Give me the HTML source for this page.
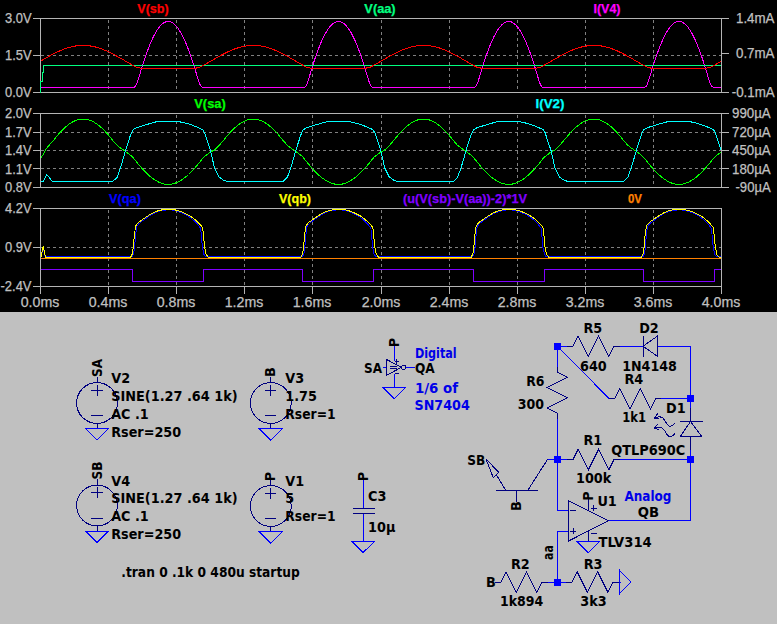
<!DOCTYPE html>
<html><head><meta charset="utf-8"><title>LTspice</title>
<style>html,body{margin:0;padding:0;background:#c0c0c0;overflow:hidden}svg{display:block}</style></head>
<body>
<svg width="777" height="624" viewBox="0 0 777 624">
<rect x="0" y="0" width="777" height="624" fill="#c0c0c0"/>
<rect x="0" y="0" width="777" height="312" fill="#000"/>
<g shape-rendering="crispEdges">
<line x1="108.5" y1="19.5" x2="108.5" y2="92.5" stroke="#808080" stroke-width="1" stroke-dasharray="3 3"/>
<line x1="176.5" y1="19.5" x2="176.5" y2="92.5" stroke="#808080" stroke-width="1" stroke-dasharray="3 3"/>
<line x1="244.5" y1="19.5" x2="244.5" y2="92.5" stroke="#808080" stroke-width="1" stroke-dasharray="3 3"/>
<line x1="312.5" y1="19.5" x2="312.5" y2="92.5" stroke="#808080" stroke-width="1" stroke-dasharray="3 3"/>
<line x1="381.5" y1="19.5" x2="381.5" y2="92.5" stroke="#808080" stroke-width="1" stroke-dasharray="3 3"/>
<line x1="449.5" y1="19.5" x2="449.5" y2="92.5" stroke="#808080" stroke-width="1" stroke-dasharray="3 3"/>
<line x1="517.5" y1="19.5" x2="517.5" y2="92.5" stroke="#808080" stroke-width="1" stroke-dasharray="3 3"/>
<line x1="585.5" y1="19.5" x2="585.5" y2="92.5" stroke="#808080" stroke-width="1" stroke-dasharray="3 3"/>
<line x1="653.5" y1="19.5" x2="653.5" y2="92.5" stroke="#808080" stroke-width="1" stroke-dasharray="3 3"/>
<line x1="41" y1="55.5" x2="721" y2="55.5" stroke="#808080" stroke-width="1" stroke-dasharray="3 3"/>
<line x1="33" y1="18.5" x2="729" y2="18.5" stroke="#b4b4b4" stroke-width="1" />
<line x1="33" y1="92.5" x2="729" y2="92.5" stroke="#b4b4b4" stroke-width="1" />
<line x1="40.5" y1="18.5" x2="40.5" y2="92.5" stroke="#b4b4b4" stroke-width="1" />
<line x1="721.5" y1="18.5" x2="721.5" y2="92.5" stroke="#b4b4b4" stroke-width="1" />
<line x1="33" y1="55.5" x2="41" y2="55.5" stroke="#b4b4b4" stroke-width="1" />
<line x1="108.5" y1="114.5" x2="108.5" y2="187.5" stroke="#808080" stroke-width="1" stroke-dasharray="3 3"/>
<line x1="176.5" y1="114.5" x2="176.5" y2="187.5" stroke="#808080" stroke-width="1" stroke-dasharray="3 3"/>
<line x1="244.5" y1="114.5" x2="244.5" y2="187.5" stroke="#808080" stroke-width="1" stroke-dasharray="3 3"/>
<line x1="312.5" y1="114.5" x2="312.5" y2="187.5" stroke="#808080" stroke-width="1" stroke-dasharray="3 3"/>
<line x1="381.5" y1="114.5" x2="381.5" y2="187.5" stroke="#808080" stroke-width="1" stroke-dasharray="3 3"/>
<line x1="449.5" y1="114.5" x2="449.5" y2="187.5" stroke="#808080" stroke-width="1" stroke-dasharray="3 3"/>
<line x1="517.5" y1="114.5" x2="517.5" y2="187.5" stroke="#808080" stroke-width="1" stroke-dasharray="3 3"/>
<line x1="585.5" y1="114.5" x2="585.5" y2="187.5" stroke="#808080" stroke-width="1" stroke-dasharray="3 3"/>
<line x1="653.5" y1="114.5" x2="653.5" y2="187.5" stroke="#808080" stroke-width="1" stroke-dasharray="3 3"/>
<line x1="41" y1="132.5" x2="721" y2="132.5" stroke="#808080" stroke-width="1" stroke-dasharray="3 3"/>
<line x1="41" y1="150.5" x2="721" y2="150.5" stroke="#808080" stroke-width="1" stroke-dasharray="3 3"/>
<line x1="41" y1="168.5" x2="721" y2="168.5" stroke="#808080" stroke-width="1" stroke-dasharray="3 3"/>
<line x1="33" y1="113.5" x2="729" y2="113.5" stroke="#b4b4b4" stroke-width="1" />
<line x1="33" y1="187.5" x2="729" y2="187.5" stroke="#b4b4b4" stroke-width="1" />
<line x1="40.5" y1="113.5" x2="40.5" y2="187.5" stroke="#b4b4b4" stroke-width="1" />
<line x1="721.5" y1="113.5" x2="721.5" y2="187.5" stroke="#b4b4b4" stroke-width="1" />
<line x1="33" y1="132.5" x2="41" y2="132.5" stroke="#b4b4b4" stroke-width="1" />
<line x1="33" y1="150.5" x2="41" y2="150.5" stroke="#b4b4b4" stroke-width="1" />
<line x1="33" y1="168.5" x2="41" y2="168.5" stroke="#b4b4b4" stroke-width="1" />
<line x1="108.5" y1="209.5" x2="108.5" y2="286.5" stroke="#808080" stroke-width="1" stroke-dasharray="3 3"/>
<line x1="176.5" y1="209.5" x2="176.5" y2="286.5" stroke="#808080" stroke-width="1" stroke-dasharray="3 3"/>
<line x1="244.5" y1="209.5" x2="244.5" y2="286.5" stroke="#808080" stroke-width="1" stroke-dasharray="3 3"/>
<line x1="312.5" y1="209.5" x2="312.5" y2="286.5" stroke="#808080" stroke-width="1" stroke-dasharray="3 3"/>
<line x1="381.5" y1="209.5" x2="381.5" y2="286.5" stroke="#808080" stroke-width="1" stroke-dasharray="3 3"/>
<line x1="449.5" y1="209.5" x2="449.5" y2="286.5" stroke="#808080" stroke-width="1" stroke-dasharray="3 3"/>
<line x1="517.5" y1="209.5" x2="517.5" y2="286.5" stroke="#808080" stroke-width="1" stroke-dasharray="3 3"/>
<line x1="585.5" y1="209.5" x2="585.5" y2="286.5" stroke="#808080" stroke-width="1" stroke-dasharray="3 3"/>
<line x1="653.5" y1="209.5" x2="653.5" y2="286.5" stroke="#808080" stroke-width="1" stroke-dasharray="3 3"/>
<line x1="41" y1="247.5" x2="721" y2="247.5" stroke="#808080" stroke-width="1" stroke-dasharray="3 3"/>
<line x1="33" y1="208.5" x2="722" y2="208.5" stroke="#b4b4b4" stroke-width="1" />
<line x1="33" y1="286.5" x2="722" y2="286.5" stroke="#b4b4b4" stroke-width="1" />
<line x1="40.5" y1="208.5" x2="40.5" y2="286.5" stroke="#b4b4b4" stroke-width="1" />
<line x1="721.5" y1="208.5" x2="721.5" y2="286.5" stroke="#b4b4b4" stroke-width="1" />
<line x1="33" y1="247.5" x2="41" y2="247.5" stroke="#b4b4b4" stroke-width="1" />
<line x1="40.5" y1="286.5" x2="40.5" y2="294" stroke="#b4b4b4" stroke-width="1" />
<line x1="108.5" y1="286.5" x2="108.5" y2="294" stroke="#b4b4b4" stroke-width="1" />
<line x1="176.5" y1="286.5" x2="176.5" y2="294" stroke="#b4b4b4" stroke-width="1" />
<line x1="244.5" y1="286.5" x2="244.5" y2="294" stroke="#b4b4b4" stroke-width="1" />
<line x1="312.5" y1="286.5" x2="312.5" y2="294" stroke="#b4b4b4" stroke-width="1" />
<line x1="381.5" y1="286.5" x2="381.5" y2="294" stroke="#b4b4b4" stroke-width="1" />
<line x1="449.5" y1="286.5" x2="449.5" y2="294" stroke="#b4b4b4" stroke-width="1" />
<line x1="517.5" y1="286.5" x2="517.5" y2="294" stroke="#b4b4b4" stroke-width="1" />
<line x1="585.5" y1="286.5" x2="585.5" y2="294" stroke="#b4b4b4" stroke-width="1" />
<line x1="653.5" y1="286.5" x2="653.5" y2="294" stroke="#b4b4b4" stroke-width="1" />
<line x1="721.5" y1="286.5" x2="721.5" y2="294" stroke="#b4b4b4" stroke-width="1" />
<line x1="721" y1="53.5" x2="729" y2="53.5" stroke="#b4b4b4" stroke-width="1" />
<line x1="721" y1="132.5" x2="729" y2="132.5" stroke="#b4b4b4" stroke-width="1" />
<line x1="721" y1="150.5" x2="729" y2="150.5" stroke="#b4b4b4" stroke-width="1" />
<line x1="721" y1="168.5" x2="729" y2="168.5" stroke="#b4b4b4" stroke-width="1" />
<polyline points="40.5,87.6 41.0,87.6 41.5,87.6 42.0,87.6 42.5,87.6 43.0,87.6 43.5,87.6 44.0,87.6 44.5,87.6 45.0,87.6 45.5,87.6 46.0,87.6 46.5,87.6 47.0,87.6 47.5,87.6 48.0,87.6 48.5,87.6 49.0,87.6 49.5,87.6 50.0,87.6 50.5,87.6 51.0,87.6 51.5,87.6 52.0,87.6 52.5,87.6 53.0,87.6 53.5,87.6 54.0,87.6 54.5,87.6 55.0,87.6 55.5,87.6 56.0,87.6 56.5,87.6 57.0,87.6 57.5,87.6 58.0,87.6 58.5,87.6 59.0,87.6 59.5,87.6 60.0,87.6 60.5,87.6 61.0,87.6 61.5,87.6 62.0,87.6 62.5,87.6 63.0,87.6 63.5,87.6 64.0,87.6 64.5,87.6 65.0,87.6 65.5,87.6 66.0,87.6 66.5,87.6 67.0,87.6 67.5,87.6 68.0,87.6 68.5,87.6 69.0,87.6 69.5,87.6 70.0,87.6 70.5,87.6 71.0,87.6 71.5,87.6 72.0,87.6 72.5,87.6 73.0,87.6 73.5,87.6 74.0,87.6 74.5,87.6 75.0,87.6 75.5,87.6 76.0,87.6 76.5,87.6 77.0,87.6 77.5,87.6 78.0,87.6 78.5,87.6 79.0,87.6 79.5,87.6 80.0,87.6 80.5,87.6 81.0,87.6 81.5,87.6 82.0,87.6 82.5,87.6 83.0,87.6 83.5,87.6 84.0,87.6 84.5,87.6 85.0,87.6 85.5,87.6 86.0,87.6 86.5,87.6 87.0,87.6 87.5,87.6 88.0,87.6 88.5,87.6 89.0,87.6 89.5,87.6 90.0,87.6 90.5,87.6 91.0,87.6 91.5,87.6 92.0,87.6 92.5,87.6 93.0,87.6 93.5,87.6 94.0,87.6 94.5,87.6 95.0,87.6 95.5,87.6 96.0,87.6 96.5,87.6 97.0,87.6 97.5,87.6 98.0,87.6 98.5,87.6 99.0,87.6 99.5,87.6 100.0,87.6 100.5,87.6 101.0,87.6 101.5,87.6 102.0,87.6 102.5,87.6 103.0,87.6 103.5,87.6 104.0,87.6 104.5,87.6 105.0,87.6 105.5,87.6 106.0,87.6 106.5,87.6 107.0,87.6 107.5,87.6 108.0,87.6 108.5,87.6 109.0,87.6 109.5,87.6 110.0,87.6 110.5,87.6 111.0,87.6 111.5,87.6 112.0,87.6 112.5,87.6 113.0,87.6 113.5,87.6 114.0,87.6 114.5,87.6 115.0,87.6 115.5,87.6 116.0,87.6 116.5,87.6 117.0,87.6 117.5,87.6 118.0,87.6 118.5,87.6 119.0,87.6 119.5,87.6 120.0,87.6 120.5,87.6 121.0,87.6 121.5,87.6 122.0,87.6 122.5,87.6 123.0,87.6 123.5,87.6 124.0,87.6 124.5,87.6 125.0,87.6 125.5,87.6 126.0,87.6 126.5,87.6 127.0,87.6 127.5,87.6 128.0,87.6 128.5,87.6 129.0,87.6 129.5,87.6 130.0,87.6 130.5,87.6 131.0,87.6 131.5,87.5 132.0,87.5 132.5,87.5 133.0,87.5 133.5,87.4 134.0,87.2 134.5,87.0 135.0,86.7 135.5,86.1 136.0,85.3 136.5,84.3 137.0,83.1 137.5,81.7 138.0,80.2 138.5,78.6 139.0,77.0 139.5,75.3 140.0,73.7 140.5,72.0 141.0,70.4 141.5,68.7 142.0,67.1 142.5,65.5 143.0,64.0 143.5,62.4 144.0,60.9 144.5,59.4 145.0,57.9 145.5,56.4 146.0,55.0 146.5,53.6 147.0,52.2 147.5,50.8 148.0,49.5 148.5,48.2 149.0,46.9 149.5,45.6 150.0,44.4 150.5,43.2 151.0,42.0 151.5,40.9 152.0,39.8 152.5,38.7 153.0,37.6 153.5,36.6 154.0,35.6 154.5,34.7 155.0,33.7 155.5,32.8 156.0,32.0 156.5,31.1 157.0,30.3 157.5,29.6 158.0,28.8 158.5,28.1 159.0,27.5 159.5,26.8 160.0,26.3 160.5,25.7 161.0,25.2 161.5,24.7 162.0,24.2 162.5,23.8 163.0,23.4 163.5,23.0 164.0,22.7 164.5,22.4 165.0,22.2 165.5,22.0 166.0,21.8 166.5,21.7 167.0,21.6 167.5,21.5 168.0,21.5 168.5,21.5 169.0,21.5 169.5,21.6 170.0,21.7 170.5,21.8 171.0,22.0 171.5,22.2 172.0,22.5 172.5,22.8 173.0,23.1 173.5,23.5 174.0,23.9 174.5,24.3 175.0,24.8 175.5,25.3 176.0,25.8 176.5,26.4 177.0,27.0 177.5,27.6 178.0,28.3 178.5,29.0 179.0,29.8 179.5,30.5 180.0,31.4 180.5,32.2 181.0,33.1 181.5,34.0 182.0,34.9 182.5,35.9 183.0,36.9 183.5,37.9 184.0,39.0 184.5,40.1 185.0,41.2 185.5,42.3 186.0,43.5 186.5,44.7 187.0,45.9 187.5,47.2 188.0,48.5 188.5,49.8 189.0,51.2 189.5,52.5 190.0,53.9 190.5,55.3 191.0,56.8 191.5,58.2 192.0,59.7 192.5,61.3 193.0,62.8 193.5,64.3 194.0,65.9 194.5,67.5 195.0,69.1 195.5,70.8 196.0,72.4 196.5,74.1 197.0,75.7 197.5,77.4 198.0,79.0 198.5,80.6 199.0,82.1 199.5,83.4 200.0,84.6 200.5,85.6 201.0,86.3 201.5,86.8 202.0,87.1 202.5,87.3 203.0,87.4 203.5,87.5 204.0,87.5 204.5,87.5 205.0,87.5 205.5,87.6 206.0,87.6 206.5,87.6 207.0,87.6 207.5,87.6 208.0,87.6 208.5,87.6 209.0,87.6 209.5,87.6 210.0,87.6 210.5,87.6 211.0,87.6 211.5,87.6 212.0,87.6 212.5,87.6 213.0,87.6 213.5,87.6 214.0,87.6 214.5,87.6 215.0,87.6 215.5,87.6 216.0,87.6 216.5,87.6 217.0,87.6 217.5,87.6 218.0,87.6 218.5,87.6 219.0,87.6 219.5,87.6 220.0,87.6 220.5,87.6 221.0,87.6 221.5,87.6 222.0,87.6 222.5,87.6 223.0,87.6 223.5,87.6 224.0,87.6 224.5,87.6 225.0,87.6 225.5,87.6 226.0,87.6 226.5,87.6 227.0,87.6 227.5,87.6 228.0,87.6 228.5,87.6 229.0,87.6 229.5,87.6 230.0,87.6 230.5,87.6 231.0,87.6 231.5,87.6 232.0,87.6 232.5,87.6 233.0,87.6 233.5,87.6 234.0,87.6 234.5,87.6 235.0,87.6 235.5,87.6 236.0,87.6 236.5,87.6 237.0,87.6 237.5,87.6 238.0,87.6 238.5,87.6 239.0,87.6 239.5,87.6 240.0,87.6 240.5,87.6 241.0,87.6 241.5,87.6 242.0,87.6 242.5,87.6 243.0,87.6 243.5,87.6 244.0,87.6 244.5,87.6 245.0,87.6 245.5,87.6 246.0,87.6 246.5,87.6 247.0,87.6 247.5,87.6 248.0,87.6 248.5,87.6 249.0,87.6 249.5,87.6 250.0,87.6 250.5,87.6 251.0,87.6 251.5,87.6 252.0,87.6 252.5,87.6 253.0,87.6 253.5,87.6 254.0,87.6 254.5,87.6 255.0,87.6 255.5,87.6 256.0,87.6 256.5,87.6 257.0,87.6 257.5,87.6 258.0,87.6 258.5,87.6 259.0,87.6 259.5,87.6 260.0,87.6 260.5,87.6 261.0,87.6 261.5,87.6 262.0,87.6 262.5,87.6 263.0,87.6 263.5,87.6 264.0,87.6 264.5,87.6 265.0,87.6 265.5,87.6 266.0,87.6 266.5,87.6 267.0,87.6 267.5,87.6 268.0,87.6 268.5,87.6 269.0,87.6 269.5,87.6 270.0,87.6 270.5,87.6 271.0,87.6 271.5,87.6 272.0,87.6 272.5,87.6 273.0,87.6 273.5,87.6 274.0,87.6 274.5,87.6 275.0,87.6 275.5,87.6 276.0,87.6 276.5,87.6 277.0,87.6 277.5,87.6 278.0,87.6 278.5,87.6 279.0,87.6 279.5,87.6 280.0,87.6 280.5,87.6 281.0,87.6 281.5,87.6 282.0,87.6 282.5,87.6 283.0,87.6 283.5,87.6 284.0,87.6 284.5,87.6 285.0,87.6 285.5,87.6 286.0,87.6 286.5,87.6 287.0,87.6 287.5,87.6 288.0,87.6 288.5,87.6 289.0,87.6 289.5,87.6 290.0,87.6 290.5,87.6 291.0,87.6 291.5,87.6 292.0,87.6 292.5,87.6 293.0,87.6 293.5,87.6 294.0,87.6 294.5,87.6 295.0,87.6 295.5,87.6 296.0,87.6 296.5,87.6 297.0,87.6 297.5,87.6 298.0,87.6 298.5,87.6 299.0,87.6 299.5,87.6 300.0,87.6 300.5,87.6 301.0,87.6 301.5,87.6 302.0,87.5 302.5,87.5 303.0,87.5 303.5,87.4 304.0,87.3 304.5,87.1 305.0,86.9 305.5,86.4 306.0,85.8 306.5,84.9 307.0,83.8 307.5,82.4 308.0,81.0 308.5,79.4 309.0,77.8 309.5,76.2 310.0,74.5 310.5,72.8 311.0,71.2 311.5,69.5 312.0,67.9 312.5,66.3 313.0,64.7 313.5,63.2 314.0,61.6 314.5,60.1 315.0,58.6 315.5,57.1 316.0,55.7 316.5,54.3 317.0,52.9 317.5,51.5 318.0,50.1 318.5,48.8 319.0,47.5 319.5,46.3 320.0,45.0 320.5,43.8 321.0,42.6 321.5,41.5 322.0,40.3 322.5,39.2 323.0,38.2 323.5,37.1 324.0,36.1 324.5,35.1 325.0,34.2 325.5,33.3 326.0,32.4 326.5,31.6 327.0,30.7 327.5,30.0 328.0,29.2 328.5,28.5 329.0,27.8 329.5,27.2 330.0,26.5 330.5,26.0 331.0,25.4 331.5,24.9 332.0,24.4 332.5,24.0 333.0,23.6 333.5,23.2 334.0,22.9 334.5,22.6 335.0,22.3 335.5,22.1 336.0,21.9 336.5,21.7 337.0,21.6 337.5,21.5 338.0,21.5 338.5,21.5 339.0,21.5 339.5,21.5 340.0,21.6 340.5,21.8 341.0,21.9 341.5,22.1 342.0,22.4 342.5,22.6 343.0,23.0 343.5,23.3 344.0,23.7 344.5,24.1 345.0,24.5 345.5,25.0 346.0,25.6 346.5,26.1 347.0,26.7 347.5,27.3 348.0,28.0 348.5,28.7 349.0,29.4 349.5,30.2 350.0,30.9 350.5,31.8 351.0,32.6 351.5,33.5 352.0,34.4 352.5,35.4 353.0,36.4 353.5,37.4 354.0,38.4 354.5,39.5 355.0,40.6 355.5,41.7 356.0,42.9 356.5,44.1 357.0,45.3 357.5,46.6 358.0,47.8 358.5,49.2 359.0,50.5 359.5,51.8 360.0,53.2 360.5,54.6 361.0,56.1 361.5,57.5 362.0,59.0 362.5,60.5 363.0,62.0 363.5,63.6 364.0,65.1 364.5,66.7 365.0,68.3 365.5,70.0 366.0,71.6 366.5,73.2 367.0,74.9 367.5,76.6 368.0,78.2 368.5,79.8 369.0,81.4 369.5,82.8 370.0,84.1 370.5,85.1 371.0,85.9 371.5,86.5 372.0,86.9 372.5,87.2 373.0,87.3 373.5,87.4 374.0,87.5 374.5,87.5 375.0,87.5 375.5,87.6 376.0,87.6 376.5,87.6 377.0,87.6 377.5,87.6 378.0,87.6 378.5,87.6 379.0,87.6 379.5,87.6 380.0,87.6 380.5,87.6 381.0,87.6 381.5,87.6 382.0,87.6 382.5,87.6 383.0,87.6 383.5,87.6 384.0,87.6 384.5,87.6 385.0,87.6 385.5,87.6 386.0,87.6 386.5,87.6 387.0,87.6 387.5,87.6 388.0,87.6 388.5,87.6 389.0,87.6 389.5,87.6 390.0,87.6 390.5,87.6 391.0,87.6 391.5,87.6 392.0,87.6 392.5,87.6 393.0,87.6 393.5,87.6 394.0,87.6 394.5,87.6 395.0,87.6 395.5,87.6 396.0,87.6 396.5,87.6 397.0,87.6 397.5,87.6 398.0,87.6 398.5,87.6 399.0,87.6 399.5,87.6 400.0,87.6 400.5,87.6 401.0,87.6 401.5,87.6 402.0,87.6 402.5,87.6 403.0,87.6 403.5,87.6 404.0,87.6 404.5,87.6 405.0,87.6 405.5,87.6 406.0,87.6 406.5,87.6 407.0,87.6 407.5,87.6 408.0,87.6 408.5,87.6 409.0,87.6 409.5,87.6 410.0,87.6 410.5,87.6 411.0,87.6 411.5,87.6 412.0,87.6 412.5,87.6 413.0,87.6 413.5,87.6 414.0,87.6 414.5,87.6 415.0,87.6 415.5,87.6 416.0,87.6 416.5,87.6 417.0,87.6 417.5,87.6 418.0,87.6 418.5,87.6 419.0,87.6 419.5,87.6 420.0,87.6 420.5,87.6 421.0,87.6 421.5,87.6 422.0,87.6 422.5,87.6 423.0,87.6 423.5,87.6 424.0,87.6 424.5,87.6 425.0,87.6 425.5,87.6 426.0,87.6 426.5,87.6 427.0,87.6 427.5,87.6 428.0,87.6 428.5,87.6 429.0,87.6 429.5,87.6 430.0,87.6 430.5,87.6 431.0,87.6 431.5,87.6 432.0,87.6 432.5,87.6 433.0,87.6 433.5,87.6 434.0,87.6 434.5,87.6 435.0,87.6 435.5,87.6 436.0,87.6 436.5,87.6 437.0,87.6 437.5,87.6 438.0,87.6 438.5,87.6 439.0,87.6 439.5,87.6 440.0,87.6 440.5,87.6 441.0,87.6 441.5,87.6 442.0,87.6 442.5,87.6 443.0,87.6 443.5,87.6 444.0,87.6 444.5,87.6 445.0,87.6 445.5,87.6 446.0,87.6 446.5,87.6 447.0,87.6 447.5,87.6 448.0,87.6 448.5,87.6 449.0,87.6 449.5,87.6 450.0,87.6 450.5,87.6 451.0,87.6 451.5,87.6 452.0,87.6 452.5,87.6 453.0,87.6 453.5,87.6 454.0,87.6 454.5,87.6 455.0,87.6 455.5,87.6 456.0,87.6 456.5,87.6 457.0,87.6 457.5,87.6 458.0,87.6 458.5,87.6 459.0,87.6 459.5,87.6 460.0,87.6 460.5,87.6 461.0,87.6 461.5,87.6 462.0,87.6 462.5,87.6 463.0,87.6 463.5,87.6 464.0,87.6 464.5,87.6 465.0,87.6 465.5,87.6 466.0,87.6 466.5,87.6 467.0,87.6 467.5,87.6 468.0,87.6 468.5,87.6 469.0,87.6 469.5,87.6 470.0,87.6 470.5,87.6 471.0,87.6 471.5,87.6 472.0,87.5 472.5,87.5 473.0,87.5 473.5,87.5 474.0,87.4 474.5,87.2 475.0,87.0 475.5,86.7 476.0,86.1 476.5,85.3 477.0,84.3 477.5,83.1 478.0,81.7 478.5,80.2 479.0,78.6 479.5,77.0 480.0,75.3 480.5,73.7 481.0,72.0 481.5,70.4 482.0,68.7 482.5,67.1 483.0,65.5 483.5,64.0 484.0,62.4 484.5,60.9 485.0,59.4 485.5,57.9 486.0,56.4 486.5,55.0 487.0,53.6 487.5,52.2 488.0,50.8 488.5,49.5 489.0,48.2 489.5,46.9 490.0,45.6 490.5,44.4 491.0,43.2 491.5,42.0 492.0,40.9 492.5,39.8 493.0,38.7 493.5,37.6 494.0,36.6 494.5,35.6 495.0,34.7 495.5,33.7 496.0,32.8 496.5,32.0 497.0,31.1 497.5,30.3 498.0,29.6 498.5,28.8 499.0,28.1 499.5,27.5 500.0,26.8 500.5,26.3 501.0,25.7 501.5,25.2 502.0,24.7 502.5,24.2 503.0,23.8 503.5,23.4 504.0,23.0 504.5,22.7 505.0,22.4 505.5,22.2 506.0,22.0 506.5,21.8 507.0,21.7 507.5,21.6 508.0,21.5 508.5,21.5 509.0,21.5 509.5,21.5 510.0,21.6 510.5,21.7 511.0,21.8 511.5,22.0 512.0,22.2 512.5,22.5 513.0,22.8 513.5,23.1 514.0,23.5 514.5,23.9 515.0,24.3 515.5,24.8 516.0,25.3 516.5,25.8 517.0,26.4 517.5,27.0 518.0,27.6 518.5,28.3 519.0,29.0 519.5,29.8 520.0,30.5 520.5,31.4 521.0,32.2 521.5,33.1 522.0,34.0 522.5,34.9 523.0,35.9 523.5,36.9 524.0,37.9 524.5,39.0 525.0,40.1 525.5,41.2 526.0,42.3 526.5,43.5 527.0,44.7 527.5,45.9 528.0,47.2 528.5,48.5 529.0,49.8 529.5,51.2 530.0,52.5 530.5,53.9 531.0,55.3 531.5,56.8 532.0,58.2 532.5,59.7 533.0,61.3 533.5,62.8 534.0,64.3 534.5,65.9 535.0,67.5 535.5,69.1 536.0,70.8 536.5,72.4 537.0,74.1 537.5,75.7 538.0,77.4 538.5,79.0 539.0,80.6 539.5,82.1 540.0,83.4 540.5,84.6 541.0,85.6 541.5,86.3 542.0,86.8 542.5,87.1 543.0,87.3 543.5,87.4 544.0,87.5 544.5,87.5 545.0,87.5 545.5,87.5 546.0,87.6 546.5,87.6 547.0,87.6 547.5,87.6 548.0,87.6 548.5,87.6 549.0,87.6 549.5,87.6 550.0,87.6 550.5,87.6 551.0,87.6 551.5,87.6 552.0,87.6 552.5,87.6 553.0,87.6 553.5,87.6 554.0,87.6 554.5,87.6 555.0,87.6 555.5,87.6 556.0,87.6 556.5,87.6 557.0,87.6 557.5,87.6 558.0,87.6 558.5,87.6 559.0,87.6 559.5,87.6 560.0,87.6 560.5,87.6 561.0,87.6 561.5,87.6 562.0,87.6 562.5,87.6 563.0,87.6 563.5,87.6 564.0,87.6 564.5,87.6 565.0,87.6 565.5,87.6 566.0,87.6 566.5,87.6 567.0,87.6 567.5,87.6 568.0,87.6 568.5,87.6 569.0,87.6 569.5,87.6 570.0,87.6 570.5,87.6 571.0,87.6 571.5,87.6 572.0,87.6 572.5,87.6 573.0,87.6 573.5,87.6 574.0,87.6 574.5,87.6 575.0,87.6 575.5,87.6 576.0,87.6 576.5,87.6 577.0,87.6 577.5,87.6 578.0,87.6 578.5,87.6 579.0,87.6 579.5,87.6 580.0,87.6 580.5,87.6 581.0,87.6 581.5,87.6 582.0,87.6 582.5,87.6 583.0,87.6 583.5,87.6 584.0,87.6 584.5,87.6 585.0,87.6 585.5,87.6 586.0,87.6 586.5,87.6 587.0,87.6 587.5,87.6 588.0,87.6 588.5,87.6 589.0,87.6 589.5,87.6 590.0,87.6 590.5,87.6 591.0,87.6 591.5,87.6 592.0,87.6 592.5,87.6 593.0,87.6 593.5,87.6 594.0,87.6 594.5,87.6 595.0,87.6 595.5,87.6 596.0,87.6 596.5,87.6 597.0,87.6 597.5,87.6 598.0,87.6 598.5,87.6 599.0,87.6 599.5,87.6 600.0,87.6 600.5,87.6 601.0,87.6 601.5,87.6 602.0,87.6 602.5,87.6 603.0,87.6 603.5,87.6 604.0,87.6 604.5,87.6 605.0,87.6 605.5,87.6 606.0,87.6 606.5,87.6 607.0,87.6 607.5,87.6 608.0,87.6 608.5,87.6 609.0,87.6 609.5,87.6 610.0,87.6 610.5,87.6 611.0,87.6 611.5,87.6 612.0,87.6 612.5,87.6 613.0,87.6 613.5,87.6 614.0,87.6 614.5,87.6 615.0,87.6 615.5,87.6 616.0,87.6 616.5,87.6 617.0,87.6 617.5,87.6 618.0,87.6 618.5,87.6 619.0,87.6 619.5,87.6 620.0,87.6 620.5,87.6 621.0,87.6 621.5,87.6 622.0,87.6 622.5,87.6 623.0,87.6 623.5,87.6 624.0,87.6 624.5,87.6 625.0,87.6 625.5,87.6 626.0,87.6 626.5,87.6 627.0,87.6 627.5,87.6 628.0,87.6 628.5,87.6 629.0,87.6 629.5,87.6 630.0,87.6 630.5,87.6 631.0,87.6 631.5,87.6 632.0,87.6 632.5,87.6 633.0,87.6 633.5,87.6 634.0,87.6 634.5,87.6 635.0,87.6 635.5,87.6 636.0,87.6 636.5,87.6 637.0,87.6 637.5,87.6 638.0,87.6 638.5,87.6 639.0,87.6 639.5,87.6 640.0,87.6 640.5,87.6 641.0,87.6 641.5,87.6 642.0,87.6 642.5,87.5 643.0,87.5 643.5,87.5 644.0,87.4 644.5,87.3 645.0,87.1 645.5,86.9 646.0,86.4 646.5,85.8 647.0,84.9 647.5,83.8 648.0,82.4 648.5,81.0 649.0,79.4 649.5,77.8 650.0,76.2 650.5,74.5 651.0,72.8 651.5,71.2 652.0,69.5 652.5,67.9 653.0,66.3 653.5,64.7 654.0,63.2 654.5,61.6 655.0,60.1 655.5,58.6 656.0,57.1 656.5,55.7 657.0,54.3 657.5,52.9 658.0,51.5 658.5,50.1 659.0,48.8 659.5,47.5 660.0,46.3 660.5,45.0 661.0,43.8 661.5,42.6 662.0,41.5 662.5,40.3 663.0,39.2 663.5,38.2 664.0,37.1 664.5,36.1 665.0,35.1 665.5,34.2 666.0,33.3 666.5,32.4 667.0,31.6 667.5,30.7 668.0,30.0 668.5,29.2 669.0,28.5 669.5,27.8 670.0,27.2 670.5,26.5 671.0,26.0 671.5,25.4 672.0,24.9 672.5,24.4 673.0,24.0 673.5,23.6 674.0,23.2 674.5,22.9 675.0,22.6 675.5,22.3 676.0,22.1 676.5,21.9 677.0,21.7 677.5,21.6 678.0,21.5 678.5,21.5 679.0,21.5 679.5,21.5 680.0,21.5 680.5,21.6 681.0,21.8 681.5,21.9 682.0,22.1 682.5,22.4 683.0,22.6 683.5,23.0 684.0,23.3 684.5,23.7 685.0,24.1 685.5,24.5 686.0,25.0 686.5,25.6 687.0,26.1 687.5,26.7 688.0,27.3 688.5,28.0 689.0,28.7 689.5,29.4 690.0,30.2 690.5,30.9 691.0,31.8 691.5,32.6 692.0,33.5 692.5,34.4 693.0,35.4 693.5,36.4 694.0,37.4 694.5,38.4 695.0,39.5 695.5,40.6 696.0,41.7 696.5,42.9 697.0,44.1 697.5,45.3 698.0,46.6 698.5,47.8 699.0,49.2 699.5,50.5 700.0,51.8 700.5,53.2 701.0,54.6 701.5,56.1 702.0,57.5 702.5,59.0 703.0,60.5 703.5,62.0 704.0,63.6 704.5,65.1 705.0,66.7 705.5,68.3 706.0,70.0 706.5,71.6 707.0,73.2 707.5,74.9 708.0,76.6 708.5,78.2 709.0,79.8 709.5,81.4 710.0,82.8 710.5,84.1 711.0,85.1 711.5,85.9 712.0,86.5 712.5,86.9 713.0,87.2 713.5,87.3 714.0,87.4 714.5,87.5 715.0,87.5 715.5,87.5 716.0,87.6 716.5,87.6 717.0,87.6 717.5,87.6 718.0,87.6 718.5,87.6 719.0,87.6 719.5,87.6 720.0,87.6 720.5,87.6 721.0,87.6" fill="none" stroke="#ff00ff" stroke-width="1" />
<polyline points="40.5,92.5 40.5,81.0 42.0,81.0 42.0,72.5 43.2,72.5 43.2,65.5 721.0,65.5" fill="none" stroke="#00ff80" stroke-width="1" />
<polyline points="40.5,61.2 41.0,60.9 41.5,60.6 42.0,60.3 42.5,60.0 43.0,59.7 43.5,59.4 44.0,59.1 44.5,58.9 45.0,58.6 45.5,58.3 46.0,58.0 46.5,57.7 47.0,57.4 47.5,57.1 48.0,56.9 48.5,56.6 49.0,56.3 49.5,56.0 50.0,55.8 50.5,55.5 51.0,55.2 51.5,54.9 52.0,54.7 52.5,54.4 53.0,54.1 53.5,53.9 54.0,53.6 54.5,53.4 55.0,53.1 55.5,52.9 56.0,52.6 56.5,52.4 57.0,52.1 57.5,51.9 58.0,51.7 58.5,51.4 59.0,51.2 59.5,51.0 60.0,50.8 60.5,50.6 61.0,50.3 61.5,50.1 62.0,49.9 62.5,49.7 63.0,49.5 63.5,49.3 64.0,49.1 64.5,48.9 65.0,48.8 65.5,48.6 66.0,48.4 66.5,48.2 67.0,48.1 67.5,47.9 68.0,47.8 68.5,47.6 69.0,47.5 69.5,47.3 70.0,47.2 70.5,47.1 71.0,46.9 71.5,46.8 72.0,46.7 72.5,46.6 73.0,46.5 73.5,46.4 74.0,46.3 74.5,46.2 75.0,46.1 75.5,46.0 76.0,45.9 76.5,45.8 77.0,45.8 77.5,45.7 78.0,45.7 78.5,45.6 79.0,45.6 79.5,45.5 80.0,45.5 80.5,45.5 81.0,45.4 81.5,45.4 82.0,45.4 82.5,45.4 83.0,45.4 83.5,45.4 84.0,45.4 84.5,45.4 85.0,45.4 85.5,45.5 86.0,45.5 86.5,45.5 87.0,45.6 87.5,45.6 88.0,45.6 88.5,45.7 89.0,45.8 89.5,45.8 90.0,45.9 90.5,46.0 91.0,46.1 91.5,46.1 92.0,46.2 92.5,46.3 93.0,46.4 93.5,46.5 94.0,46.7 94.5,46.8 95.0,46.9 95.5,47.0 96.0,47.2 96.5,47.3 97.0,47.4 97.5,47.6 98.0,47.7 98.5,47.9 99.0,48.0 99.5,48.2 100.0,48.4 100.5,48.5 101.0,48.7 101.5,48.9 102.0,49.1 102.5,49.3 103.0,49.5 103.5,49.7 104.0,49.9 104.5,50.1 105.0,50.3 105.5,50.5 106.0,50.7 106.5,50.9 107.0,51.2 107.5,51.4 108.0,51.6 108.5,51.8 109.0,52.1 109.5,52.3 110.0,52.6 110.5,52.8 111.0,53.1 111.5,53.3 112.0,53.6 112.5,53.8 113.0,54.1 113.5,54.3 114.0,54.6 114.5,54.9 115.0,55.1 115.5,55.4 116.0,55.7 116.5,56.0 117.0,56.2 117.5,56.5 118.0,56.8 118.5,57.1 119.0,57.4 119.5,57.6 120.0,57.9 120.5,58.2 121.0,58.5 121.5,58.8 122.0,59.1 122.5,59.4 123.0,59.6 123.5,59.9 124.0,60.2 124.5,60.5 125.0,60.8 125.5,61.1 126.0,61.4 126.5,61.7 127.0,62.0 127.5,62.3 128.0,62.6 128.5,62.8 129.0,63.1 129.5,63.4 130.0,63.7 130.5,64.0 131.0,64.3 131.5,64.6 132.0,64.9 132.5,65.1 133.0,65.4 133.5,65.7 134.0,66.0 134.5,66.2 135.0,66.5 135.5,66.7 136.0,67.0 136.5,67.2 137.0,67.4 137.5,67.5 138.0,67.7 138.5,67.8 139.0,67.9 139.5,67.9 140.0,68.0 140.5,68.0 141.0,68.0 141.5,68.0 142.0,68.1 142.5,68.1 143.0,68.1 143.5,68.1 144.0,68.1 144.5,68.1 145.0,68.1 145.5,68.1 146.0,68.1 146.5,68.1 147.0,68.1 147.5,68.1 148.0,68.1 148.5,68.1 149.0,68.1 149.5,68.1 150.0,68.1 150.5,68.1 151.0,68.1 151.5,68.1 152.0,68.1 152.5,68.1 153.0,68.1 153.5,68.1 154.0,68.1 154.5,68.1 155.0,68.1 155.5,68.1 156.0,68.1 156.5,68.1 157.0,68.1 157.5,68.1 158.0,68.1 158.5,68.1 159.0,68.1 159.5,68.1 160.0,68.1 160.5,68.1 161.0,68.1 161.5,68.1 162.0,68.1 162.5,68.1 163.0,68.1 163.5,68.1 164.0,68.1 164.5,68.1 165.0,68.1 165.5,68.1 166.0,68.1 166.5,68.1 167.0,68.1 167.5,68.1 168.0,68.1 168.5,68.1 169.0,68.1 169.5,68.1 170.0,68.1 170.5,68.1 171.0,68.1 171.5,68.1 172.0,68.1 172.5,68.1 173.0,68.1 173.5,68.1 174.0,68.1 174.5,68.1 175.0,68.1 175.5,68.1 176.0,68.1 176.5,68.1 177.0,68.1 177.5,68.1 178.0,68.1 178.5,68.1 179.0,68.1 179.5,68.1 180.0,68.1 180.5,68.1 181.0,68.1 181.5,68.1 182.0,68.1 182.5,68.1 183.0,68.1 183.5,68.1 184.0,68.1 184.5,68.1 185.0,68.1 185.5,68.1 186.0,68.1 186.5,68.1 187.0,68.1 187.5,68.1 188.0,68.1 188.5,68.1 189.0,68.1 189.5,68.1 190.0,68.1 190.5,68.1 191.0,68.1 191.5,68.1 192.0,68.1 192.5,68.1 193.0,68.1 193.5,68.1 194.0,68.1 194.5,68.1 195.0,68.0 195.5,68.0 196.0,68.0 196.5,68.0 197.0,67.9 197.5,67.9 198.0,67.8 198.5,67.6 199.0,67.5 199.5,67.3 200.0,67.1 200.5,66.9 201.0,66.7 201.5,66.4 202.0,66.2 202.5,65.9 203.0,65.6 203.5,65.3 204.0,65.1 204.5,64.8 205.0,64.5 205.5,64.2 206.0,63.9 206.5,63.6 207.0,63.4 207.5,63.1 208.0,62.8 208.5,62.5 209.0,62.2 209.5,61.9 210.0,61.6 210.5,61.3 211.0,61.0 211.5,60.7 212.0,60.4 212.5,60.2 213.0,59.9 213.5,59.6 214.0,59.3 214.5,59.0 215.0,58.7 215.5,58.4 216.0,58.1 216.5,57.8 217.0,57.6 217.5,57.3 218.0,57.0 218.5,56.7 219.0,56.4 219.5,56.2 220.0,55.9 220.5,55.6 221.0,55.3 221.5,55.1 222.0,54.8 222.5,54.5 223.0,54.3 223.5,54.0 224.0,53.8 224.5,53.5 225.0,53.2 225.5,53.0 226.0,52.8 226.5,52.5 227.0,52.3 227.5,52.0 228.0,51.8 228.5,51.6 229.0,51.3 229.5,51.1 230.0,50.9 230.5,50.7 231.0,50.4 231.5,50.2 232.0,50.0 232.5,49.8 233.0,49.6 233.5,49.4 234.0,49.2 234.5,49.0 235.0,48.9 235.5,48.7 236.0,48.5 236.5,48.3 237.0,48.2 237.5,48.0 238.0,47.8 238.5,47.7 239.0,47.5 239.5,47.4 240.0,47.3 240.5,47.1 241.0,47.0 241.5,46.9 242.0,46.7 242.5,46.6 243.0,46.5 243.5,46.4 244.0,46.3 244.5,46.2 245.0,46.1 245.5,46.0 246.0,46.0 246.5,45.9 247.0,45.8 247.5,45.7 248.0,45.7 248.5,45.6 249.0,45.6 249.5,45.5 250.0,45.5 250.5,45.5 251.0,45.4 251.5,45.4 252.0,45.4 252.5,45.4 253.0,45.4 253.5,45.4 254.0,45.4 254.5,45.4 255.0,45.4 255.5,45.4 256.0,45.5 256.5,45.5 257.0,45.5 257.5,45.6 258.0,45.6 258.5,45.7 259.0,45.7 259.5,45.8 260.0,45.9 260.5,45.9 261.0,46.0 261.5,46.1 262.0,46.2 262.5,46.3 263.0,46.4 263.5,46.5 264.0,46.6 264.5,46.7 265.0,46.8 265.5,47.0 266.0,47.1 266.5,47.2 267.0,47.4 267.5,47.5 268.0,47.6 268.5,47.8 269.0,48.0 269.5,48.1 270.0,48.3 270.5,48.5 271.0,48.6 271.5,48.8 272.0,49.0 272.5,49.2 273.0,49.4 273.5,49.6 274.0,49.8 274.5,50.0 275.0,50.2 275.5,50.4 276.0,50.6 276.5,50.8 277.0,51.0 277.5,51.3 278.0,51.5 278.5,51.7 279.0,52.0 279.5,52.2 280.0,52.4 280.5,52.7 281.0,52.9 281.5,53.2 282.0,53.4 282.5,53.7 283.0,54.0 283.5,54.2 284.0,54.5 284.5,54.7 285.0,55.0 285.5,55.3 286.0,55.5 286.5,55.8 287.0,56.1 287.5,56.4 288.0,56.6 288.5,56.9 289.0,57.2 289.5,57.5 290.0,57.8 290.5,58.1 291.0,58.3 291.5,58.6 292.0,58.9 292.5,59.2 293.0,59.5 293.5,59.8 294.0,60.1 294.5,60.4 295.0,60.7 295.5,61.0 296.0,61.2 296.5,61.5 297.0,61.8 297.5,62.1 298.0,62.4 298.5,62.7 299.0,63.0 299.5,63.3 300.0,63.6 300.5,63.9 301.0,64.1 301.5,64.4 302.0,64.7 302.5,65.0 303.0,65.3 303.5,65.5 304.0,65.8 304.5,66.1 305.0,66.4 305.5,66.6 306.0,66.8 306.5,67.1 307.0,67.3 307.5,67.5 308.0,67.6 308.5,67.7 309.0,67.8 309.5,67.9 310.0,68.0 310.5,68.0 311.0,68.0 311.5,68.0 312.0,68.1 312.5,68.1 313.0,68.1 313.5,68.1 314.0,68.1 314.5,68.1 315.0,68.1 315.5,68.1 316.0,68.1 316.5,68.1 317.0,68.1 317.5,68.1 318.0,68.1 318.5,68.1 319.0,68.1 319.5,68.1 320.0,68.1 320.5,68.1 321.0,68.1 321.5,68.1 322.0,68.1 322.5,68.1 323.0,68.1 323.5,68.1 324.0,68.1 324.5,68.1 325.0,68.1 325.5,68.1 326.0,68.1 326.5,68.1 327.0,68.1 327.5,68.1 328.0,68.1 328.5,68.1 329.0,68.1 329.5,68.1 330.0,68.1 330.5,68.1 331.0,68.1 331.5,68.1 332.0,68.1 332.5,68.1 333.0,68.1 333.5,68.1 334.0,68.1 334.5,68.1 335.0,68.1 335.5,68.1 336.0,68.1 336.5,68.1 337.0,68.1 337.5,68.1 338.0,68.1 338.5,68.1 339.0,68.1 339.5,68.1 340.0,68.1 340.5,68.1 341.0,68.1 341.5,68.1 342.0,68.1 342.5,68.1 343.0,68.1 343.5,68.1 344.0,68.1 344.5,68.1 345.0,68.1 345.5,68.1 346.0,68.1 346.5,68.1 347.0,68.1 347.5,68.1 348.0,68.1 348.5,68.1 349.0,68.1 349.5,68.1 350.0,68.1 350.5,68.1 351.0,68.1 351.5,68.1 352.0,68.1 352.5,68.1 353.0,68.1 353.5,68.1 354.0,68.1 354.5,68.1 355.0,68.1 355.5,68.1 356.0,68.1 356.5,68.1 357.0,68.1 357.5,68.1 358.0,68.1 358.5,68.1 359.0,68.1 359.5,68.1 360.0,68.1 360.5,68.1 361.0,68.1 361.5,68.1 362.0,68.1 362.5,68.1 363.0,68.1 363.5,68.1 364.0,68.1 364.5,68.1 365.0,68.1 365.5,68.0 366.0,68.0 366.5,68.0 367.0,67.9 367.5,67.9 368.0,67.8 368.5,67.7 369.0,67.6 369.5,67.4 370.0,67.2 370.5,67.0 371.0,66.8 371.5,66.5 372.0,66.3 372.5,66.0 373.0,65.8 373.5,65.5 374.0,65.2 374.5,64.9 375.0,64.6 375.5,64.4 376.0,64.1 376.5,63.8 377.0,63.5 377.5,63.2 378.0,62.9 378.5,62.6 379.0,62.3 379.5,62.0 380.0,61.8 380.5,61.5 381.0,61.2 381.5,60.9 382.0,60.6 382.5,60.3 383.0,60.0 383.5,59.7 384.0,59.4 384.5,59.1 385.0,58.9 385.5,58.6 386.0,58.3 386.5,58.0 387.0,57.7 387.5,57.4 388.0,57.1 388.5,56.9 389.0,56.6 389.5,56.3 390.0,56.0 390.5,55.8 391.0,55.5 391.5,55.2 392.0,54.9 392.5,54.7 393.0,54.4 393.5,54.1 394.0,53.9 394.5,53.6 395.0,53.4 395.5,53.1 396.0,52.9 396.5,52.6 397.0,52.4 397.5,52.1 398.0,51.9 398.5,51.7 399.0,51.4 399.5,51.2 400.0,51.0 400.5,50.8 401.0,50.6 401.5,50.3 402.0,50.1 402.5,49.9 403.0,49.7 403.5,49.5 404.0,49.3 404.5,49.1 405.0,48.9 405.5,48.8 406.0,48.6 406.5,48.4 407.0,48.2 407.5,48.1 408.0,47.9 408.5,47.8 409.0,47.6 409.5,47.5 410.0,47.3 410.5,47.2 411.0,47.1 411.5,46.9 412.0,46.8 412.5,46.7 413.0,46.6 413.5,46.5 414.0,46.4 414.5,46.3 415.0,46.2 415.5,46.1 416.0,46.0 416.5,45.9 417.0,45.8 417.5,45.8 418.0,45.7 418.5,45.7 419.0,45.6 419.5,45.6 420.0,45.5 420.5,45.5 421.0,45.5 421.5,45.4 422.0,45.4 422.5,45.4 423.0,45.4 423.5,45.4 424.0,45.4 424.5,45.4 425.0,45.4 425.5,45.4 426.0,45.5 426.5,45.5 427.0,45.5 427.5,45.6 428.0,45.6 428.5,45.6 429.0,45.7 429.5,45.8 430.0,45.8 430.5,45.9 431.0,46.0 431.5,46.1 432.0,46.1 432.5,46.2 433.0,46.3 433.5,46.4 434.0,46.5 434.5,46.7 435.0,46.8 435.5,46.9 436.0,47.0 436.5,47.2 437.0,47.3 437.5,47.4 438.0,47.6 438.5,47.7 439.0,47.9 439.5,48.0 440.0,48.2 440.5,48.4 441.0,48.5 441.5,48.7 442.0,48.9 442.5,49.1 443.0,49.3 443.5,49.5 444.0,49.7 444.5,49.9 445.0,50.1 445.5,50.3 446.0,50.5 446.5,50.7 447.0,50.9 447.5,51.2 448.0,51.4 448.5,51.6 449.0,51.8 449.5,52.1 450.0,52.3 450.5,52.6 451.0,52.8 451.5,53.1 452.0,53.3 452.5,53.6 453.0,53.8 453.5,54.1 454.0,54.3 454.5,54.6 455.0,54.9 455.5,55.1 456.0,55.4 456.5,55.7 457.0,56.0 457.5,56.2 458.0,56.5 458.5,56.8 459.0,57.1 459.5,57.4 460.0,57.6 460.5,57.9 461.0,58.2 461.5,58.5 462.0,58.8 462.5,59.1 463.0,59.4 463.5,59.6 464.0,59.9 464.5,60.2 465.0,60.5 465.5,60.8 466.0,61.1 466.5,61.4 467.0,61.7 467.5,62.0 468.0,62.3 468.5,62.6 469.0,62.8 469.5,63.1 470.0,63.4 470.5,63.7 471.0,64.0 471.5,64.3 472.0,64.6 472.5,64.9 473.0,65.1 473.5,65.4 474.0,65.7 474.5,66.0 475.0,66.2 475.5,66.5 476.0,66.7 476.5,67.0 477.0,67.2 477.5,67.4 478.0,67.5 478.5,67.7 479.0,67.8 479.5,67.9 480.0,67.9 480.5,68.0 481.0,68.0 481.5,68.0 482.0,68.0 482.5,68.1 483.0,68.1 483.5,68.1 484.0,68.1 484.5,68.1 485.0,68.1 485.5,68.1 486.0,68.1 486.5,68.1 487.0,68.1 487.5,68.1 488.0,68.1 488.5,68.1 489.0,68.1 489.5,68.1 490.0,68.1 490.5,68.1 491.0,68.1 491.5,68.1 492.0,68.1 492.5,68.1 493.0,68.1 493.5,68.1 494.0,68.1 494.5,68.1 495.0,68.1 495.5,68.1 496.0,68.1 496.5,68.1 497.0,68.1 497.5,68.1 498.0,68.1 498.5,68.1 499.0,68.1 499.5,68.1 500.0,68.1 500.5,68.1 501.0,68.1 501.5,68.1 502.0,68.1 502.5,68.1 503.0,68.1 503.5,68.1 504.0,68.1 504.5,68.1 505.0,68.1 505.5,68.1 506.0,68.1 506.5,68.1 507.0,68.1 507.5,68.1 508.0,68.1 508.5,68.1 509.0,68.1 509.5,68.1 510.0,68.1 510.5,68.1 511.0,68.1 511.5,68.1 512.0,68.1 512.5,68.1 513.0,68.1 513.5,68.1 514.0,68.1 514.5,68.1 515.0,68.1 515.5,68.1 516.0,68.1 516.5,68.1 517.0,68.1 517.5,68.1 518.0,68.1 518.5,68.1 519.0,68.1 519.5,68.1 520.0,68.1 520.5,68.1 521.0,68.1 521.5,68.1 522.0,68.1 522.5,68.1 523.0,68.1 523.5,68.1 524.0,68.1 524.5,68.1 525.0,68.1 525.5,68.1 526.0,68.1 526.5,68.1 527.0,68.1 527.5,68.1 528.0,68.1 528.5,68.1 529.0,68.1 529.5,68.1 530.0,68.1 530.5,68.1 531.0,68.1 531.5,68.1 532.0,68.1 532.5,68.1 533.0,68.1 533.5,68.1 534.0,68.1 534.5,68.1 535.0,68.1 535.5,68.0 536.0,68.0 536.5,68.0 537.0,68.0 537.5,67.9 538.0,67.9 538.5,67.8 539.0,67.6 539.5,67.5 540.0,67.3 540.5,67.1 541.0,66.9 541.5,66.7 542.0,66.4 542.5,66.2 543.0,65.9 543.5,65.6 544.0,65.3 544.5,65.1 545.0,64.8 545.5,64.5 546.0,64.2 546.5,63.9 547.0,63.6 547.5,63.4 548.0,63.1 548.5,62.8 549.0,62.5 549.5,62.2 550.0,61.9 550.5,61.6 551.0,61.3 551.5,61.0 552.0,60.7 552.5,60.4 553.0,60.2 553.5,59.9 554.0,59.6 554.5,59.3 555.0,59.0 555.5,58.7 556.0,58.4 556.5,58.1 557.0,57.8 557.5,57.6 558.0,57.3 558.5,57.0 559.0,56.7 559.5,56.4 560.0,56.2 560.5,55.9 561.0,55.6 561.5,55.3 562.0,55.1 562.5,54.8 563.0,54.5 563.5,54.3 564.0,54.0 564.5,53.8 565.0,53.5 565.5,53.2 566.0,53.0 566.5,52.8 567.0,52.5 567.5,52.3 568.0,52.0 568.5,51.8 569.0,51.6 569.5,51.3 570.0,51.1 570.5,50.9 571.0,50.7 571.5,50.4 572.0,50.2 572.5,50.0 573.0,49.8 573.5,49.6 574.0,49.4 574.5,49.2 575.0,49.0 575.5,48.9 576.0,48.7 576.5,48.5 577.0,48.3 577.5,48.2 578.0,48.0 578.5,47.8 579.0,47.7 579.5,47.5 580.0,47.4 580.5,47.3 581.0,47.1 581.5,47.0 582.0,46.9 582.5,46.7 583.0,46.6 583.5,46.5 584.0,46.4 584.5,46.3 585.0,46.2 585.5,46.1 586.0,46.0 586.5,46.0 587.0,45.9 587.5,45.8 588.0,45.7 588.5,45.7 589.0,45.6 589.5,45.6 590.0,45.5 590.5,45.5 591.0,45.5 591.5,45.4 592.0,45.4 592.5,45.4 593.0,45.4 593.5,45.4 594.0,45.4 594.5,45.4 595.0,45.4 595.5,45.4 596.0,45.4 596.5,45.5 597.0,45.5 597.5,45.5 598.0,45.6 598.5,45.6 599.0,45.7 599.5,45.7 600.0,45.8 600.5,45.9 601.0,45.9 601.5,46.0 602.0,46.1 602.5,46.2 603.0,46.3 603.5,46.4 604.0,46.5 604.5,46.6 605.0,46.7 605.5,46.8 606.0,47.0 606.5,47.1 607.0,47.2 607.5,47.4 608.0,47.5 608.5,47.6 609.0,47.8 609.5,48.0 610.0,48.1 610.5,48.3 611.0,48.5 611.5,48.6 612.0,48.8 612.5,49.0 613.0,49.2 613.5,49.4 614.0,49.6 614.5,49.8 615.0,50.0 615.5,50.2 616.0,50.4 616.5,50.6 617.0,50.8 617.5,51.0 618.0,51.3 618.5,51.5 619.0,51.7 619.5,52.0 620.0,52.2 620.5,52.4 621.0,52.7 621.5,52.9 622.0,53.2 622.5,53.4 623.0,53.7 623.5,54.0 624.0,54.2 624.5,54.5 625.0,54.7 625.5,55.0 626.0,55.3 626.5,55.5 627.0,55.8 627.5,56.1 628.0,56.4 628.5,56.6 629.0,56.9 629.5,57.2 630.0,57.5 630.5,57.8 631.0,58.1 631.5,58.3 632.0,58.6 632.5,58.9 633.0,59.2 633.5,59.5 634.0,59.8 634.5,60.1 635.0,60.4 635.5,60.7 636.0,61.0 636.5,61.2 637.0,61.5 637.5,61.8 638.0,62.1 638.5,62.4 639.0,62.7 639.5,63.0 640.0,63.3 640.5,63.6 641.0,63.9 641.5,64.1 642.0,64.4 642.5,64.7 643.0,65.0 643.5,65.3 644.0,65.5 644.5,65.8 645.0,66.1 645.5,66.4 646.0,66.6 646.5,66.8 647.0,67.1 647.5,67.3 648.0,67.5 648.5,67.6 649.0,67.7 649.5,67.8 650.0,67.9 650.5,68.0 651.0,68.0 651.5,68.0 652.0,68.0 652.5,68.1 653.0,68.1 653.5,68.1 654.0,68.1 654.5,68.1 655.0,68.1 655.5,68.1 656.0,68.1 656.5,68.1 657.0,68.1 657.5,68.1 658.0,68.1 658.5,68.1 659.0,68.1 659.5,68.1 660.0,68.1 660.5,68.1 661.0,68.1 661.5,68.1 662.0,68.1 662.5,68.1 663.0,68.1 663.5,68.1 664.0,68.1 664.5,68.1 665.0,68.1 665.5,68.1 666.0,68.1 666.5,68.1 667.0,68.1 667.5,68.1 668.0,68.1 668.5,68.1 669.0,68.1 669.5,68.1 670.0,68.1 670.5,68.1 671.0,68.1 671.5,68.1 672.0,68.1 672.5,68.1 673.0,68.1 673.5,68.1 674.0,68.1 674.5,68.1 675.0,68.1 675.5,68.1 676.0,68.1 676.5,68.1 677.0,68.1 677.5,68.1 678.0,68.1 678.5,68.1 679.0,68.1 679.5,68.1 680.0,68.1 680.5,68.1 681.0,68.1 681.5,68.1 682.0,68.1 682.5,68.1 683.0,68.1 683.5,68.1 684.0,68.1 684.5,68.1 685.0,68.1 685.5,68.1 686.0,68.1 686.5,68.1 687.0,68.1 687.5,68.1 688.0,68.1 688.5,68.1 689.0,68.1 689.5,68.1 690.0,68.1 690.5,68.1 691.0,68.1 691.5,68.1 692.0,68.1 692.5,68.1 693.0,68.1 693.5,68.1 694.0,68.1 694.5,68.1 695.0,68.1 695.5,68.1 696.0,68.1 696.5,68.1 697.0,68.1 697.5,68.1 698.0,68.1 698.5,68.1 699.0,68.1 699.5,68.1 700.0,68.1 700.5,68.1 701.0,68.1 701.5,68.1 702.0,68.1 702.5,68.1 703.0,68.1 703.5,68.1 704.0,68.1 704.5,68.1 705.0,68.1 705.5,68.1 706.0,68.0 706.5,68.0 707.0,68.0 707.5,67.9 708.0,67.9 708.5,67.8 709.0,67.7 709.5,67.6 710.0,67.4 710.5,67.2 711.0,67.0 711.5,66.8 712.0,66.5 712.5,66.3 713.0,66.0 713.5,65.8 714.0,65.5 714.5,65.2 715.0,64.9 715.5,64.6 716.0,64.4 716.5,64.1 717.0,63.8 717.5,63.5 718.0,63.2 718.5,62.9 719.0,62.6 719.5,62.3 720.0,62.0 720.5,61.8 721.0,61.5" fill="none" stroke="#ff0000" stroke-width="1" />
<polyline points="40.5,158.5 41.0,157.8 41.5,157.1 42.0,156.3 42.5,155.6 43.0,154.9 43.5,154.2 44.0,153.2 44.5,152.2 45.0,151.2 45.5,150.3 46.0,149.3 46.5,148.4 47.0,147.8 47.5,147.1 48.0,146.5 48.5,145.9 49.0,145.4 49.5,144.8 50.0,144.3 50.5,143.8 51.0,143.2 51.5,142.7 52.0,142.2 52.5,141.6 53.0,140.9 53.5,140.3 54.0,139.7 54.5,139.0 55.0,138.4 55.5,137.8 56.0,137.2 56.5,136.5 57.0,135.9 57.5,135.3 58.0,134.8 58.5,134.2 59.0,133.6 59.5,133.1 60.0,132.5 60.5,132.0 61.0,131.4 61.5,130.9 62.0,130.4 62.5,129.9 63.0,129.4 63.5,128.9 64.0,128.4 64.5,128.0 65.0,127.5 65.5,127.1 66.0,126.6 66.5,126.2 67.0,125.8 67.5,125.4 68.0,125.0 68.5,124.6 69.0,124.2 69.5,123.9 70.0,123.5 70.5,123.2 71.0,122.9 71.5,122.6 72.0,122.3 72.5,122.0 73.0,121.7 73.5,121.5 74.0,121.2 74.5,121.0 75.0,120.8 75.5,120.6 76.0,120.4 76.5,120.2 77.0,120.0 77.5,119.9 78.0,119.7 78.5,119.6 79.0,119.5 79.5,119.4 80.0,119.3 80.5,119.2 81.0,119.2 81.5,119.1 82.0,119.1 82.5,119.1 83.0,119.1 83.5,119.1 84.0,119.1 84.5,119.1 85.0,119.2 85.5,119.2 86.0,119.3 86.5,119.4 87.0,119.5 87.5,119.6 88.0,119.7 88.5,119.8 89.0,120.0 89.5,120.2 90.0,120.3 90.5,120.5 91.0,120.7 91.5,120.9 92.0,121.2 92.5,121.4 93.0,121.7 93.5,121.9 94.0,122.2 94.5,122.5 95.0,122.8 95.5,123.1 96.0,123.5 96.5,123.8 97.0,124.2 97.5,124.5 98.0,124.9 98.5,125.3 99.0,125.7 99.5,126.1 100.0,126.5 100.5,126.9 101.0,127.4 101.5,127.8 102.0,128.3 102.5,128.8 103.0,129.3 103.5,129.8 104.0,130.3 104.5,130.8 105.0,131.3 105.5,131.8 106.0,132.4 106.5,132.9 107.0,133.5 107.5,134.0 108.0,134.6 108.5,135.2 109.0,135.8 109.5,136.4 110.0,137.0 110.5,137.6 111.0,138.2 111.5,138.9 112.0,139.5 112.5,140.1 113.0,140.7 113.5,141.3 114.0,141.8 114.5,142.4 115.0,143.0 115.5,143.5 116.0,144.1 116.5,144.7 117.0,145.3 117.5,145.7 118.0,146.0 118.5,146.4 119.0,146.8 119.5,147.2 120.0,147.7 120.5,148.1 121.0,148.4 121.5,148.7 122.0,149.0 122.5,149.4 123.0,149.7 123.5,150.1 124.0,150.4 124.5,150.7 125.0,151.1 125.5,151.4 126.0,151.8 126.5,152.1 127.0,152.5 127.5,152.9 128.0,153.3 128.5,153.6 129.0,154.0 129.5,154.4 130.0,154.8 130.5,155.1 131.0,155.6 131.5,156.1 132.0,156.6 132.5,157.0 133.0,157.5 133.5,158.1 134.0,158.7 134.5,159.4 135.0,160.0 135.5,160.6 136.0,161.2 136.5,161.9 137.0,162.5 137.5,163.1 138.0,163.7 138.5,164.3 139.0,164.9 139.5,165.5 140.0,166.1 140.5,166.7 141.0,167.3 141.5,167.9 142.0,168.5 142.5,169.0 143.0,169.6 143.5,170.1 144.0,170.6 144.5,171.2 145.0,171.7 145.5,172.2 146.0,172.7 146.5,173.2 147.0,173.7 147.5,174.2 148.0,174.6 148.5,175.1 149.0,175.5 149.5,176.0 150.0,176.4 150.5,176.8 151.0,177.2 151.5,177.6 152.0,178.0 152.5,178.4 153.0,178.7 153.5,179.1 154.0,179.4 154.5,179.7 155.0,180.0 155.5,180.4 156.0,180.7 156.5,180.9 157.0,181.2 157.5,181.5 158.0,181.7 158.5,182.0 159.0,182.2 159.5,182.5 160.0,182.7 160.5,182.9 161.0,183.1 161.5,183.3 162.0,183.4 162.5,183.6 163.0,183.7 163.5,183.8 164.0,184.0 164.5,184.1 165.0,184.2 165.5,184.2 166.0,184.3 166.5,184.3 167.0,184.4 167.5,184.4 168.0,184.4 168.5,184.4 169.0,184.4 169.5,184.4 170.0,184.3 170.5,184.3 171.0,184.2 171.5,184.1 172.0,184.0 172.5,183.9 173.0,183.8 173.5,183.7 174.0,183.5 174.5,183.4 175.0,183.2 175.5,183.0 176.0,182.8 176.5,182.6 177.0,182.4 177.5,182.2 178.0,181.9 178.5,181.7 179.0,181.4 179.5,181.2 180.0,180.9 180.5,180.6 181.0,180.3 181.5,180.0 182.0,179.6 182.5,179.3 183.0,179.0 183.5,178.6 184.0,178.2 184.5,177.9 185.0,177.5 185.5,177.1 186.0,176.7 186.5,176.2 187.0,175.8 187.5,175.4 188.0,174.9 188.5,174.5 189.0,174.0 189.5,173.5 190.0,173.0 190.5,172.5 191.0,172.0 191.5,171.5 192.0,171.0 192.5,170.5 193.0,170.0 193.5,169.4 194.0,168.9 194.5,168.3 195.0,167.8 195.5,167.2 196.0,166.6 196.5,166.0 197.0,165.5 197.5,164.9 198.0,164.3 198.5,163.7 199.0,163.1 199.5,162.4 200.0,161.8 200.5,161.2 201.0,160.6 201.5,159.9 202.0,159.3 202.5,158.6 203.0,158.1 203.5,157.6 204.0,157.1 204.5,156.5 205.0,156.1 205.5,155.8 206.0,155.4 206.5,155.0 207.0,154.6 207.5,154.3 208.0,153.9 208.5,153.5 209.0,153.1 209.5,152.7 210.0,152.3 210.5,151.9 211.0,151.7 211.5,151.4 212.0,151.2 212.5,151.0 213.0,150.7 213.5,150.5 214.0,150.3 214.5,150.0 215.0,149.5 215.5,149.0 216.0,148.6 216.5,148.1 217.0,147.6 217.5,147.1 218.0,146.6 218.5,146.1 219.0,145.7 219.5,145.1 220.0,144.4 220.5,143.8 221.0,143.2 221.5,142.6 222.0,142.1 222.5,141.5 223.0,140.9 223.5,140.3 224.0,139.8 224.5,139.1 225.0,138.5 225.5,137.9 226.0,137.3 226.5,136.8 227.0,136.2 227.5,135.6 228.0,135.1 228.5,134.5 229.0,133.9 229.5,133.3 230.0,132.8 230.5,132.2 231.0,131.7 231.5,131.2 232.0,130.6 232.5,130.1 233.0,129.6 233.5,129.1 234.0,128.7 234.5,128.2 235.0,127.7 235.5,127.3 236.0,126.8 236.5,126.4 237.0,126.0 237.5,125.6 238.0,125.2 238.5,124.8 239.0,124.4 239.5,124.1 240.0,123.7 240.5,123.4 241.0,123.1 241.5,122.7 242.0,122.4 242.5,122.2 243.0,121.9 243.5,121.6 244.0,121.4 244.5,121.1 245.0,120.9 245.5,120.7 246.0,120.5 246.5,120.3 247.0,120.1 247.5,120.0 248.0,119.8 248.5,119.7 249.0,119.5 249.5,119.4 250.0,119.3 250.5,119.3 251.0,119.2 251.5,119.1 252.0,119.1 252.5,119.1 253.0,119.1 253.5,119.1 254.0,119.1 254.5,119.1 255.0,119.1 255.5,119.2 256.0,119.2 256.5,119.3 257.0,119.4 257.5,119.5 258.0,119.6 258.5,119.8 259.0,119.9 259.5,120.1 260.0,120.2 260.5,120.4 261.0,120.6 261.5,120.8 262.0,121.1 262.5,121.3 263.0,121.5 263.5,121.8 264.0,122.1 264.5,122.4 265.0,122.7 265.5,123.0 266.0,123.3 266.5,123.6 267.0,124.0 267.5,124.3 268.0,124.7 268.5,125.1 269.0,125.5 269.5,125.9 270.0,126.3 270.5,126.7 271.0,127.2 271.5,127.6 272.0,128.1 272.5,128.5 273.0,129.0 273.5,129.5 274.0,130.0 274.5,130.5 275.0,131.0 275.5,131.6 276.0,132.1 276.5,132.6 277.0,133.2 277.5,133.8 278.0,134.3 278.5,134.9 279.0,135.5 279.5,136.1 280.0,136.7 280.5,137.3 281.0,137.9 281.5,138.5 282.0,139.2 282.5,139.8 283.0,140.5 283.5,141.0 284.0,141.5 284.5,142.1 285.0,142.7 285.5,143.2 286.0,143.8 286.5,144.4 287.0,145.0 287.5,145.5 288.0,145.8 288.5,146.2 289.0,146.6 289.5,147.0 290.0,147.4 290.5,147.9 291.0,148.2 291.5,148.6 292.0,148.9 292.5,149.2 293.0,149.5 293.5,149.9 294.0,150.2 294.5,150.6 295.0,150.9 295.5,151.2 296.0,151.6 296.5,152.0 297.0,152.3 297.5,152.7 298.0,153.1 298.5,153.5 299.0,153.8 299.5,154.2 300.0,154.6 300.5,154.9 301.0,155.4 301.5,155.8 302.0,156.3 302.5,156.8 303.0,157.3 303.5,157.8 304.0,158.4 304.5,159.0 305.0,159.7 305.5,160.3 306.0,160.9 306.5,161.5 307.0,162.2 307.5,162.8 308.0,163.4 308.5,164.0 309.0,164.6 309.5,165.2 310.0,165.8 310.5,166.4 311.0,167.0 311.5,167.6 312.0,168.2 312.5,168.7 313.0,169.3 313.5,169.8 314.0,170.4 314.5,170.9 315.0,171.4 315.5,172.0 316.0,172.5 316.5,173.0 317.0,173.4 317.5,173.9 318.0,174.4 318.5,174.9 319.0,175.3 319.5,175.7 320.0,176.2 320.5,176.6 321.0,177.0 321.5,177.4 322.0,177.8 322.5,178.2 323.0,178.5 323.5,178.9 324.0,179.2 324.5,179.6 325.0,179.9 325.5,180.2 326.0,180.5 326.5,180.8 327.0,181.1 327.5,181.4 328.0,181.6 328.5,181.9 329.0,182.1 329.5,182.4 330.0,182.6 330.5,182.8 331.0,183.0 331.5,183.2 332.0,183.3 332.5,183.5 333.0,183.6 333.5,183.8 334.0,183.9 334.5,184.0 335.0,184.1 335.5,184.2 336.0,184.3 336.5,184.3 337.0,184.4 337.5,184.4 338.0,184.4 338.5,184.4 339.0,184.4 339.5,184.4 340.0,184.4 340.5,184.3 341.0,184.2 341.5,184.2 342.0,184.1 342.5,184.0 343.0,183.9 343.5,183.7 344.0,183.6 344.5,183.5 345.0,183.3 345.5,183.1 346.0,182.9 346.5,182.7 347.0,182.5 347.5,182.3 348.0,182.1 348.5,181.8 349.0,181.6 349.5,181.3 350.0,181.0 350.5,180.7 351.0,180.4 351.5,180.1 352.0,179.8 352.5,179.5 353.0,179.1 353.5,178.8 354.0,178.4 354.5,178.0 355.0,177.7 355.5,177.3 356.0,176.9 356.5,176.4 357.0,176.0 357.5,175.6 358.0,175.1 358.5,174.7 359.0,174.2 359.5,173.8 360.0,173.3 360.5,172.8 361.0,172.3 361.5,171.8 362.0,171.3 362.5,170.8 363.0,170.2 363.5,169.7 364.0,169.2 364.5,168.6 365.0,168.0 365.5,167.5 366.0,166.9 366.5,166.3 367.0,165.8 367.5,165.2 368.0,164.6 368.5,164.0 369.0,163.4 369.5,162.8 370.0,162.1 370.5,161.5 371.0,160.9 371.5,160.3 372.0,159.6 372.5,159.0 373.0,158.4 373.5,157.9 374.0,157.3 374.5,156.8 375.0,156.3 375.5,156.0 376.0,155.6 376.5,155.2 377.0,154.8 377.5,154.5 378.0,154.1 378.5,153.7 379.0,153.3 379.5,152.9 380.0,152.5 380.5,152.1 381.0,151.8 381.5,151.6 382.0,151.3 382.5,151.1 383.0,150.8 383.5,150.6 384.0,150.4 384.5,150.1 385.0,149.8 385.5,149.3 386.0,148.8 386.5,148.3 387.0,147.8 387.5,147.3 388.0,146.9 388.5,146.4 389.0,145.9 389.5,145.4 390.0,144.8 390.5,144.1 391.0,143.5 391.5,142.9 392.0,142.4 392.5,141.8 393.0,141.2 393.5,140.6 394.0,140.0 394.5,139.4 395.0,138.8 395.5,138.2 396.0,137.6 396.5,137.1 397.0,136.5 397.5,135.9 398.0,135.3 398.5,134.8 399.0,134.2 399.5,133.6 400.0,133.1 400.5,132.5 401.0,132.0 401.5,131.4 402.0,130.9 402.5,130.4 403.0,129.9 403.5,129.4 404.0,128.9 404.5,128.4 405.0,128.0 405.5,127.5 406.0,127.1 406.5,126.6 407.0,126.2 407.5,125.8 408.0,125.4 408.5,125.0 409.0,124.6 409.5,124.2 410.0,123.9 410.5,123.5 411.0,123.2 411.5,122.9 412.0,122.6 412.5,122.3 413.0,122.0 413.5,121.7 414.0,121.5 414.5,121.2 415.0,121.0 415.5,120.8 416.0,120.6 416.5,120.4 417.0,120.2 417.5,120.0 418.0,119.9 418.5,119.7 419.0,119.6 419.5,119.5 420.0,119.4 420.5,119.3 421.0,119.2 421.5,119.2 422.0,119.1 422.5,119.1 423.0,119.1 423.5,119.1 424.0,119.1 424.5,119.1 425.0,119.1 425.5,119.2 426.0,119.2 426.5,119.3 427.0,119.4 427.5,119.5 428.0,119.6 428.5,119.7 429.0,119.8 429.5,120.0 430.0,120.2 430.5,120.3 431.0,120.5 431.5,120.7 432.0,120.9 432.5,121.2 433.0,121.4 433.5,121.7 434.0,121.9 434.5,122.2 435.0,122.5 435.5,122.8 436.0,123.1 436.5,123.5 437.0,123.8 437.5,124.2 438.0,124.5 438.5,124.9 439.0,125.3 439.5,125.7 440.0,126.1 440.5,126.5 441.0,126.9 441.5,127.4 442.0,127.8 442.5,128.3 443.0,128.8 443.5,129.3 444.0,129.8 444.5,130.3 445.0,130.8 445.5,131.3 446.0,131.8 446.5,132.4 447.0,132.9 447.5,133.5 448.0,134.0 448.5,134.6 449.0,135.2 449.5,135.8 450.0,136.4 450.5,137.0 451.0,137.6 451.5,138.2 452.0,138.9 452.5,139.5 453.0,140.1 453.5,140.7 454.0,141.3 454.5,141.8 455.0,142.4 455.5,143.0 456.0,143.5 456.5,144.1 457.0,144.7 457.5,145.3 458.0,145.7 458.5,146.0 459.0,146.4 459.5,146.8 460.0,147.2 460.5,147.7 461.0,148.1 461.5,148.4 462.0,148.7 462.5,149.0 463.0,149.4 463.5,149.7 464.0,150.1 464.5,150.4 465.0,150.7 465.5,151.1 466.0,151.4 466.5,151.8 467.0,152.1 467.5,152.5 468.0,152.9 468.5,153.3 469.0,153.6 469.5,154.0 470.0,154.4 470.5,154.8 471.0,155.1 471.5,155.6 472.0,156.1 472.5,156.6 473.0,157.0 473.5,157.5 474.0,158.1 474.5,158.7 475.0,159.4 475.5,160.0 476.0,160.6 476.5,161.2 477.0,161.9 477.5,162.5 478.0,163.1 478.5,163.7 479.0,164.3 479.5,164.9 480.0,165.5 480.5,166.1 481.0,166.7 481.5,167.3 482.0,167.9 482.5,168.5 483.0,169.0 483.5,169.6 484.0,170.1 484.5,170.6 485.0,171.2 485.5,171.7 486.0,172.2 486.5,172.7 487.0,173.2 487.5,173.7 488.0,174.2 488.5,174.6 489.0,175.1 489.5,175.5 490.0,176.0 490.5,176.4 491.0,176.8 491.5,177.2 492.0,177.6 492.5,178.0 493.0,178.4 493.5,178.7 494.0,179.1 494.5,179.4 495.0,179.7 495.5,180.0 496.0,180.4 496.5,180.7 497.0,180.9 497.5,181.2 498.0,181.5 498.5,181.7 499.0,182.0 499.5,182.2 500.0,182.5 500.5,182.7 501.0,182.9 501.5,183.1 502.0,183.3 502.5,183.4 503.0,183.6 503.5,183.7 504.0,183.8 504.5,184.0 505.0,184.1 505.5,184.2 506.0,184.2 506.5,184.3 507.0,184.3 507.5,184.4 508.0,184.4 508.5,184.4 509.0,184.4 509.5,184.4 510.0,184.4 510.5,184.3 511.0,184.3 511.5,184.2 512.0,184.1 512.5,184.0 513.0,183.9 513.5,183.8 514.0,183.7 514.5,183.5 515.0,183.4 515.5,183.2 516.0,183.0 516.5,182.8 517.0,182.6 517.5,182.4 518.0,182.2 518.5,181.9 519.0,181.7 519.5,181.4 520.0,181.2 520.5,180.9 521.0,180.6 521.5,180.3 522.0,180.0 522.5,179.6 523.0,179.3 523.5,179.0 524.0,178.6 524.5,178.2 525.0,177.9 525.5,177.5 526.0,177.1 526.5,176.7 527.0,176.2 527.5,175.8 528.0,175.4 528.5,174.9 529.0,174.5 529.5,174.0 530.0,173.5 530.5,173.0 531.0,172.5 531.5,172.0 532.0,171.5 532.5,171.0 533.0,170.5 533.5,170.0 534.0,169.4 534.5,168.9 535.0,168.3 535.5,167.8 536.0,167.2 536.5,166.6 537.0,166.0 537.5,165.5 538.0,164.9 538.5,164.3 539.0,163.7 539.5,163.1 540.0,162.4 540.5,161.8 541.0,161.2 541.5,160.6 542.0,159.9 542.5,159.3 543.0,158.6 543.5,158.1 544.0,157.6 544.5,157.1 545.0,156.5 545.5,156.1 546.0,155.8 546.5,155.4 547.0,155.0 547.5,154.6 548.0,154.3 548.5,153.9 549.0,153.5 549.5,153.1 550.0,152.7 550.5,152.3 551.0,151.9 551.5,151.7 552.0,151.4 552.5,151.2 553.0,151.0 553.5,150.7 554.0,150.5 554.5,150.3 555.0,150.0 555.5,149.5 556.0,149.0 556.5,148.6 557.0,148.1 557.5,147.6 558.0,147.1 558.5,146.6 559.0,146.1 559.5,145.7 560.0,145.1 560.5,144.4 561.0,143.8 561.5,143.2 562.0,142.6 562.5,142.1 563.0,141.5 563.5,140.9 564.0,140.3 564.5,139.8 565.0,139.1 565.5,138.5 566.0,137.9 566.5,137.3 567.0,136.8 567.5,136.2 568.0,135.6 568.5,135.1 569.0,134.5 569.5,133.9 570.0,133.3 570.5,132.8 571.0,132.2 571.5,131.7 572.0,131.2 572.5,130.6 573.0,130.1 573.5,129.6 574.0,129.1 574.5,128.7 575.0,128.2 575.5,127.7 576.0,127.3 576.5,126.8 577.0,126.4 577.5,126.0 578.0,125.6 578.5,125.2 579.0,124.8 579.5,124.4 580.0,124.1 580.5,123.7 581.0,123.4 581.5,123.1 582.0,122.7 582.5,122.4 583.0,122.2 583.5,121.9 584.0,121.6 584.5,121.4 585.0,121.1 585.5,120.9 586.0,120.7 586.5,120.5 587.0,120.3 587.5,120.1 588.0,120.0 588.5,119.8 589.0,119.7 589.5,119.5 590.0,119.4 590.5,119.3 591.0,119.3 591.5,119.2 592.0,119.1 592.5,119.1 593.0,119.1 593.5,119.1 594.0,119.1 594.5,119.1 595.0,119.1 595.5,119.1 596.0,119.2 596.5,119.2 597.0,119.3 597.5,119.4 598.0,119.5 598.5,119.6 599.0,119.8 599.5,119.9 600.0,120.1 600.5,120.2 601.0,120.4 601.5,120.6 602.0,120.8 602.5,121.1 603.0,121.3 603.5,121.5 604.0,121.8 604.5,122.1 605.0,122.4 605.5,122.7 606.0,123.0 606.5,123.3 607.0,123.6 607.5,124.0 608.0,124.3 608.5,124.7 609.0,125.1 609.5,125.5 610.0,125.9 610.5,126.3 611.0,126.7 611.5,127.2 612.0,127.6 612.5,128.1 613.0,128.5 613.5,129.0 614.0,129.5 614.5,130.0 615.0,130.5 615.5,131.0 616.0,131.6 616.5,132.1 617.0,132.6 617.5,133.2 618.0,133.8 618.5,134.3 619.0,134.9 619.5,135.5 620.0,136.1 620.5,136.7 621.0,137.3 621.5,137.9 622.0,138.5 622.5,139.2 623.0,139.8 623.5,140.5 624.0,141.0 624.5,141.5 625.0,142.1 625.5,142.7 626.0,143.2 626.5,143.8 627.0,144.4 627.5,145.0 628.0,145.5 628.5,145.8 629.0,146.2 629.5,146.6 630.0,147.0 630.5,147.4 631.0,147.9 631.5,148.2 632.0,148.6 632.5,148.9 633.0,149.2 633.5,149.5 634.0,149.9 634.5,150.2 635.0,150.6 635.5,150.9 636.0,151.2 636.5,151.6 637.0,152.0 637.5,152.3 638.0,152.7 638.5,153.1 639.0,153.5 639.5,153.8 640.0,154.2 640.5,154.6 641.0,154.9 641.5,155.4 642.0,155.8 642.5,156.3 643.0,156.8 643.5,157.3 644.0,157.8 644.5,158.4 645.0,159.0 645.5,159.7 646.0,160.3 646.5,160.9 647.0,161.5 647.5,162.2 648.0,162.8 648.5,163.4 649.0,164.0 649.5,164.6 650.0,165.2 650.5,165.8 651.0,166.4 651.5,167.0 652.0,167.6 652.5,168.2 653.0,168.7 653.5,169.3 654.0,169.8 654.5,170.4 655.0,170.9 655.5,171.4 656.0,172.0 656.5,172.5 657.0,173.0 657.5,173.4 658.0,173.9 658.5,174.4 659.0,174.9 659.5,175.3 660.0,175.7 660.5,176.2 661.0,176.6 661.5,177.0 662.0,177.4 662.5,177.8 663.0,178.2 663.5,178.5 664.0,178.9 664.5,179.2 665.0,179.6 665.5,179.9 666.0,180.2 666.5,180.5 667.0,180.8 667.5,181.1 668.0,181.4 668.5,181.6 669.0,181.9 669.5,182.1 670.0,182.4 670.5,182.6 671.0,182.8 671.5,183.0 672.0,183.2 672.5,183.3 673.0,183.5 673.5,183.6 674.0,183.8 674.5,183.9 675.0,184.0 675.5,184.1 676.0,184.2 676.5,184.3 677.0,184.3 677.5,184.4 678.0,184.4 678.5,184.4 679.0,184.4 679.5,184.4 680.0,184.4 680.5,184.4 681.0,184.3 681.5,184.2 682.0,184.2 682.5,184.1 683.0,184.0 683.5,183.9 684.0,183.7 684.5,183.6 685.0,183.5 685.5,183.3 686.0,183.1 686.5,182.9 687.0,182.7 687.5,182.5 688.0,182.3 688.5,182.1 689.0,181.8 689.5,181.6 690.0,181.3 690.5,181.0 691.0,180.7 691.5,180.4 692.0,180.1 692.5,179.8 693.0,179.5 693.5,179.1 694.0,178.8 694.5,178.4 695.0,178.0 695.5,177.7 696.0,177.3 696.5,176.9 697.0,176.4 697.5,176.0 698.0,175.6 698.5,175.1 699.0,174.7 699.5,174.2 700.0,173.8 700.5,173.3 701.0,172.8 701.5,172.3 702.0,171.8 702.5,171.3 703.0,170.8 703.5,170.2 704.0,169.7 704.5,169.2 705.0,168.6 705.5,168.0 706.0,167.5 706.5,166.9 707.0,166.3 707.5,165.8 708.0,165.2 708.5,164.6 709.0,164.0 709.5,163.4 710.0,162.8 710.5,162.1 711.0,161.5 711.5,160.9 712.0,160.3 712.5,159.6 713.0,159.0 713.5,158.4 714.0,157.9 714.5,157.3 715.0,156.8 715.5,156.3 716.0,156.0 716.5,155.6 717.0,155.2 717.5,154.8 718.0,154.5 718.5,154.1 719.0,153.7 719.5,153.3 720.0,152.9 720.5,152.5 721.0,152.1" fill="none" stroke="#00ff00" stroke-width="1" />
<polyline points="40.5,181.5 41.0,181.5 41.5,181.5 42.0,181.5 42.5,181.5 43.0,181.5 43.5,181.5 44.0,180.3 44.5,179.2 45.0,178.0 45.5,177.0 46.0,176.0 46.5,175.0 47.0,175.4 47.5,175.8 48.0,176.1 48.5,176.5 49.0,177.2 49.5,177.9 50.0,178.5 50.5,179.2 51.0,179.9 51.5,180.6 52.0,181.2 52.5,181.5 53.0,181.5 53.5,181.5 54.0,181.5 54.5,181.5 55.0,181.5 55.5,181.5 56.0,181.5 56.5,181.5 57.0,181.5 57.5,181.5 58.0,181.5 58.5,181.5 59.0,181.5 59.5,181.5 60.0,181.5 60.5,181.5 61.0,181.5 61.5,181.5 62.0,181.5 62.5,181.5 63.0,181.5 63.5,181.5 64.0,181.5 64.5,181.5 65.0,181.5 65.5,181.5 66.0,181.5 66.5,181.5 67.0,181.5 67.5,181.5 68.0,181.5 68.5,181.5 69.0,181.5 69.5,181.5 70.0,181.5 70.5,181.5 71.0,181.5 71.5,181.5 72.0,181.5 72.5,181.5 73.0,181.5 73.5,181.5 74.0,181.5 74.5,181.5 75.0,181.5 75.5,181.5 76.0,181.5 76.5,181.5 77.0,181.5 77.5,181.5 78.0,181.5 78.5,181.5 79.0,181.5 79.5,181.5 80.0,181.5 80.5,181.5 81.0,181.5 81.5,181.5 82.0,181.5 82.5,181.5 83.0,181.5 83.5,181.5 84.0,181.5 84.5,181.5 85.0,181.5 85.5,181.5 86.0,181.5 86.5,181.5 87.0,181.5 87.5,181.5 88.0,181.5 88.5,181.5 89.0,181.5 89.5,181.5 90.0,181.5 90.5,181.5 91.0,181.5 91.5,181.5 92.0,181.5 92.5,181.5 93.0,181.5 93.5,181.5 94.0,181.5 94.5,181.5 95.0,181.5 95.5,181.5 96.0,181.5 96.5,181.5 97.0,181.5 97.5,181.5 98.0,181.5 98.5,181.5 99.0,181.5 99.5,181.5 100.0,181.5 100.5,181.5 101.0,181.5 101.5,181.5 102.0,181.5 102.5,181.5 103.0,181.5 103.5,181.5 104.0,181.5 104.5,181.5 105.0,181.5 105.5,181.5 106.0,181.5 106.5,181.5 107.0,181.5 107.5,181.5 108.0,181.5 108.5,181.5 109.0,181.5 109.5,181.5 110.0,181.5 110.5,181.5 111.0,181.5 111.5,181.5 112.0,181.5 112.5,181.5 113.0,181.2 113.5,180.8 114.0,180.3 114.5,179.8 115.0,179.4 115.5,178.9 116.0,178.4 116.5,178.0 117.0,177.5 117.5,176.1 118.0,174.8 118.5,173.4 119.0,172.1 119.5,170.7 120.0,169.4 120.5,168.0 121.0,166.3 121.5,164.5 122.0,162.8 122.5,161.1 123.0,159.3 123.5,157.6 124.0,155.9 124.5,154.2 125.0,152.4 125.5,150.7 126.0,149.1 126.5,147.5 127.0,145.9 127.5,144.4 128.0,142.8 128.5,141.2 129.0,139.7 129.5,138.1 130.0,136.6 130.5,135.0 131.0,134.0 131.5,132.9 132.0,131.9 132.5,130.8 133.0,129.8 133.5,129.5 134.0,129.1 134.5,128.8 135.0,128.5 135.5,128.2 136.0,128.0 136.5,127.8 137.0,127.6 137.5,127.4 138.0,127.3 138.5,127.1 139.0,126.9 139.5,126.8 140.0,126.6 140.5,126.5 141.0,126.3 141.5,126.2 142.0,126.0 142.5,125.8 143.0,125.7 143.5,125.5 144.0,125.4 144.5,125.2 145.0,125.1 145.5,124.9 146.0,124.8 146.5,124.6 147.0,124.5 147.5,124.3 148.0,124.2 148.5,124.0 149.0,123.9 149.5,123.7 150.0,123.6 150.5,123.4 151.0,123.3 151.5,123.1 152.0,123.0 152.5,122.9 153.0,122.7 153.5,122.6 154.0,122.4 154.5,122.3 155.0,122.1 155.5,122.0 156.0,121.9 156.5,121.8 157.0,121.7 157.5,121.7 158.0,121.6 158.5,121.6 159.0,121.5 159.5,121.5 160.0,121.4 160.5,121.4 161.0,121.4 161.5,121.3 162.0,121.3 162.5,121.3 163.0,121.3 163.5,121.3 164.0,121.3 164.5,121.2 165.0,121.2 165.5,121.2 166.0,121.2 166.5,121.2 167.0,121.2 167.5,121.2 168.0,121.2 168.5,121.2 169.0,121.2 169.5,121.2 170.0,121.2 170.5,121.2 171.0,121.2 171.5,121.2 172.0,121.3 172.5,121.3 173.0,121.3 173.5,121.3 174.0,121.3 174.5,121.4 175.0,121.4 175.5,121.4 176.0,121.4 176.5,121.5 177.0,121.5 177.5,121.6 178.0,121.6 178.5,121.7 179.0,121.7 179.5,121.8 180.0,121.9 180.5,122.0 181.0,122.1 181.5,122.1 182.0,122.3 182.5,122.4 183.0,122.5 183.5,122.6 184.0,122.7 184.5,122.9 185.0,123.0 185.5,123.1 186.0,123.3 186.5,123.4 187.0,123.5 187.5,123.7 188.0,123.8 188.5,124.0 189.0,124.1 189.5,124.3 190.0,124.5 190.5,124.6 191.0,124.8 191.5,125.0 192.0,125.1 192.5,125.3 193.0,125.5 193.5,125.7 194.0,125.9 194.5,126.1 195.0,126.3 195.5,126.5 196.0,126.7 196.5,126.9 197.0,127.1 197.5,127.3 198.0,127.6 198.5,127.8 199.0,128.0 199.5,128.2 200.0,128.4 200.5,128.6 201.0,128.9 201.5,129.1 202.0,129.3 202.5,129.5 203.0,130.2 203.5,131.0 204.0,131.8 204.5,132.5 205.0,134.0 205.5,135.5 206.0,137.1 206.5,138.6 207.0,140.1 207.5,141.6 208.0,143.1 208.5,144.6 209.0,146.0 209.5,147.5 210.0,149.0 210.5,150.5 211.0,152.7 211.5,154.9 212.0,157.1 212.5,159.2 213.0,161.4 213.5,163.6 214.0,165.8 214.5,168.0 215.0,169.0 215.5,170.0 216.0,171.0 216.5,172.0 217.0,173.0 217.5,174.0 218.0,175.0 218.5,176.0 219.0,177.0 219.5,177.3 220.0,177.7 220.5,178.1 221.0,178.4 221.5,178.8 222.0,179.1 222.5,179.4 223.0,179.8 223.5,180.2 224.0,180.5 224.5,180.6 225.0,180.8 225.5,180.9 226.0,181.0 226.5,181.1 227.0,181.2 227.5,181.4 228.0,181.5 228.5,181.5 229.0,181.5 229.5,181.5 230.0,181.5 230.5,181.5 231.0,181.5 231.5,181.5 232.0,181.5 232.5,181.5 233.0,181.5 233.5,181.5 234.0,181.5 234.5,181.5 235.0,181.5 235.5,181.5 236.0,181.5 236.5,181.5 237.0,181.5 237.5,181.5 238.0,181.5 238.5,181.5 239.0,181.5 239.5,181.5 240.0,181.5 240.5,181.5 241.0,181.5 241.5,181.5 242.0,181.5 242.5,181.5 243.0,181.5 243.5,181.5 244.0,181.5 244.5,181.5 245.0,181.5 245.5,181.5 246.0,181.5 246.5,181.5 247.0,181.5 247.5,181.5 248.0,181.5 248.5,181.5 249.0,181.5 249.5,181.5 250.0,181.5 250.5,181.5 251.0,181.5 251.5,181.5 252.0,181.5 252.5,181.5 253.0,181.5 253.5,181.5 254.0,181.5 254.5,181.5 255.0,181.5 255.5,181.5 256.0,181.5 256.5,181.5 257.0,181.5 257.5,181.5 258.0,181.5 258.5,181.5 259.0,181.5 259.5,181.5 260.0,181.5 260.5,181.5 261.0,181.5 261.5,181.5 262.0,181.5 262.5,181.5 263.0,181.5 263.5,181.5 264.0,181.5 264.5,181.5 265.0,181.5 265.5,181.5 266.0,181.5 266.5,181.5 267.0,181.5 267.5,181.5 268.0,181.5 268.5,181.5 269.0,181.5 269.5,181.5 270.0,181.5 270.5,181.5 271.0,181.5 271.5,181.5 272.0,181.5 272.5,181.5 273.0,181.5 273.5,181.5 274.0,181.5 274.5,181.5 275.0,181.5 275.5,181.5 276.0,181.5 276.5,181.5 277.0,181.5 277.5,181.5 278.0,181.5 278.5,181.5 279.0,181.5 279.5,181.5 280.0,181.5 280.5,181.5 281.0,181.5 281.5,181.5 282.0,181.5 282.5,181.5 283.0,181.5 283.5,181.0 284.0,180.5 284.5,180.1 285.0,179.6 285.5,179.1 286.0,178.7 286.5,178.2 287.0,177.7 287.5,176.8 288.0,175.5 288.5,174.1 289.0,172.8 289.5,171.4 290.0,170.0 290.5,168.7 291.0,167.1 291.5,165.4 292.0,163.7 292.5,161.9 293.0,160.2 293.5,158.5 294.0,156.8 294.5,155.0 295.0,153.3 295.5,151.6 296.0,149.8 296.5,148.3 297.0,146.7 297.5,145.2 298.0,143.6 298.5,142.0 299.0,140.5 299.5,138.9 300.0,137.3 300.5,135.8 301.0,134.5 301.5,133.4 302.0,132.4 302.5,131.4 303.0,130.3 303.5,129.6 304.0,129.3 304.5,128.9 305.0,128.6 305.5,128.4 306.0,128.1 306.5,127.9 307.0,127.7 307.5,127.5 308.0,127.3 308.5,127.2 309.0,127.0 309.5,126.9 310.0,126.7 310.5,126.5 311.0,126.4 311.5,126.2 312.0,126.1 312.5,125.9 313.0,125.8 313.5,125.6 314.0,125.5 314.5,125.3 315.0,125.1 315.5,125.0 316.0,124.8 316.5,124.7 317.0,124.5 317.5,124.4 318.0,124.2 318.5,124.1 319.0,123.9 319.5,123.8 320.0,123.6 320.5,123.5 321.0,123.4 321.5,123.2 322.0,123.1 322.5,122.9 323.0,122.8 323.5,122.6 324.0,122.5 324.5,122.4 325.0,122.2 325.5,122.1 326.0,122.0 326.5,121.9 327.0,121.8 327.5,121.7 328.0,121.6 328.5,121.6 329.0,121.5 329.5,121.5 330.0,121.5 330.5,121.4 331.0,121.4 331.5,121.4 332.0,121.3 332.5,121.3 333.0,121.3 333.5,121.3 334.0,121.3 334.5,121.2 335.0,121.2 335.5,121.2 336.0,121.2 336.5,121.2 337.0,121.2 337.5,121.2 338.0,121.2 338.5,121.2 339.0,121.2 339.5,121.2 340.0,121.2 340.5,121.2 341.0,121.2 341.5,121.2 342.0,121.3 342.5,121.3 343.0,121.3 343.5,121.3 344.0,121.3 344.5,121.3 345.0,121.4 345.5,121.4 346.0,121.4 346.5,121.5 347.0,121.5 347.5,121.5 348.0,121.6 348.5,121.6 349.0,121.7 349.5,121.8 350.0,121.8 350.5,121.9 351.0,122.0 351.5,122.1 352.0,122.2 352.5,122.3 353.0,122.4 353.5,122.5 354.0,122.7 354.5,122.8 355.0,122.9 355.5,123.1 356.0,123.2 356.5,123.3 357.0,123.5 357.5,123.6 358.0,123.8 358.5,123.9 359.0,124.1 359.5,124.2 360.0,124.4 360.5,124.5 361.0,124.7 361.5,124.9 362.0,125.1 362.5,125.2 363.0,125.4 363.5,125.6 364.0,125.8 364.5,126.0 365.0,126.2 365.5,126.4 366.0,126.6 366.5,126.8 367.0,127.0 367.5,127.2 368.0,127.4 368.5,127.7 369.0,127.9 369.5,128.1 370.0,128.3 370.5,128.5 371.0,128.7 371.5,129.0 372.0,129.2 372.5,129.4 373.0,129.9 373.5,130.6 374.0,131.4 374.5,132.1 375.0,133.3 375.5,134.8 376.0,136.3 376.5,137.8 377.0,139.3 377.5,140.8 378.0,142.3 378.5,143.8 379.0,145.3 379.5,146.8 380.0,148.3 380.5,149.8 381.0,151.6 381.5,153.8 382.0,156.0 382.5,158.2 383.0,160.3 383.5,162.5 384.0,164.7 384.5,166.9 385.0,168.5 385.5,169.5 386.0,170.5 386.5,171.5 387.0,172.5 387.5,173.5 388.0,174.5 388.5,175.5 389.0,176.5 389.5,177.2 390.0,177.5 390.5,177.9 391.0,178.2 391.5,178.6 392.0,178.9 392.5,179.3 393.0,179.6 393.5,180.0 394.0,180.3 394.5,180.6 395.0,180.7 395.5,180.8 396.0,180.9 396.5,181.1 397.0,181.2 397.5,181.3 398.0,181.4 398.5,181.5 399.0,181.5 399.5,181.5 400.0,181.5 400.5,181.5 401.0,181.5 401.5,181.5 402.0,181.5 402.5,181.5 403.0,181.5 403.5,181.5 404.0,181.5 404.5,181.5 405.0,181.5 405.5,181.5 406.0,181.5 406.5,181.5 407.0,181.5 407.5,181.5 408.0,181.5 408.5,181.5 409.0,181.5 409.5,181.5 410.0,181.5 410.5,181.5 411.0,181.5 411.5,181.5 412.0,181.5 412.5,181.5 413.0,181.5 413.5,181.5 414.0,181.5 414.5,181.5 415.0,181.5 415.5,181.5 416.0,181.5 416.5,181.5 417.0,181.5 417.5,181.5 418.0,181.5 418.5,181.5 419.0,181.5 419.5,181.5 420.0,181.5 420.5,181.5 421.0,181.5 421.5,181.5 422.0,181.5 422.5,181.5 423.0,181.5 423.5,181.5 424.0,181.5 424.5,181.5 425.0,181.5 425.5,181.5 426.0,181.5 426.5,181.5 427.0,181.5 427.5,181.5 428.0,181.5 428.5,181.5 429.0,181.5 429.5,181.5 430.0,181.5 430.5,181.5 431.0,181.5 431.5,181.5 432.0,181.5 432.5,181.5 433.0,181.5 433.5,181.5 434.0,181.5 434.5,181.5 435.0,181.5 435.5,181.5 436.0,181.5 436.5,181.5 437.0,181.5 437.5,181.5 438.0,181.5 438.5,181.5 439.0,181.5 439.5,181.5 440.0,181.5 440.5,181.5 441.0,181.5 441.5,181.5 442.0,181.5 442.5,181.5 443.0,181.5 443.5,181.5 444.0,181.5 444.5,181.5 445.0,181.5 445.5,181.5 446.0,181.5 446.5,181.5 447.0,181.5 447.5,181.5 448.0,181.5 448.5,181.5 449.0,181.5 449.5,181.5 450.0,181.5 450.5,181.5 451.0,181.5 451.5,181.5 452.0,181.5 452.5,181.5 453.0,181.5 453.5,181.2 454.0,180.8 454.5,180.3 455.0,179.8 455.5,179.4 456.0,178.9 456.5,178.4 457.0,178.0 457.5,177.5 458.0,176.1 458.5,174.8 459.0,173.4 459.5,172.1 460.0,170.7 460.5,169.4 461.0,168.0 461.5,166.3 462.0,164.5 462.5,162.8 463.0,161.1 463.5,159.3 464.0,157.6 464.5,155.9 465.0,154.2 465.5,152.4 466.0,150.7 466.5,149.1 467.0,147.5 467.5,145.9 468.0,144.4 468.5,142.8 469.0,141.2 469.5,139.7 470.0,138.1 470.5,136.6 471.0,135.0 471.5,134.0 472.0,132.9 472.5,131.9 473.0,130.8 473.5,129.8 474.0,129.5 474.5,129.1 475.0,128.8 475.5,128.5 476.0,128.2 476.5,128.0 477.0,127.8 477.5,127.6 478.0,127.4 478.5,127.3 479.0,127.1 479.5,126.9 480.0,126.8 480.5,126.6 481.0,126.5 481.5,126.3 482.0,126.2 482.5,126.0 483.0,125.8 483.5,125.7 484.0,125.5 484.5,125.4 485.0,125.2 485.5,125.1 486.0,124.9 486.5,124.8 487.0,124.6 487.5,124.5 488.0,124.3 488.5,124.2 489.0,124.0 489.5,123.9 490.0,123.7 490.5,123.6 491.0,123.4 491.5,123.3 492.0,123.1 492.5,123.0 493.0,122.9 493.5,122.7 494.0,122.6 494.5,122.4 495.0,122.3 495.5,122.1 496.0,122.0 496.5,121.9 497.0,121.8 497.5,121.7 498.0,121.7 498.5,121.6 499.0,121.6 499.5,121.5 500.0,121.5 500.5,121.4 501.0,121.4 501.5,121.4 502.0,121.3 502.5,121.3 503.0,121.3 503.5,121.3 504.0,121.3 504.5,121.3 505.0,121.2 505.5,121.2 506.0,121.2 506.5,121.2 507.0,121.2 507.5,121.2 508.0,121.2 508.5,121.2 509.0,121.2 509.5,121.2 510.0,121.2 510.5,121.2 511.0,121.2 511.5,121.2 512.0,121.2 512.5,121.3 513.0,121.3 513.5,121.3 514.0,121.3 514.5,121.3 515.0,121.4 515.5,121.4 516.0,121.4 516.5,121.4 517.0,121.5 517.5,121.5 518.0,121.6 518.5,121.6 519.0,121.7 519.5,121.7 520.0,121.8 520.5,121.9 521.0,122.0 521.5,122.1 522.0,122.1 522.5,122.3 523.0,122.4 523.5,122.5 524.0,122.6 524.5,122.7 525.0,122.9 525.5,123.0 526.0,123.1 526.5,123.3 527.0,123.4 527.5,123.5 528.0,123.7 528.5,123.8 529.0,124.0 529.5,124.1 530.0,124.3 530.5,124.5 531.0,124.6 531.5,124.8 532.0,125.0 532.5,125.1 533.0,125.3 533.5,125.5 534.0,125.7 534.5,125.9 535.0,126.1 535.5,126.3 536.0,126.5 536.5,126.7 537.0,126.9 537.5,127.1 538.0,127.3 538.5,127.6 539.0,127.8 539.5,128.0 540.0,128.2 540.5,128.4 541.0,128.6 541.5,128.9 542.0,129.1 542.5,129.3 543.0,129.5 543.5,130.2 544.0,131.0 544.5,131.8 545.0,132.5 545.5,134.0 546.0,135.5 546.5,137.1 547.0,138.6 547.5,140.1 548.0,141.6 548.5,143.1 549.0,144.6 549.5,146.0 550.0,147.5 550.5,149.0 551.0,150.5 551.5,152.7 552.0,154.9 552.5,157.1 553.0,159.2 553.5,161.4 554.0,163.6 554.5,165.8 555.0,168.0 555.5,169.0 556.0,170.0 556.5,171.0 557.0,172.0 557.5,173.0 558.0,174.0 558.5,175.0 559.0,176.0 559.5,177.0 560.0,177.3 560.5,177.7 561.0,178.1 561.5,178.4 562.0,178.8 562.5,179.1 563.0,179.4 563.5,179.8 564.0,180.2 564.5,180.5 565.0,180.6 565.5,180.8 566.0,180.9 566.5,181.0 567.0,181.1 567.5,181.2 568.0,181.4 568.5,181.5 569.0,181.5 569.5,181.5 570.0,181.5 570.5,181.5 571.0,181.5 571.5,181.5 572.0,181.5 572.5,181.5 573.0,181.5 573.5,181.5 574.0,181.5 574.5,181.5 575.0,181.5 575.5,181.5 576.0,181.5 576.5,181.5 577.0,181.5 577.5,181.5 578.0,181.5 578.5,181.5 579.0,181.5 579.5,181.5 580.0,181.5 580.5,181.5 581.0,181.5 581.5,181.5 582.0,181.5 582.5,181.5 583.0,181.5 583.5,181.5 584.0,181.5 584.5,181.5 585.0,181.5 585.5,181.5 586.0,181.5 586.5,181.5 587.0,181.5 587.5,181.5 588.0,181.5 588.5,181.5 589.0,181.5 589.5,181.5 590.0,181.5 590.5,181.5 591.0,181.5 591.5,181.5 592.0,181.5 592.5,181.5 593.0,181.5 593.5,181.5 594.0,181.5 594.5,181.5 595.0,181.5 595.5,181.5 596.0,181.5 596.5,181.5 597.0,181.5 597.5,181.5 598.0,181.5 598.5,181.5 599.0,181.5 599.5,181.5 600.0,181.5 600.5,181.5 601.0,181.5 601.5,181.5 602.0,181.5 602.5,181.5 603.0,181.5 603.5,181.5 604.0,181.5 604.5,181.5 605.0,181.5 605.5,181.5 606.0,181.5 606.5,181.5 607.0,181.5 607.5,181.5 608.0,181.5 608.5,181.5 609.0,181.5 609.5,181.5 610.0,181.5 610.5,181.5 611.0,181.5 611.5,181.5 612.0,181.5 612.5,181.5 613.0,181.5 613.5,181.5 614.0,181.5 614.5,181.5 615.0,181.5 615.5,181.5 616.0,181.5 616.5,181.5 617.0,181.5 617.5,181.5 618.0,181.5 618.5,181.5 619.0,181.5 619.5,181.5 620.0,181.5 620.5,181.5 621.0,181.5 621.5,181.5 622.0,181.5 622.5,181.5 623.0,181.5 623.5,181.5 624.0,181.0 624.5,180.5 625.0,180.1 625.5,179.6 626.0,179.1 626.5,178.7 627.0,178.2 627.5,177.7 628.0,176.8 628.5,175.5 629.0,174.1 629.5,172.8 630.0,171.4 630.5,170.0 631.0,168.7 631.5,167.1 632.0,165.4 632.5,163.7 633.0,161.9 633.5,160.2 634.0,158.5 634.5,156.8 635.0,155.0 635.5,153.3 636.0,151.6 636.5,149.8 637.0,148.3 637.5,146.7 638.0,145.2 638.5,143.6 639.0,142.0 639.5,140.5 640.0,138.9 640.5,137.3 641.0,135.8 641.5,134.5 642.0,133.4 642.5,132.4 643.0,131.4 643.5,130.3 644.0,129.6 644.5,129.3 645.0,128.9 645.5,128.6 646.0,128.4 646.5,128.1 647.0,127.9 647.5,127.7 648.0,127.5 648.5,127.3 649.0,127.2 649.5,127.0 650.0,126.9 650.5,126.7 651.0,126.5 651.5,126.4 652.0,126.2 652.5,126.1 653.0,125.9 653.5,125.8 654.0,125.6 654.5,125.5 655.0,125.3 655.5,125.1 656.0,125.0 656.5,124.8 657.0,124.7 657.5,124.5 658.0,124.4 658.5,124.2 659.0,124.1 659.5,123.9 660.0,123.8 660.5,123.6 661.0,123.5 661.5,123.4 662.0,123.2 662.5,123.1 663.0,122.9 663.5,122.8 664.0,122.6 664.5,122.5 665.0,122.4 665.5,122.2 666.0,122.1 666.5,122.0 667.0,121.9 667.5,121.8 668.0,121.7 668.5,121.6 669.0,121.6 669.5,121.5 670.0,121.5 670.5,121.5 671.0,121.4 671.5,121.4 672.0,121.4 672.5,121.3 673.0,121.3 673.5,121.3 674.0,121.3 674.5,121.3 675.0,121.2 675.5,121.2 676.0,121.2 676.5,121.2 677.0,121.2 677.5,121.2 678.0,121.2 678.5,121.2 679.0,121.2 679.5,121.2 680.0,121.2 680.5,121.2 681.0,121.2 681.5,121.2 682.0,121.2 682.5,121.3 683.0,121.3 683.5,121.3 684.0,121.3 684.5,121.3 685.0,121.3 685.5,121.4 686.0,121.4 686.5,121.4 687.0,121.5 687.5,121.5 688.0,121.5 688.5,121.6 689.0,121.6 689.5,121.7 690.0,121.8 690.5,121.8 691.0,121.9 691.5,122.0 692.0,122.1 692.5,122.2 693.0,122.3 693.5,122.4 694.0,122.5 694.5,122.7 695.0,122.8 695.5,122.9 696.0,123.1 696.5,123.2 697.0,123.3 697.5,123.5 698.0,123.6 698.5,123.8 699.0,123.9 699.5,124.1 700.0,124.2 700.5,124.4 701.0,124.5 701.5,124.7 702.0,124.9 702.5,125.1 703.0,125.2 703.5,125.4 704.0,125.6 704.5,125.8 705.0,126.0 705.5,126.2 706.0,126.4 706.5,126.6 707.0,126.8 707.5,127.0 708.0,127.2 708.5,127.4 709.0,127.7 709.5,127.9 710.0,128.1 710.5,128.3 711.0,128.5 711.5,128.7 712.0,129.0 712.5,129.2 713.0,129.4 713.5,129.9 714.0,130.6 714.5,131.4 715.0,132.1 715.5,133.3 716.0,134.8 716.5,136.3 717.0,137.8 717.5,139.3 718.0,140.8 718.5,142.3 719.0,143.8 719.5,145.3 720.0,146.8 720.5,148.3 721.0,149.8" fill="none" stroke="#00ffff" stroke-width="1" />
<polyline points="40.5,256.5 40.8,256.5 41.0,256.5 41.2,256.5 41.5,255.6 41.8,254.3 42.0,253.1 42.2,251.8 42.5,250.6 42.8,249.3 43.0,248.1 43.2,247.3 43.5,248.4 43.8,249.5 44.0,250.6 44.2,251.8 44.5,253.1 44.8,254.3 45.0,255.6 45.2,256.5 45.5,256.5 45.8,256.5 46.0,256.5 46.2,256.5 46.5,256.5 46.8,256.5 47.0,256.5 47.2,256.5 47.5,256.5 47.8,256.5 48.0,256.5 48.2,256.5 48.5,256.5 48.8,256.5 49.0,256.5 49.2,256.5 49.5,256.5 49.8,256.5 50.0,256.5 50.2,256.5 50.5,256.5 50.8,256.5 51.0,256.5 51.2,256.5 51.5,256.5 51.8,256.5 52.0,256.5 52.2,256.5 52.5,256.5 52.8,256.5 53.0,256.5 53.2,256.5 53.5,256.5 53.8,256.5 54.0,256.5 54.2,256.5 54.5,256.5 54.8,256.5 55.0,256.5 55.2,256.5 55.5,256.5 55.8,256.5 56.0,256.5 56.2,256.5 56.5,256.5 56.8,256.5 57.0,256.5 57.2,256.5 57.5,256.5 57.8,256.5 58.0,256.5 58.2,256.5 58.5,256.5 58.8,256.5 59.0,256.5 59.2,256.5 59.5,256.5 59.8,256.5 60.0,256.5 60.2,256.5 60.5,256.5 60.8,256.5 61.0,256.5 61.2,256.5 61.5,256.5 61.8,256.5 62.0,256.5 62.2,256.5 62.5,256.5 62.8,256.5 63.0,256.5 63.2,256.5 63.5,256.5 63.8,256.5 64.0,256.5 64.2,256.5 64.5,256.5 64.8,256.5 65.0,256.5 65.2,256.5 65.5,256.5 65.8,256.5 66.0,256.5 66.2,256.5 66.5,256.5 66.8,256.5 67.0,256.5 67.2,256.5 67.5,256.5 67.8,256.5 68.0,256.5 68.2,256.5 68.5,256.5 68.8,256.5 69.0,256.5 69.2,256.5 69.5,256.5 69.8,256.5 70.0,256.5 70.2,256.5 70.5,256.5 70.8,256.5 71.0,256.5 71.2,256.5 71.5,256.5 71.8,256.5 72.0,256.5 72.2,256.5 72.5,256.5 72.8,256.5 73.0,256.5 73.2,256.5 73.5,256.5 73.8,256.5 74.0,256.5 74.2,256.5 74.5,256.5 74.8,256.5 75.0,256.5 75.2,256.5 75.5,256.5 75.8,256.5 76.0,256.5 76.2,256.5 76.5,256.5 76.8,256.5 77.0,256.5 77.2,256.5 77.5,256.5 77.8,256.5 78.0,256.5 78.2,256.5 78.5,256.5 78.8,256.5 79.0,256.5 79.2,256.5 79.5,256.5 79.8,256.5 80.0,256.5 80.2,256.5 80.5,256.5 80.8,256.5 81.0,256.5 81.2,256.5 81.5,256.5 81.8,256.5 82.0,256.5 82.2,256.5 82.5,256.5 82.8,256.5 83.0,256.5 83.2,256.5 83.5,256.5 83.8,256.5 84.0,256.5 84.2,256.5 84.5,256.5 84.8,256.5 85.0,256.5 85.2,256.5 85.5,256.5 85.8,256.5 86.0,256.5 86.2,256.5 86.5,256.5 86.8,256.5 87.0,256.5 87.2,256.5 87.5,256.5 87.8,256.5 88.0,256.5 88.2,256.5 88.5,256.5 88.8,256.5 89.0,256.5 89.2,256.5 89.5,256.5 89.8,256.5 90.0,256.5 90.2,256.5 90.5,256.5 90.8,256.5 91.0,256.5 91.2,256.5 91.5,256.5 91.8,256.5 92.0,256.5 92.2,256.5 92.5,256.5 92.8,256.5 93.0,256.5 93.2,256.5 93.5,256.5 93.8,256.5 94.0,256.5 94.2,256.5 94.5,256.5 94.8,256.5 95.0,256.5 95.2,256.5 95.5,256.5 95.8,256.5 96.0,256.5 96.2,256.5 96.5,256.5 96.8,256.5 97.0,256.5 97.2,256.5 97.5,256.5 97.8,256.5 98.0,256.5 98.2,256.5 98.5,256.5 98.8,256.5 99.0,256.5 99.2,256.5 99.5,256.5 99.8,256.5 100.0,256.5 100.2,256.5 100.5,256.5 100.8,256.5 101.0,256.5 101.2,256.5 101.5,256.5 101.8,256.5 102.0,256.5 102.2,256.5 102.5,256.5 102.8,256.5 103.0,256.5 103.2,256.5 103.5,256.5 103.8,256.5 104.0,256.5 104.2,256.5 104.5,256.5 104.8,256.5 105.0,256.5 105.2,256.5 105.5,256.5 105.8,256.5 106.0,256.5 106.2,256.5 106.5,256.5 106.8,256.5 107.0,256.5 107.2,256.5 107.5,256.5 107.8,256.5 108.0,256.5 108.2,256.5 108.5,256.5 108.8,256.5 109.0,256.5 109.2,256.5 109.5,256.5 109.8,256.5 110.0,256.5 110.2,256.5 110.5,256.5 110.8,256.5 111.0,256.5 111.2,256.5 111.5,256.5 111.8,256.5 112.0,256.5 112.2,256.5 112.5,256.5 112.8,256.5 113.0,256.5 113.2,256.5 113.5,256.5 113.8,256.5 114.0,256.5 114.2,256.5 114.5,256.5 114.8,256.5 115.0,256.5 115.2,256.5 115.5,256.5 115.8,256.5 116.0,256.5 116.2,256.5 116.5,256.5 116.8,256.5 117.0,256.5 117.2,256.5 117.5,256.5 117.8,256.5 118.0,256.5 118.2,256.5 118.5,256.5 118.8,256.5 119.0,256.5 119.2,256.5 119.5,256.5 119.8,256.5 120.0,256.5 120.2,256.5 120.5,256.5 120.8,256.5 121.0,256.5 121.2,256.5 121.5,256.5 121.8,256.5 122.0,256.5 122.2,256.5 122.5,256.5 122.8,256.5 123.0,256.5 123.2,256.5 123.5,256.5 123.8,256.5 124.0,256.5 124.2,256.5 124.5,256.5 124.8,256.5 125.0,256.5 125.2,256.5 125.5,256.5 125.8,256.5 126.0,256.5 126.2,256.5 126.5,256.5 126.8,256.5 127.0,256.5 127.2,256.5 127.5,256.5 127.8,256.5 128.0,256.5 128.2,256.5 128.5,256.5 128.8,256.5 129.0,256.5 129.2,256.5 129.5,256.5 129.8,256.5 130.0,256.5 130.2,256.5 130.5,256.5 130.8,256.5 131.0,256.5 131.2,256.5 131.5,256.5 131.8,256.5 132.0,256.5 132.2,256.5 132.5,256.1 132.8,255.6 133.0,255.1 133.2,254.6 133.5,254.1 133.8,252.7 134.0,251.0 134.2,250.0 134.5,248.3 134.8,245.4 135.0,242.4 135.2,239.4 135.5,236.5 135.8,234.5 136.0,232.5 136.2,230.5 136.5,228.5 136.8,226.6 137.0,226.2 137.2,225.9 137.5,225.5 137.8,225.2 138.0,224.8 138.2,224.5 138.5,224.2 138.8,223.9 139.0,223.7 139.2,223.4 139.5,223.2 139.8,223.0 140.0,222.8 140.2,222.6 140.5,222.4 140.8,222.2 141.0,222.0 141.2,221.8 141.5,221.6 141.8,221.4 142.0,221.3 142.2,221.1 142.5,220.9 142.8,220.7 143.0,220.5 143.2,220.4 143.5,220.2 143.8,220.0 144.0,219.8 144.2,219.6 144.5,219.5 144.8,219.3 145.0,219.1 145.2,218.9 145.5,218.7 145.8,218.5 146.0,218.4 146.2,218.2 146.5,218.0 146.8,217.8 147.0,217.6 147.2,217.5 147.5,217.3 147.8,217.1 148.0,216.9 148.2,216.8 148.5,216.6 148.8,216.4 149.0,216.2 149.2,216.1 149.5,215.9 149.8,215.7 150.0,215.6 150.2,215.4 150.5,215.3 150.8,215.1 151.0,214.9 151.2,214.8 151.5,214.6 151.8,214.5 152.0,214.3 152.2,214.2 152.5,214.0 152.8,213.9 153.0,213.8 153.2,213.6 153.5,213.5 153.8,213.4 154.0,213.2 154.2,213.1 154.5,213.0 154.8,212.9 155.0,212.8 155.2,212.7 155.5,212.6 155.8,212.4 156.0,212.3 156.2,212.2 156.5,212.1 156.8,212.0 157.0,212.0 157.2,211.9 157.5,211.8 157.8,211.7 158.0,211.6 158.2,211.5 158.5,211.4 158.8,211.4 159.0,211.3 159.2,211.2 159.5,211.2 159.8,211.1 160.0,211.0 160.2,210.9 160.5,210.9 160.8,210.8 161.0,210.8 161.2,210.7 161.5,210.7 161.8,210.6 162.0,210.5 162.2,210.5 162.5,210.4 162.8,210.4 163.0,210.4 163.2,210.3 163.5,210.3 163.8,210.2 164.0,210.2 164.2,210.1 164.5,210.1 164.8,210.1 165.0,210.0 165.2,210.0 165.5,210.0 165.8,210.0 166.0,209.9 166.2,209.9 166.5,209.9 166.8,209.9 167.0,209.8 167.2,209.8 167.5,209.8 167.8,209.8 168.0,209.8 168.2,209.8 168.5,209.8 168.8,209.8 169.0,209.8 169.2,209.8 169.5,209.8 169.8,209.8 170.0,209.8 170.2,209.9 170.5,209.9 170.8,209.9 171.0,209.9 171.2,209.9 171.5,209.9 171.8,210.0 172.0,210.0 172.2,210.0 172.5,210.1 172.8,210.1 173.0,210.2 173.2,210.2 173.5,210.2 173.8,210.3 174.0,210.3 174.2,210.4 174.5,210.4 174.8,210.5 175.0,210.5 175.2,210.6 175.5,210.7 175.8,210.7 176.0,210.8 176.2,210.9 176.5,210.9 176.8,211.0 177.0,211.1 177.2,211.2 177.5,211.2 177.8,211.3 178.0,211.4 178.2,211.5 178.5,211.6 178.8,211.7 179.0,211.8 179.2,211.9 179.5,212.0 179.8,212.0 180.0,212.1 180.2,212.2 180.5,212.3 180.8,212.4 181.0,212.5 181.2,212.7 181.5,212.8 181.8,212.9 182.0,213.0 182.2,213.1 182.5,213.2 182.8,213.3 183.0,213.4 183.2,213.6 183.5,213.7 183.8,213.8 184.0,213.9 184.2,214.0 184.5,214.2 184.8,214.3 185.0,214.4 185.2,214.6 185.5,214.7 185.8,214.8 186.0,214.9 186.2,215.1 186.5,215.2 186.8,215.4 187.0,215.5 187.2,215.6 187.5,215.8 187.8,215.9 188.0,216.1 188.2,216.2 188.5,216.4 188.8,216.5 189.0,216.7 189.2,216.9 189.5,217.0 189.8,217.2 190.0,217.4 190.2,217.6 190.5,217.8 190.8,217.9 191.0,218.1 191.2,218.3 191.5,218.5 191.8,218.7 192.0,218.9 192.2,219.1 192.5,219.4 192.8,219.6 193.0,219.8 193.2,220.0 193.5,220.2 193.8,220.5 194.0,220.7 194.2,220.9 194.5,221.2 194.8,221.4 195.0,221.6 195.2,221.9 195.5,222.1 195.8,222.4 196.0,222.6 196.2,222.9 196.5,223.1 196.8,223.4 197.0,223.7 197.2,223.9 197.5,224.2 197.8,224.5 198.0,224.8 198.2,225.1 198.5,225.4 198.8,225.7 199.0,226.0 199.2,226.4 199.5,226.7 199.8,227.0 200.0,227.4 200.2,227.7 200.5,228.0 200.8,229.4 201.0,231.9 201.2,234.4 201.5,236.9 201.8,239.7 202.0,242.5 202.2,245.3 202.5,247.6 202.8,248.9 203.0,250.2 203.2,250.9 203.5,252.3 203.8,253.6 204.0,254.6 204.2,254.9 204.5,255.3 204.8,255.6 205.0,255.9 205.2,256.3 205.5,256.5 205.8,256.5 206.0,256.5 206.2,256.5 206.5,256.5 206.8,256.5 207.0,256.5 207.2,256.5 207.5,256.5 207.8,256.5 208.0,256.5 208.2,256.5 208.5,256.5 208.8,256.5 209.0,256.5 209.2,256.5 209.5,256.5 209.8,256.5 210.0,256.5 210.2,256.5 210.5,256.5 210.8,256.5 211.0,256.5 211.2,256.5 211.5,256.5 211.8,256.5 212.0,256.5 212.2,256.5 212.5,256.5 212.8,256.5 213.0,256.5 213.2,256.5 213.5,256.5 213.8,256.5 214.0,256.5 214.2,256.5 214.5,256.5 214.8,256.5 215.0,256.5 215.2,256.5 215.5,256.5 215.8,256.5 216.0,256.5 216.2,256.5 216.5,256.5 216.8,256.5 217.0,256.5 217.2,256.5 217.5,256.5 217.8,256.5 218.0,256.5 218.2,256.5 218.5,256.5 218.8,256.5 219.0,256.5 219.2,256.5 219.5,256.5 219.8,256.5 220.0,256.5 220.2,256.5 220.5,256.5 220.8,256.5 221.0,256.5 221.2,256.5 221.5,256.5 221.8,256.5 222.0,256.5 222.2,256.5 222.5,256.5 222.8,256.5 223.0,256.5 223.2,256.5 223.5,256.5 223.8,256.5 224.0,256.5 224.2,256.5 224.5,256.5 224.8,256.5 225.0,256.5 225.2,256.5 225.5,256.5 225.8,256.5 226.0,256.5 226.2,256.5 226.5,256.5 226.8,256.5 227.0,256.5 227.2,256.5 227.5,256.5 227.8,256.5 228.0,256.5 228.2,256.5 228.5,256.5 228.8,256.5 229.0,256.5 229.2,256.5 229.5,256.5 229.8,256.5 230.0,256.5 230.2,256.5 230.5,256.5 230.8,256.5 231.0,256.5 231.2,256.5 231.5,256.5 231.8,256.5 232.0,256.5 232.2,256.5 232.5,256.5 232.8,256.5 233.0,256.5 233.2,256.5 233.5,256.5 233.8,256.5 234.0,256.5 234.2,256.5 234.5,256.5 234.8,256.5 235.0,256.5 235.2,256.5 235.5,256.5 235.8,256.5 236.0,256.5 236.2,256.5 236.5,256.5 236.8,256.5 237.0,256.5 237.2,256.5 237.5,256.5 237.8,256.5 238.0,256.5 238.2,256.5 238.5,256.5 238.8,256.5 239.0,256.5 239.2,256.5 239.5,256.5 239.8,256.5 240.0,256.5 240.2,256.5 240.5,256.5 240.8,256.5 241.0,256.5 241.2,256.5 241.5,256.5 241.8,256.5 242.0,256.5 242.2,256.5 242.5,256.5 242.8,256.5 243.0,256.5 243.2,256.5 243.5,256.5 243.8,256.5 244.0,256.5 244.2,256.5 244.5,256.5 244.8,256.5 245.0,256.5 245.2,256.5 245.5,256.5 245.8,256.5 246.0,256.5 246.2,256.5 246.5,256.5 246.8,256.5 247.0,256.5 247.2,256.5 247.5,256.5 247.8,256.5 248.0,256.5 248.2,256.5 248.5,256.5 248.8,256.5 249.0,256.5 249.2,256.5 249.5,256.5 249.8,256.5 250.0,256.5 250.2,256.5 250.5,256.5 250.8,256.5 251.0,256.5 251.2,256.5 251.5,256.5 251.8,256.5 252.0,256.5 252.2,256.5 252.5,256.5 252.8,256.5 253.0,256.5 253.2,256.5 253.5,256.5 253.8,256.5 254.0,256.5 254.2,256.5 254.5,256.5 254.8,256.5 255.0,256.5 255.2,256.5 255.5,256.5 255.8,256.5 256.0,256.5 256.2,256.5 256.5,256.5 256.8,256.5 257.0,256.5 257.2,256.5 257.5,256.5 257.8,256.5 258.0,256.5 258.2,256.5 258.5,256.5 258.8,256.5 259.0,256.5 259.2,256.5 259.5,256.5 259.8,256.5 260.0,256.5 260.2,256.5 260.5,256.5 260.8,256.5 261.0,256.5 261.2,256.5 261.5,256.5 261.8,256.5 262.0,256.5 262.2,256.5 262.5,256.5 262.8,256.5 263.0,256.5 263.2,256.5 263.5,256.5 263.8,256.5 264.0,256.5 264.2,256.5 264.5,256.5 264.8,256.5 265.0,256.5 265.2,256.5 265.5,256.5 265.8,256.5 266.0,256.5 266.2,256.5 266.5,256.5 266.8,256.5 267.0,256.5 267.2,256.5 267.5,256.5 267.8,256.5 268.0,256.5 268.2,256.5 268.5,256.5 268.8,256.5 269.0,256.5 269.2,256.5 269.5,256.5 269.8,256.5 270.0,256.5 270.2,256.5 270.5,256.5 270.8,256.5 271.0,256.5 271.2,256.5 271.5,256.5 271.8,256.5 272.0,256.5 272.2,256.5 272.5,256.5 272.8,256.5 273.0,256.5 273.2,256.5 273.5,256.5 273.8,256.5 274.0,256.5 274.2,256.5 274.5,256.5 274.8,256.5 275.0,256.5 275.2,256.5 275.5,256.5 275.8,256.5 276.0,256.5 276.2,256.5 276.5,256.5 276.8,256.5 277.0,256.5 277.2,256.5 277.5,256.5 277.8,256.5 278.0,256.5 278.2,256.5 278.5,256.5 278.8,256.5 279.0,256.5 279.2,256.5 279.5,256.5 279.8,256.5 280.0,256.5 280.2,256.5 280.5,256.5 280.8,256.5 281.0,256.5 281.2,256.5 281.5,256.5 281.8,256.5 282.0,256.5 282.2,256.5 282.5,256.5 282.8,256.5 283.0,256.5 283.2,256.5 283.5,256.5 283.8,256.5 284.0,256.5 284.2,256.5 284.5,256.5 284.8,256.5 285.0,256.5 285.2,256.5 285.5,256.5 285.8,256.5 286.0,256.5 286.2,256.5 286.5,256.5 286.8,256.5 287.0,256.5 287.2,256.5 287.5,256.5 287.8,256.5 288.0,256.5 288.2,256.5 288.5,256.5 288.8,256.5 289.0,256.5 289.2,256.5 289.5,256.5 289.8,256.5 290.0,256.5 290.2,256.5 290.5,256.5 290.8,256.5 291.0,256.5 291.2,256.5 291.5,256.5 291.8,256.5 292.0,256.5 292.2,256.5 292.5,256.5 292.8,256.5 293.0,256.5 293.2,256.5 293.5,256.5 293.8,256.5 294.0,256.5 294.2,256.5 294.5,256.5 294.8,256.5 295.0,256.5 295.2,256.5 295.5,256.5 295.8,256.5 296.0,256.5 296.2,256.5 296.5,256.5 296.8,256.5 297.0,256.5 297.2,256.5 297.5,256.5 297.8,256.5 298.0,256.5 298.2,256.5 298.5,256.5 298.8,256.5 299.0,256.5 299.2,256.5 299.5,256.5 299.8,256.5 300.0,256.5 300.2,256.5 300.5,256.5 300.8,256.5 301.0,256.5 301.2,256.5 301.5,256.5 301.8,256.5 302.0,256.5 302.2,256.5 302.5,256.5 302.8,256.1 303.0,255.6 303.2,255.1 303.5,254.6 303.8,254.1 304.0,252.7 304.2,251.0 304.5,250.0 304.8,248.3 305.0,245.4 305.2,242.4 305.5,239.4 305.8,236.5 306.0,234.5 306.2,232.5 306.5,230.5 306.8,228.5 307.0,226.6 307.2,226.2 307.5,225.9 307.8,225.5 308.0,225.2 308.2,224.8 308.5,224.5 308.8,224.2 309.0,223.9 309.2,223.7 309.5,223.4 309.8,223.2 310.0,223.0 310.2,222.8 310.5,222.6 310.8,222.4 311.0,222.2 311.2,222.0 311.5,221.8 311.8,221.6 312.0,221.4 312.2,221.3 312.5,221.1 312.8,220.9 313.0,220.7 313.2,220.5 313.5,220.4 313.8,220.2 314.0,220.0 314.2,219.8 314.5,219.6 314.8,219.5 315.0,219.3 315.2,219.1 315.5,218.9 315.8,218.7 316.0,218.5 316.2,218.4 316.5,218.2 316.8,218.0 317.0,217.8 317.2,217.6 317.5,217.5 317.8,217.3 318.0,217.1 318.2,216.9 318.5,216.8 318.8,216.6 319.0,216.4 319.2,216.2 319.5,216.1 319.8,215.9 320.0,215.7 320.2,215.6 320.5,215.4 320.8,215.3 321.0,215.1 321.2,214.9 321.5,214.8 321.8,214.6 322.0,214.5 322.2,214.3 322.5,214.2 322.8,214.0 323.0,213.9 323.2,213.8 323.5,213.6 323.8,213.5 324.0,213.4 324.2,213.2 324.5,213.1 324.8,213.0 325.0,212.9 325.2,212.8 325.5,212.7 325.8,212.6 326.0,212.4 326.2,212.3 326.5,212.2 326.8,212.1 327.0,212.0 327.2,212.0 327.5,211.9 327.8,211.8 328.0,211.7 328.2,211.6 328.5,211.5 328.8,211.4 329.0,211.4 329.2,211.3 329.5,211.2 329.8,211.2 330.0,211.1 330.2,211.0 330.5,210.9 330.8,210.9 331.0,210.8 331.2,210.8 331.5,210.7 331.8,210.7 332.0,210.6 332.2,210.5 332.5,210.5 332.8,210.4 333.0,210.4 333.2,210.4 333.5,210.3 333.8,210.3 334.0,210.2 334.2,210.2 334.5,210.1 334.8,210.1 335.0,210.1 335.2,210.0 335.5,210.0 335.8,210.0 336.0,210.0 336.2,209.9 336.5,209.9 336.8,209.9 337.0,209.9 337.2,209.8 337.5,209.8 337.8,209.8 338.0,209.8 338.2,209.8 338.5,209.8 338.8,209.8 339.0,209.8 339.2,209.8 339.5,209.8 339.8,209.8 340.0,209.8 340.2,209.8 340.5,209.9 340.8,209.9 341.0,209.9 341.2,209.9 341.5,209.9 341.8,209.9 342.0,210.0 342.2,210.0 342.5,210.0 342.8,210.1 343.0,210.1 343.2,210.2 343.5,210.2 343.8,210.2 344.0,210.3 344.2,210.3 344.5,210.4 344.8,210.4 345.0,210.5 345.2,210.5 345.5,210.6 345.8,210.7 346.0,210.7 346.2,210.8 346.5,210.9 346.8,210.9 347.0,211.0 347.2,211.1 347.5,211.2 347.8,211.2 348.0,211.3 348.2,211.4 348.5,211.5 348.8,211.6 349.0,211.7 349.2,211.8 349.5,211.9 349.8,212.0 350.0,212.0 350.2,212.1 350.5,212.2 350.8,212.3 351.0,212.4 351.2,212.5 351.5,212.7 351.8,212.8 352.0,212.9 352.2,213.0 352.5,213.1 352.8,213.2 353.0,213.3 353.2,213.4 353.5,213.6 353.8,213.7 354.0,213.8 354.2,213.9 354.5,214.0 354.8,214.2 355.0,214.3 355.2,214.4 355.5,214.6 355.8,214.7 356.0,214.8 356.2,214.9 356.5,215.1 356.8,215.2 357.0,215.4 357.2,215.5 357.5,215.6 357.8,215.8 358.0,215.9 358.2,216.1 358.5,216.2 358.8,216.4 359.0,216.5 359.2,216.7 359.5,216.9 359.8,217.0 360.0,217.2 360.2,217.4 360.5,217.6 360.8,217.8 361.0,217.9 361.2,218.1 361.5,218.3 361.8,218.5 362.0,218.7 362.2,218.9 362.5,219.1 362.8,219.4 363.0,219.6 363.2,219.8 363.5,220.0 363.8,220.2 364.0,220.5 364.2,220.7 364.5,220.9 364.8,221.2 365.0,221.4 365.2,221.6 365.5,221.9 365.8,222.1 366.0,222.4 366.2,222.6 366.5,222.9 366.8,223.1 367.0,223.4 367.2,223.7 367.5,223.9 367.8,224.2 368.0,224.5 368.2,224.8 368.5,225.1 368.8,225.4 369.0,225.7 369.2,226.0 369.5,226.4 369.8,226.7 370.0,227.0 370.2,227.4 370.5,227.7 370.8,228.0 371.0,229.4 371.2,231.9 371.5,234.4 371.8,236.9 372.0,239.7 372.2,242.5 372.5,245.3 372.8,247.6 373.0,248.9 373.2,250.2 373.5,250.9 373.8,252.3 374.0,253.6 374.2,254.6 374.5,254.9 374.8,255.3 375.0,255.6 375.2,255.9 375.5,256.3 375.8,256.5 376.0,256.5 376.2,256.5 376.5,256.5 376.8,256.5 377.0,256.5 377.2,256.5 377.5,256.5 377.8,256.5 378.0,256.5 378.2,256.5 378.5,256.5 378.8,256.5 379.0,256.5 379.2,256.5 379.5,256.5 379.8,256.5 380.0,256.5 380.2,256.5 380.5,256.5 380.8,256.5 381.0,256.5 381.2,256.5 381.5,256.5 381.8,256.5 382.0,256.5 382.2,256.5 382.5,256.5 382.8,256.5 383.0,256.5 383.2,256.5 383.5,256.5 383.8,256.5 384.0,256.5 384.2,256.5 384.5,256.5 384.8,256.5 385.0,256.5 385.2,256.5 385.5,256.5 385.8,256.5 386.0,256.5 386.2,256.5 386.5,256.5 386.8,256.5 387.0,256.5 387.2,256.5 387.5,256.5 387.8,256.5 388.0,256.5 388.2,256.5 388.5,256.5 388.8,256.5 389.0,256.5 389.2,256.5 389.5,256.5 389.8,256.5 390.0,256.5 390.2,256.5 390.5,256.5 390.8,256.5 391.0,256.5 391.2,256.5 391.5,256.5 391.8,256.5 392.0,256.5 392.2,256.5 392.5,256.5 392.8,256.5 393.0,256.5 393.2,256.5 393.5,256.5 393.8,256.5 394.0,256.5 394.2,256.5 394.5,256.5 394.8,256.5 395.0,256.5 395.2,256.5 395.5,256.5 395.8,256.5 396.0,256.5 396.2,256.5 396.5,256.5 396.8,256.5 397.0,256.5 397.2,256.5 397.5,256.5 397.8,256.5 398.0,256.5 398.2,256.5 398.5,256.5 398.8,256.5 399.0,256.5 399.2,256.5 399.5,256.5 399.8,256.5 400.0,256.5 400.2,256.5 400.5,256.5 400.8,256.5 401.0,256.5 401.2,256.5 401.5,256.5 401.8,256.5 402.0,256.5 402.2,256.5 402.5,256.5 402.8,256.5 403.0,256.5 403.2,256.5 403.5,256.5 403.8,256.5 404.0,256.5 404.2,256.5 404.5,256.5 404.8,256.5 405.0,256.5 405.2,256.5 405.5,256.5 405.8,256.5 406.0,256.5 406.2,256.5 406.5,256.5 406.8,256.5 407.0,256.5 407.2,256.5 407.5,256.5 407.8,256.5 408.0,256.5 408.2,256.5 408.5,256.5 408.8,256.5 409.0,256.5 409.2,256.5 409.5,256.5 409.8,256.5 410.0,256.5 410.2,256.5 410.5,256.5 410.8,256.5 411.0,256.5 411.2,256.5 411.5,256.5 411.8,256.5 412.0,256.5 412.2,256.5 412.5,256.5 412.8,256.5 413.0,256.5 413.2,256.5 413.5,256.5 413.8,256.5 414.0,256.5 414.2,256.5 414.5,256.5 414.8,256.5 415.0,256.5 415.2,256.5 415.5,256.5 415.8,256.5 416.0,256.5 416.2,256.5 416.5,256.5 416.8,256.5 417.0,256.5 417.2,256.5 417.5,256.5 417.8,256.5 418.0,256.5 418.2,256.5 418.5,256.5 418.8,256.5 419.0,256.5 419.2,256.5 419.5,256.5 419.8,256.5 420.0,256.5 420.2,256.5 420.5,256.5 420.8,256.5 421.0,256.5 421.2,256.5 421.5,256.5 421.8,256.5 422.0,256.5 422.2,256.5 422.5,256.5 422.8,256.5 423.0,256.5 423.2,256.5 423.5,256.5 423.8,256.5 424.0,256.5 424.2,256.5 424.5,256.5 424.8,256.5 425.0,256.5 425.2,256.5 425.5,256.5 425.8,256.5 426.0,256.5 426.2,256.5 426.5,256.5 426.8,256.5 427.0,256.5 427.2,256.5 427.5,256.5 427.8,256.5 428.0,256.5 428.2,256.5 428.5,256.5 428.8,256.5 429.0,256.5 429.2,256.5 429.5,256.5 429.8,256.5 430.0,256.5 430.2,256.5 430.5,256.5 430.8,256.5 431.0,256.5 431.2,256.5 431.5,256.5 431.8,256.5 432.0,256.5 432.2,256.5 432.5,256.5 432.8,256.5 433.0,256.5 433.2,256.5 433.5,256.5 433.8,256.5 434.0,256.5 434.2,256.5 434.5,256.5 434.8,256.5 435.0,256.5 435.2,256.5 435.5,256.5 435.8,256.5 436.0,256.5 436.2,256.5 436.5,256.5 436.8,256.5 437.0,256.5 437.2,256.5 437.5,256.5 437.8,256.5 438.0,256.5 438.2,256.5 438.5,256.5 438.8,256.5 439.0,256.5 439.2,256.5 439.5,256.5 439.8,256.5 440.0,256.5 440.2,256.5 440.5,256.5 440.8,256.5 441.0,256.5 441.2,256.5 441.5,256.5 441.8,256.5 442.0,256.5 442.2,256.5 442.5,256.5 442.8,256.5 443.0,256.5 443.2,256.5 443.5,256.5 443.8,256.5 444.0,256.5 444.2,256.5 444.5,256.5 444.8,256.5 445.0,256.5 445.2,256.5 445.5,256.5 445.8,256.5 446.0,256.5 446.2,256.5 446.5,256.5 446.8,256.5 447.0,256.5 447.2,256.5 447.5,256.5 447.8,256.5 448.0,256.5 448.2,256.5 448.5,256.5 448.8,256.5 449.0,256.5 449.2,256.5 449.5,256.5 449.8,256.5 450.0,256.5 450.2,256.5 450.5,256.5 450.8,256.5 451.0,256.5 451.2,256.5 451.5,256.5 451.8,256.5 452.0,256.5 452.2,256.5 452.5,256.5 452.8,256.5 453.0,256.5 453.2,256.5 453.5,256.5 453.8,256.5 454.0,256.5 454.2,256.5 454.5,256.5 454.8,256.5 455.0,256.5 455.2,256.5 455.5,256.5 455.8,256.5 456.0,256.5 456.2,256.5 456.5,256.5 456.8,256.5 457.0,256.5 457.2,256.5 457.5,256.5 457.8,256.5 458.0,256.5 458.2,256.5 458.5,256.5 458.8,256.5 459.0,256.5 459.2,256.5 459.5,256.5 459.8,256.5 460.0,256.5 460.2,256.5 460.5,256.5 460.8,256.5 461.0,256.5 461.2,256.5 461.5,256.5 461.8,256.5 462.0,256.5 462.2,256.5 462.5,256.5 462.8,256.5 463.0,256.5 463.2,256.5 463.5,256.5 463.8,256.5 464.0,256.5 464.2,256.5 464.5,256.5 464.8,256.5 465.0,256.5 465.2,256.5 465.5,256.5 465.8,256.5 466.0,256.5 466.2,256.5 466.5,256.5 466.8,256.5 467.0,256.5 467.2,256.5 467.5,256.5 467.8,256.5 468.0,256.5 468.2,256.5 468.5,256.5 468.8,256.5 469.0,256.5 469.2,256.5 469.5,256.5 469.8,256.5 470.0,256.5 470.2,256.5 470.5,256.5 470.8,256.5 471.0,256.5 471.2,256.5 471.5,256.5 471.8,256.5 472.0,256.5 472.2,256.5 472.5,256.5 472.8,256.5 473.0,256.1 473.2,255.6 473.5,255.1 473.8,254.6 474.0,254.1 474.2,252.7 474.5,251.0 474.8,250.0 475.0,248.3 475.2,245.4 475.5,242.4 475.8,239.4 476.0,236.5 476.2,234.5 476.5,232.5 476.8,230.5 477.0,228.5 477.2,226.6 477.5,226.2 477.8,225.9 478.0,225.5 478.2,225.2 478.5,224.8 478.8,224.5 479.0,224.2 479.2,223.9 479.5,223.7 479.8,223.4 480.0,223.2 480.2,223.0 480.5,222.8 480.8,222.6 481.0,222.4 481.2,222.2 481.5,222.0 481.8,221.8 482.0,221.6 482.2,221.4 482.5,221.3 482.8,221.1 483.0,220.9 483.2,220.7 483.5,220.5 483.8,220.4 484.0,220.2 484.2,220.0 484.5,219.8 484.8,219.6 485.0,219.5 485.2,219.3 485.5,219.1 485.8,218.9 486.0,218.7 486.2,218.5 486.5,218.4 486.8,218.2 487.0,218.0 487.2,217.8 487.5,217.6 487.8,217.5 488.0,217.3 488.2,217.1 488.5,216.9 488.8,216.8 489.0,216.6 489.2,216.4 489.5,216.2 489.8,216.1 490.0,215.9 490.2,215.7 490.5,215.6 490.8,215.4 491.0,215.3 491.2,215.1 491.5,214.9 491.8,214.8 492.0,214.6 492.2,214.5 492.5,214.3 492.8,214.2 493.0,214.0 493.2,213.9 493.5,213.8 493.8,213.6 494.0,213.5 494.2,213.4 494.5,213.2 494.8,213.1 495.0,213.0 495.2,212.9 495.5,212.8 495.8,212.7 496.0,212.6 496.2,212.4 496.5,212.3 496.8,212.2 497.0,212.1 497.2,212.0 497.5,212.0 497.8,211.9 498.0,211.8 498.2,211.7 498.5,211.6 498.8,211.5 499.0,211.4 499.2,211.4 499.5,211.3 499.8,211.2 500.0,211.2 500.2,211.1 500.5,211.0 500.8,210.9 501.0,210.9 501.2,210.8 501.5,210.8 501.8,210.7 502.0,210.7 502.2,210.6 502.5,210.5 502.8,210.5 503.0,210.4 503.2,210.4 503.5,210.4 503.8,210.3 504.0,210.3 504.2,210.2 504.5,210.2 504.8,210.1 505.0,210.1 505.2,210.1 505.5,210.0 505.8,210.0 506.0,210.0 506.2,210.0 506.5,209.9 506.8,209.9 507.0,209.9 507.2,209.9 507.5,209.8 507.8,209.8 508.0,209.8 508.2,209.8 508.5,209.8 508.8,209.8 509.0,209.8 509.2,209.8 509.5,209.8 509.8,209.8 510.0,209.8 510.2,209.8 510.5,209.8 510.8,209.9 511.0,209.9 511.2,209.9 511.5,209.9 511.8,209.9 512.0,209.9 512.2,210.0 512.5,210.0 512.8,210.0 513.0,210.1 513.2,210.1 513.5,210.2 513.8,210.2 514.0,210.2 514.2,210.3 514.5,210.3 514.8,210.4 515.0,210.4 515.2,210.5 515.5,210.5 515.8,210.6 516.0,210.7 516.2,210.7 516.5,210.8 516.8,210.9 517.0,210.9 517.2,211.0 517.5,211.1 517.8,211.2 518.0,211.2 518.2,211.3 518.5,211.4 518.8,211.5 519.0,211.6 519.2,211.7 519.5,211.8 519.8,211.9 520.0,212.0 520.2,212.0 520.5,212.1 520.8,212.2 521.0,212.3 521.2,212.4 521.5,212.5 521.8,212.7 522.0,212.8 522.2,212.9 522.5,213.0 522.8,213.1 523.0,213.2 523.2,213.3 523.5,213.4 523.8,213.6 524.0,213.7 524.2,213.8 524.5,213.9 524.8,214.0 525.0,214.2 525.2,214.3 525.5,214.4 525.8,214.6 526.0,214.7 526.2,214.8 526.5,214.9 526.8,215.1 527.0,215.2 527.2,215.4 527.5,215.5 527.8,215.6 528.0,215.8 528.2,215.9 528.5,216.1 528.8,216.2 529.0,216.4 529.2,216.5 529.5,216.7 529.8,216.9 530.0,217.0 530.2,217.2 530.5,217.4 530.8,217.6 531.0,217.8 531.2,217.9 531.5,218.1 531.8,218.3 532.0,218.5 532.2,218.7 532.5,218.9 532.8,219.1 533.0,219.4 533.2,219.6 533.5,219.8 533.8,220.0 534.0,220.2 534.2,220.5 534.5,220.7 534.8,220.9 535.0,221.2 535.2,221.4 535.5,221.6 535.8,221.9 536.0,222.1 536.2,222.4 536.5,222.6 536.8,222.9 537.0,223.1 537.2,223.4 537.5,223.7 537.8,223.9 538.0,224.2 538.2,224.5 538.5,224.8 538.8,225.1 539.0,225.4 539.2,225.7 539.5,226.0 539.8,226.4 540.0,226.7 540.2,227.0 540.5,227.4 540.8,227.7 541.0,228.0 541.2,229.4 541.5,231.9 541.8,234.4 542.0,236.9 542.2,239.7 542.5,242.5 542.8,245.3 543.0,247.6 543.2,248.9 543.5,250.2 543.8,250.9 544.0,252.3 544.2,253.6 544.5,254.6 544.8,254.9 545.0,255.3 545.2,255.6 545.5,255.9 545.8,256.3 546.0,256.5 546.2,256.5 546.5,256.5 546.8,256.5 547.0,256.5 547.2,256.5 547.5,256.5 547.8,256.5 548.0,256.5 548.2,256.5 548.5,256.5 548.8,256.5 549.0,256.5 549.2,256.5 549.5,256.5 549.8,256.5 550.0,256.5 550.2,256.5 550.5,256.5 550.8,256.5 551.0,256.5 551.2,256.5 551.5,256.5 551.8,256.5 552.0,256.5 552.2,256.5 552.5,256.5 552.8,256.5 553.0,256.5 553.2,256.5 553.5,256.5 553.8,256.5 554.0,256.5 554.2,256.5 554.5,256.5 554.8,256.5 555.0,256.5 555.2,256.5 555.5,256.5 555.8,256.5 556.0,256.5 556.2,256.5 556.5,256.5 556.8,256.5 557.0,256.5 557.2,256.5 557.5,256.5 557.8,256.5 558.0,256.5 558.2,256.5 558.5,256.5 558.8,256.5 559.0,256.5 559.2,256.5 559.5,256.5 559.8,256.5 560.0,256.5 560.2,256.5 560.5,256.5 560.8,256.5 561.0,256.5 561.2,256.5 561.5,256.5 561.8,256.5 562.0,256.5 562.2,256.5 562.5,256.5 562.8,256.5 563.0,256.5 563.2,256.5 563.5,256.5 563.8,256.5 564.0,256.5 564.2,256.5 564.5,256.5 564.8,256.5 565.0,256.5 565.2,256.5 565.5,256.5 565.8,256.5 566.0,256.5 566.2,256.5 566.5,256.5 566.8,256.5 567.0,256.5 567.2,256.5 567.5,256.5 567.8,256.5 568.0,256.5 568.2,256.5 568.5,256.5 568.8,256.5 569.0,256.5 569.2,256.5 569.5,256.5 569.8,256.5 570.0,256.5 570.2,256.5 570.5,256.5 570.8,256.5 571.0,256.5 571.2,256.5 571.5,256.5 571.8,256.5 572.0,256.5 572.2,256.5 572.5,256.5 572.8,256.5 573.0,256.5 573.2,256.5 573.5,256.5 573.8,256.5 574.0,256.5 574.2,256.5 574.5,256.5 574.8,256.5 575.0,256.5 575.2,256.5 575.5,256.5 575.8,256.5 576.0,256.5 576.2,256.5 576.5,256.5 576.8,256.5 577.0,256.5 577.2,256.5 577.5,256.5 577.8,256.5 578.0,256.5 578.2,256.5 578.5,256.5 578.8,256.5 579.0,256.5 579.2,256.5 579.5,256.5 579.8,256.5 580.0,256.5 580.2,256.5 580.5,256.5 580.8,256.5 581.0,256.5 581.2,256.5 581.5,256.5 581.8,256.5 582.0,256.5 582.2,256.5 582.5,256.5 582.8,256.5 583.0,256.5 583.2,256.5 583.5,256.5 583.8,256.5 584.0,256.5 584.2,256.5 584.5,256.5 584.8,256.5 585.0,256.5 585.2,256.5 585.5,256.5 585.8,256.5 586.0,256.5 586.2,256.5 586.5,256.5 586.8,256.5 587.0,256.5 587.2,256.5 587.5,256.5 587.8,256.5 588.0,256.5 588.2,256.5 588.5,256.5 588.8,256.5 589.0,256.5 589.2,256.5 589.5,256.5 589.8,256.5 590.0,256.5 590.2,256.5 590.5,256.5 590.8,256.5 591.0,256.5 591.2,256.5 591.5,256.5 591.8,256.5 592.0,256.5 592.2,256.5 592.5,256.5 592.8,256.5 593.0,256.5 593.2,256.5 593.5,256.5 593.8,256.5 594.0,256.5 594.2,256.5 594.5,256.5 594.8,256.5 595.0,256.5 595.2,256.5 595.5,256.5 595.8,256.5 596.0,256.5 596.2,256.5 596.5,256.5 596.8,256.5 597.0,256.5 597.2,256.5 597.5,256.5 597.8,256.5 598.0,256.5 598.2,256.5 598.5,256.5 598.8,256.5 599.0,256.5 599.2,256.5 599.5,256.5 599.8,256.5 600.0,256.5 600.2,256.5 600.5,256.5 600.8,256.5 601.0,256.5 601.2,256.5 601.5,256.5 601.8,256.5 602.0,256.5 602.2,256.5 602.5,256.5 602.8,256.5 603.0,256.5 603.2,256.5 603.5,256.5 603.8,256.5 604.0,256.5 604.2,256.5 604.5,256.5 604.8,256.5 605.0,256.5 605.2,256.5 605.5,256.5 605.8,256.5 606.0,256.5 606.2,256.5 606.5,256.5 606.8,256.5 607.0,256.5 607.2,256.5 607.5,256.5 607.8,256.5 608.0,256.5 608.2,256.5 608.5,256.5 608.8,256.5 609.0,256.5 609.2,256.5 609.5,256.5 609.8,256.5 610.0,256.5 610.2,256.5 610.5,256.5 610.8,256.5 611.0,256.5 611.2,256.5 611.5,256.5 611.8,256.5 612.0,256.5 612.2,256.5 612.5,256.5 612.8,256.5 613.0,256.5 613.2,256.5 613.5,256.5 613.8,256.5 614.0,256.5 614.2,256.5 614.5,256.5 614.8,256.5 615.0,256.5 615.2,256.5 615.5,256.5 615.8,256.5 616.0,256.5 616.2,256.5 616.5,256.5 616.8,256.5 617.0,256.5 617.2,256.5 617.5,256.5 617.8,256.5 618.0,256.5 618.2,256.5 618.5,256.5 618.8,256.5 619.0,256.5 619.2,256.5 619.5,256.5 619.8,256.5 620.0,256.5 620.2,256.5 620.5,256.5 620.8,256.5 621.0,256.5 621.2,256.5 621.5,256.5 621.8,256.5 622.0,256.5 622.2,256.5 622.5,256.5 622.8,256.5 623.0,256.5 623.2,256.5 623.5,256.5 623.8,256.5 624.0,256.5 624.2,256.5 624.5,256.5 624.8,256.5 625.0,256.5 625.2,256.5 625.5,256.5 625.8,256.5 626.0,256.5 626.2,256.5 626.5,256.5 626.8,256.5 627.0,256.5 627.2,256.5 627.5,256.5 627.8,256.5 628.0,256.5 628.2,256.5 628.5,256.5 628.8,256.5 629.0,256.5 629.2,256.5 629.5,256.5 629.8,256.5 630.0,256.5 630.2,256.5 630.5,256.5 630.8,256.5 631.0,256.5 631.2,256.5 631.5,256.5 631.8,256.5 632.0,256.5 632.2,256.5 632.5,256.5 632.8,256.5 633.0,256.5 633.2,256.5 633.5,256.5 633.8,256.5 634.0,256.5 634.2,256.5 634.5,256.5 634.8,256.5 635.0,256.5 635.2,256.5 635.5,256.5 635.8,256.5 636.0,256.5 636.2,256.5 636.5,256.5 636.8,256.5 637.0,256.5 637.2,256.5 637.5,256.5 637.8,256.5 638.0,256.5 638.2,256.5 638.5,256.5 638.8,256.5 639.0,256.5 639.2,256.5 639.5,256.5 639.8,256.5 640.0,256.5 640.2,256.5 640.5,256.5 640.8,256.5 641.0,256.5 641.2,256.5 641.5,256.5 641.8,256.5 642.0,256.5 642.2,256.5 642.5,256.5 642.8,256.5 643.0,256.5 643.2,256.1 643.5,255.6 643.8,255.1 644.0,254.6 644.2,254.1 644.5,252.7 644.8,251.0 645.0,250.0 645.2,248.3 645.5,245.4 645.8,242.4 646.0,239.4 646.2,236.5 646.5,234.5 646.8,232.5 647.0,230.5 647.2,228.5 647.5,226.6 647.8,226.2 648.0,225.9 648.2,225.5 648.5,225.2 648.8,224.8 649.0,224.5 649.2,224.2 649.5,223.9 649.8,223.7 650.0,223.4 650.2,223.2 650.5,223.0 650.8,222.8 651.0,222.6 651.2,222.4 651.5,222.2 651.8,222.0 652.0,221.8 652.2,221.6 652.5,221.4 652.8,221.3 653.0,221.1 653.2,220.9 653.5,220.7 653.8,220.5 654.0,220.4 654.2,220.2 654.5,220.0 654.8,219.8 655.0,219.6 655.2,219.5 655.5,219.3 655.8,219.1 656.0,218.9 656.2,218.7 656.5,218.5 656.8,218.4 657.0,218.2 657.2,218.0 657.5,217.8 657.8,217.6 658.0,217.5 658.2,217.3 658.5,217.1 658.8,216.9 659.0,216.8 659.2,216.6 659.5,216.4 659.8,216.2 660.0,216.1 660.2,215.9 660.5,215.7 660.8,215.6 661.0,215.4 661.2,215.3 661.5,215.1 661.8,214.9 662.0,214.8 662.2,214.6 662.5,214.5 662.8,214.3 663.0,214.2 663.2,214.0 663.5,213.9 663.8,213.8 664.0,213.6 664.2,213.5 664.5,213.4 664.8,213.2 665.0,213.1 665.2,213.0 665.5,212.9 665.8,212.8 666.0,212.7 666.2,212.6 666.5,212.4 666.8,212.3 667.0,212.2 667.2,212.1 667.5,212.0 667.8,212.0 668.0,211.9 668.2,211.8 668.5,211.7 668.8,211.6 669.0,211.5 669.2,211.4 669.5,211.4 669.8,211.3 670.0,211.2 670.2,211.2 670.5,211.1 670.8,211.0 671.0,210.9 671.2,210.9 671.5,210.8 671.8,210.8 672.0,210.7 672.2,210.7 672.5,210.6 672.8,210.5 673.0,210.5 673.2,210.4 673.5,210.4 673.8,210.4 674.0,210.3 674.2,210.3 674.5,210.2 674.8,210.2 675.0,210.1 675.2,210.1 675.5,210.1 675.8,210.0 676.0,210.0 676.2,210.0 676.5,210.0 676.8,209.9 677.0,209.9 677.2,209.9 677.5,209.9 677.8,209.8 678.0,209.8 678.2,209.8 678.5,209.8 678.8,209.8 679.0,209.8 679.2,209.8 679.5,209.8 679.8,209.8 680.0,209.8 680.2,209.8 680.5,209.8 680.8,209.8 681.0,209.9 681.2,209.9 681.5,209.9 681.8,209.9 682.0,209.9 682.2,209.9 682.5,210.0 682.8,210.0 683.0,210.0 683.2,210.1 683.5,210.1 683.8,210.2 684.0,210.2 684.2,210.2 684.5,210.3 684.8,210.3 685.0,210.4 685.2,210.4 685.5,210.5 685.8,210.5 686.0,210.6 686.2,210.7 686.5,210.7 686.8,210.8 687.0,210.9 687.2,210.9 687.5,211.0 687.8,211.1 688.0,211.2 688.2,211.2 688.5,211.3 688.8,211.4 689.0,211.5 689.2,211.6 689.5,211.7 689.8,211.8 690.0,211.9 690.2,212.0 690.5,212.0 690.8,212.1 691.0,212.2 691.2,212.3 691.5,212.4 691.8,212.5 692.0,212.7 692.2,212.8 692.5,212.9 692.8,213.0 693.0,213.1 693.2,213.2 693.5,213.3 693.8,213.4 694.0,213.6 694.2,213.7 694.5,213.8 694.8,213.9 695.0,214.0 695.2,214.2 695.5,214.3 695.8,214.4 696.0,214.6 696.2,214.7 696.5,214.8 696.8,214.9 697.0,215.1 697.2,215.2 697.5,215.4 697.8,215.5 698.0,215.6 698.2,215.8 698.5,215.9 698.8,216.1 699.0,216.2 699.2,216.4 699.5,216.5 699.8,216.7 700.0,216.9 700.2,217.0 700.5,217.2 700.8,217.4 701.0,217.6 701.2,217.8 701.5,217.9 701.8,218.1 702.0,218.3 702.2,218.5 702.5,218.7 702.8,218.9 703.0,219.1 703.2,219.4 703.5,219.6 703.8,219.8 704.0,220.0 704.2,220.2 704.5,220.5 704.8,220.7 705.0,220.9 705.2,221.2 705.5,221.4 705.8,221.6 706.0,221.9 706.2,222.1 706.5,222.4 706.8,222.6 707.0,222.9 707.2,223.1 707.5,223.4 707.8,223.7 708.0,223.9 708.2,224.2 708.5,224.5 708.8,224.8 709.0,225.1 709.2,225.4 709.5,225.7 709.8,226.0 710.0,226.4 710.2,226.7 710.5,227.0 710.8,227.4 711.0,227.7 711.2,228.0 711.5,229.4 711.8,231.9 712.0,234.4 712.2,236.9 712.5,239.7 712.8,242.5 713.0,245.3 713.2,247.6 713.5,248.9 713.8,250.2 714.0,250.9 714.2,252.3 714.5,253.6 714.8,254.6 715.0,254.9 715.2,255.3 715.5,255.6 715.8,255.9 716.0,256.3 716.2,256.5 716.5,256.5 716.8,256.5 717.0,256.5 717.2,256.5 717.5,256.5 717.8,256.5 718.0,256.5 718.2,256.5 718.5,256.5 718.8,256.5 719.0,256.5 719.2,256.5 719.5,256.5 719.8,256.5 720.0,256.5 720.2,256.5 720.5,256.5 720.8,256.5 721.0,256.5" fill="none" stroke="#0000ff" stroke-width="1" />
<polyline points="40.5,257.5 40.8,257.5 41.0,257.5 41.2,256.2 41.5,255.0 41.8,253.8 42.0,252.5 42.2,251.2 42.5,250.0 42.8,248.8 43.0,247.5 43.2,246.7 43.5,247.8 43.8,248.9 44.0,250.0 44.2,251.2 44.5,252.5 44.8,253.8 45.0,255.0 45.2,256.2 45.5,257.5 45.8,257.5 46.0,257.5 46.2,257.5 46.5,257.5 46.8,257.5 47.0,257.5 47.2,257.5 47.5,257.5 47.8,257.5 48.0,257.5 48.2,257.5 48.5,257.5 48.8,257.5 49.0,257.5 49.2,257.5 49.5,257.5 49.8,257.5 50.0,257.5 50.2,257.5 50.5,257.5 50.8,257.5 51.0,257.5 51.2,257.5 51.5,257.5 51.8,257.5 52.0,257.5 52.2,257.5 52.5,257.5 52.8,257.5 53.0,257.5 53.2,257.5 53.5,257.5 53.8,257.5 54.0,257.5 54.2,257.5 54.5,257.5 54.8,257.5 55.0,257.5 55.2,257.5 55.5,257.5 55.8,257.5 56.0,257.5 56.2,257.5 56.5,257.5 56.8,257.5 57.0,257.5 57.2,257.5 57.5,257.5 57.8,257.5 58.0,257.5 58.2,257.5 58.5,257.5 58.8,257.5 59.0,257.5 59.2,257.5 59.5,257.5 59.8,257.5 60.0,257.5 60.2,257.5 60.5,257.5 60.8,257.5 61.0,257.5 61.2,257.5 61.5,257.5 61.8,257.5 62.0,257.5 62.2,257.5 62.5,257.5 62.8,257.5 63.0,257.5 63.2,257.5 63.5,257.5 63.8,257.5 64.0,257.5 64.2,257.5 64.5,257.5 64.8,257.5 65.0,257.5 65.2,257.5 65.5,257.5 65.8,257.5 66.0,257.5 66.2,257.5 66.5,257.5 66.8,257.5 67.0,257.5 67.2,257.5 67.5,257.5 67.8,257.5 68.0,257.5 68.2,257.5 68.5,257.5 68.8,257.5 69.0,257.5 69.2,257.5 69.5,257.5 69.8,257.5 70.0,257.5 70.2,257.5 70.5,257.5 70.8,257.5 71.0,257.5 71.2,257.5 71.5,257.5 71.8,257.5 72.0,257.5 72.2,257.5 72.5,257.5 72.8,257.5 73.0,257.5 73.2,257.5 73.5,257.5 73.8,257.5 74.0,257.5 74.2,257.5 74.5,257.5 74.8,257.5 75.0,257.5 75.2,257.5 75.5,257.5 75.8,257.5 76.0,257.5 76.2,257.5 76.5,257.5 76.8,257.5 77.0,257.5 77.2,257.5 77.5,257.5 77.8,257.5 78.0,257.5 78.2,257.5 78.5,257.5 78.8,257.5 79.0,257.5 79.2,257.5 79.5,257.5 79.8,257.5 80.0,257.5 80.2,257.5 80.5,257.5 80.8,257.5 81.0,257.5 81.2,257.5 81.5,257.5 81.8,257.5 82.0,257.5 82.2,257.5 82.5,257.5 82.8,257.5 83.0,257.5 83.2,257.5 83.5,257.5 83.8,257.5 84.0,257.5 84.2,257.5 84.5,257.5 84.8,257.5 85.0,257.5 85.2,257.5 85.5,257.5 85.8,257.5 86.0,257.5 86.2,257.5 86.5,257.5 86.8,257.5 87.0,257.5 87.2,257.5 87.5,257.5 87.8,257.5 88.0,257.5 88.2,257.5 88.5,257.5 88.8,257.5 89.0,257.5 89.2,257.5 89.5,257.5 89.8,257.5 90.0,257.5 90.2,257.5 90.5,257.5 90.8,257.5 91.0,257.5 91.2,257.5 91.5,257.5 91.8,257.5 92.0,257.5 92.2,257.5 92.5,257.5 92.8,257.5 93.0,257.5 93.2,257.5 93.5,257.5 93.8,257.5 94.0,257.5 94.2,257.5 94.5,257.5 94.8,257.5 95.0,257.5 95.2,257.5 95.5,257.5 95.8,257.5 96.0,257.5 96.2,257.5 96.5,257.5 96.8,257.5 97.0,257.5 97.2,257.5 97.5,257.5 97.8,257.5 98.0,257.5 98.2,257.5 98.5,257.5 98.8,257.5 99.0,257.5 99.2,257.5 99.5,257.5 99.8,257.5 100.0,257.5 100.2,257.5 100.5,257.5 100.8,257.5 101.0,257.5 101.2,257.5 101.5,257.5 101.8,257.5 102.0,257.5 102.2,257.5 102.5,257.5 102.8,257.5 103.0,257.5 103.2,257.5 103.5,257.5 103.8,257.5 104.0,257.5 104.2,257.5 104.5,257.5 104.8,257.5 105.0,257.5 105.2,257.5 105.5,257.5 105.8,257.5 106.0,257.5 106.2,257.5 106.5,257.5 106.8,257.5 107.0,257.5 107.2,257.5 107.5,257.5 107.8,257.5 108.0,257.5 108.2,257.5 108.5,257.5 108.8,257.5 109.0,257.5 109.2,257.5 109.5,257.5 109.8,257.5 110.0,257.5 110.2,257.5 110.5,257.5 110.8,257.5 111.0,257.5 111.2,257.5 111.5,257.5 111.8,257.5 112.0,257.5 112.2,257.5 112.5,257.5 112.8,257.5 113.0,257.5 113.2,257.5 113.5,257.5 113.8,257.5 114.0,257.5 114.2,257.5 114.5,257.5 114.8,257.5 115.0,257.5 115.2,257.5 115.5,257.5 115.8,257.5 116.0,257.5 116.2,257.5 116.5,257.5 116.8,257.5 117.0,257.5 117.2,257.5 117.5,257.5 117.8,257.5 118.0,257.5 118.2,257.5 118.5,257.5 118.8,257.5 119.0,257.5 119.2,257.5 119.5,257.5 119.8,257.5 120.0,257.5 120.2,257.5 120.5,257.5 120.8,257.5 121.0,257.5 121.2,257.5 121.5,257.5 121.8,257.5 122.0,257.5 122.2,257.5 122.5,257.5 122.8,257.5 123.0,257.5 123.2,257.5 123.5,257.5 123.8,257.5 124.0,257.5 124.2,257.5 124.5,257.5 124.8,257.5 125.0,257.5 125.2,257.5 125.5,257.5 125.8,257.5 126.0,257.5 126.2,257.5 126.5,257.5 126.8,257.5 127.0,257.5 127.2,257.5 127.5,257.5 127.8,257.5 128.0,257.5 128.2,257.5 128.5,257.5 128.8,257.5 129.0,257.5 129.2,257.5 129.5,257.5 129.8,257.5 130.0,257.5 130.2,257.5 130.5,257.5 130.8,257.0 131.0,256.5 131.2,256.0 131.5,255.6 131.8,255.1 132.0,254.6 132.2,254.1 132.5,252.7 132.8,251.1 133.0,249.5 133.2,247.9 133.5,245.3 133.8,242.4 134.0,239.5 134.2,236.6 134.5,234.5 134.8,232.5 135.0,230.6 135.2,228.7 135.5,226.8 135.8,225.8 136.0,225.5 136.2,225.1 136.5,224.8 136.8,224.4 137.0,224.1 137.2,223.8 137.5,223.5 137.8,223.3 138.0,223.0 138.2,222.8 138.5,222.6 138.8,222.3 139.0,222.1 139.2,221.9 139.5,221.8 139.8,221.6 140.0,221.4 140.2,221.2 140.5,221.0 140.8,220.9 141.0,220.7 141.2,220.5 141.5,220.3 141.8,220.2 142.0,220.0 142.2,219.8 142.5,219.6 142.8,219.5 143.0,219.3 143.2,219.1 143.5,218.9 143.8,218.8 144.0,218.6 144.2,218.4 144.5,218.2 144.8,218.1 145.0,217.9 145.2,217.7 145.5,217.5 145.8,217.4 146.0,217.2 146.2,217.0 146.5,216.8 146.8,216.7 147.0,216.5 147.2,216.3 147.5,216.2 147.8,216.0 148.0,215.8 148.2,215.7 148.5,215.5 148.8,215.3 149.0,215.2 149.2,215.0 149.5,214.9 149.8,214.7 150.0,214.6 150.2,214.4 150.5,214.3 150.8,214.1 151.0,214.0 151.2,213.8 151.5,213.7 151.8,213.5 152.0,213.4 152.2,213.3 152.5,213.1 152.8,213.0 153.0,212.9 153.2,212.8 153.5,212.6 153.8,212.5 154.0,212.4 154.2,212.3 154.5,212.2 154.8,212.1 155.0,212.0 155.2,211.8 155.5,211.7 155.8,211.6 156.0,211.6 156.2,211.5 156.5,211.4 156.8,211.3 157.0,211.2 157.2,211.1 157.5,211.0 157.8,210.9 158.0,210.9 158.2,210.8 158.5,210.7 158.8,210.7 159.0,210.6 159.2,210.5 159.5,210.5 159.8,210.4 160.0,210.3 160.2,210.3 160.5,210.2 160.8,210.2 161.0,210.1 161.2,210.1 161.5,210.0 161.8,209.9 162.0,209.9 162.2,209.8 162.5,209.8 162.8,209.8 163.0,209.7 163.2,209.7 163.5,209.6 163.8,209.6 164.0,209.6 164.2,209.5 164.5,209.5 164.8,209.5 165.0,209.4 165.2,209.4 165.5,209.4 165.8,209.4 166.0,209.3 166.2,209.3 166.5,209.3 166.8,209.3 167.0,209.2 167.2,209.2 167.5,209.2 167.8,209.2 168.0,209.2 168.2,209.2 168.5,209.2 168.8,209.2 169.0,209.2 169.2,209.2 169.5,209.2 169.8,209.2 170.0,209.2 170.2,209.3 170.5,209.3 170.8,209.3 171.0,209.3 171.2,209.3 171.5,209.3 171.8,209.4 172.0,209.4 172.2,209.4 172.5,209.5 172.8,209.5 173.0,209.5 173.2,209.6 173.5,209.6 173.8,209.6 174.0,209.7 174.2,209.7 174.5,209.8 174.8,209.8 175.0,209.9 175.2,209.9 175.5,210.0 175.8,210.0 176.0,210.1 176.2,210.1 176.5,210.2 176.8,210.3 177.0,210.3 177.2,210.4 177.5,210.5 177.8,210.6 178.0,210.6 178.2,210.7 178.5,210.8 178.8,210.9 179.0,210.9 179.2,211.0 179.5,211.1 179.8,211.2 180.0,211.3 180.2,211.4 180.5,211.5 180.8,211.6 181.0,211.7 181.2,211.8 181.5,211.8 181.8,211.9 182.0,212.0 182.2,212.2 182.5,212.3 182.8,212.4 183.0,212.5 183.2,212.6 183.5,212.7 183.8,212.8 184.0,212.9 184.2,213.0 184.5,213.1 184.8,213.2 185.0,213.3 185.2,213.5 185.5,213.6 185.8,213.7 186.0,213.8 186.2,214.0 186.5,214.1 186.8,214.2 187.0,214.3 187.2,214.4 187.5,214.6 187.8,214.7 188.0,214.8 188.2,215.0 188.5,215.1 188.8,215.3 189.0,215.4 189.2,215.5 189.5,215.7 189.8,215.8 190.0,215.9 190.2,216.1 190.5,216.3 190.8,216.4 191.0,216.6 191.2,216.8 191.5,216.9 191.8,217.1 192.0,217.3 192.2,217.4 192.5,217.6 192.8,217.8 193.0,218.0 193.2,218.2 193.5,218.4 193.8,218.6 194.0,218.8 194.2,219.0 194.5,219.2 194.8,219.4 195.0,219.6 195.2,219.8 195.5,220.1 195.8,220.3 196.0,220.5 196.2,220.7 196.5,220.9 196.8,221.2 197.0,221.4 197.2,221.6 197.5,221.8 197.8,222.1 198.0,222.3 198.2,222.6 198.5,222.8 198.8,223.1 199.0,223.3 199.2,223.6 199.5,223.8 199.8,224.1 200.0,224.4 200.2,224.7 200.5,225.0 200.8,225.3 201.0,225.6 201.2,225.9 201.5,226.2 201.8,226.5 202.0,226.9 202.2,227.2 202.5,227.5 202.8,229.0 203.0,231.3 203.2,233.7 203.5,236.0 203.8,238.6 204.0,241.2 204.2,243.9 204.5,246.5 204.8,247.8 205.0,249.0 205.2,250.2 205.5,251.5 205.8,252.8 206.0,254.0 206.2,254.7 206.5,255.0 206.8,255.3 207.0,255.6 207.2,255.9 207.5,256.2 207.8,256.6 208.0,256.9 208.2,257.2 208.5,257.5 208.8,257.5 209.0,257.5 209.2,257.5 209.5,257.5 209.8,257.5 210.0,257.5 210.2,257.5 210.5,257.5 210.8,257.5 211.0,257.5 211.2,257.5 211.5,257.5 211.8,257.5 212.0,257.5 212.2,257.5 212.5,257.5 212.8,257.5 213.0,257.5 213.2,257.5 213.5,257.5 213.8,257.5 214.0,257.5 214.2,257.5 214.5,257.5 214.8,257.5 215.0,257.5 215.2,257.5 215.5,257.5 215.8,257.5 216.0,257.5 216.2,257.5 216.5,257.5 216.8,257.5 217.0,257.5 217.2,257.5 217.5,257.5 217.8,257.5 218.0,257.5 218.2,257.5 218.5,257.5 218.8,257.5 219.0,257.5 219.2,257.5 219.5,257.5 219.8,257.5 220.0,257.5 220.2,257.5 220.5,257.5 220.8,257.5 221.0,257.5 221.2,257.5 221.5,257.5 221.8,257.5 222.0,257.5 222.2,257.5 222.5,257.5 222.8,257.5 223.0,257.5 223.2,257.5 223.5,257.5 223.8,257.5 224.0,257.5 224.2,257.5 224.5,257.5 224.8,257.5 225.0,257.5 225.2,257.5 225.5,257.5 225.8,257.5 226.0,257.5 226.2,257.5 226.5,257.5 226.8,257.5 227.0,257.5 227.2,257.5 227.5,257.5 227.8,257.5 228.0,257.5 228.2,257.5 228.5,257.5 228.8,257.5 229.0,257.5 229.2,257.5 229.5,257.5 229.8,257.5 230.0,257.5 230.2,257.5 230.5,257.5 230.8,257.5 231.0,257.5 231.2,257.5 231.5,257.5 231.8,257.5 232.0,257.5 232.2,257.5 232.5,257.5 232.8,257.5 233.0,257.5 233.2,257.5 233.5,257.5 233.8,257.5 234.0,257.5 234.2,257.5 234.5,257.5 234.8,257.5 235.0,257.5 235.2,257.5 235.5,257.5 235.8,257.5 236.0,257.5 236.2,257.5 236.5,257.5 236.8,257.5 237.0,257.5 237.2,257.5 237.5,257.5 237.8,257.5 238.0,257.5 238.2,257.5 238.5,257.5 238.8,257.5 239.0,257.5 239.2,257.5 239.5,257.5 239.8,257.5 240.0,257.5 240.2,257.5 240.5,257.5 240.8,257.5 241.0,257.5 241.2,257.5 241.5,257.5 241.8,257.5 242.0,257.5 242.2,257.5 242.5,257.5 242.8,257.5 243.0,257.5 243.2,257.5 243.5,257.5 243.8,257.5 244.0,257.5 244.2,257.5 244.5,257.5 244.8,257.5 245.0,257.5 245.2,257.5 245.5,257.5 245.8,257.5 246.0,257.5 246.2,257.5 246.5,257.5 246.8,257.5 247.0,257.5 247.2,257.5 247.5,257.5 247.8,257.5 248.0,257.5 248.2,257.5 248.5,257.5 248.8,257.5 249.0,257.5 249.2,257.5 249.5,257.5 249.8,257.5 250.0,257.5 250.2,257.5 250.5,257.5 250.8,257.5 251.0,257.5 251.2,257.5 251.5,257.5 251.8,257.5 252.0,257.5 252.2,257.5 252.5,257.5 252.8,257.5 253.0,257.5 253.2,257.5 253.5,257.5 253.8,257.5 254.0,257.5 254.2,257.5 254.5,257.5 254.8,257.5 255.0,257.5 255.2,257.5 255.5,257.5 255.8,257.5 256.0,257.5 256.2,257.5 256.5,257.5 256.8,257.5 257.0,257.5 257.2,257.5 257.5,257.5 257.8,257.5 258.0,257.5 258.2,257.5 258.5,257.5 258.8,257.5 259.0,257.5 259.2,257.5 259.5,257.5 259.8,257.5 260.0,257.5 260.2,257.5 260.5,257.5 260.8,257.5 261.0,257.5 261.2,257.5 261.5,257.5 261.8,257.5 262.0,257.5 262.2,257.5 262.5,257.5 262.8,257.5 263.0,257.5 263.2,257.5 263.5,257.5 263.8,257.5 264.0,257.5 264.2,257.5 264.5,257.5 264.8,257.5 265.0,257.5 265.2,257.5 265.5,257.5 265.8,257.5 266.0,257.5 266.2,257.5 266.5,257.5 266.8,257.5 267.0,257.5 267.2,257.5 267.5,257.5 267.8,257.5 268.0,257.5 268.2,257.5 268.5,257.5 268.8,257.5 269.0,257.5 269.2,257.5 269.5,257.5 269.8,257.5 270.0,257.5 270.2,257.5 270.5,257.5 270.8,257.5 271.0,257.5 271.2,257.5 271.5,257.5 271.8,257.5 272.0,257.5 272.2,257.5 272.5,257.5 272.8,257.5 273.0,257.5 273.2,257.5 273.5,257.5 273.8,257.5 274.0,257.5 274.2,257.5 274.5,257.5 274.8,257.5 275.0,257.5 275.2,257.5 275.5,257.5 275.8,257.5 276.0,257.5 276.2,257.5 276.5,257.5 276.8,257.5 277.0,257.5 277.2,257.5 277.5,257.5 277.8,257.5 278.0,257.5 278.2,257.5 278.5,257.5 278.8,257.5 279.0,257.5 279.2,257.5 279.5,257.5 279.8,257.5 280.0,257.5 280.2,257.5 280.5,257.5 280.8,257.5 281.0,257.5 281.2,257.5 281.5,257.5 281.8,257.5 282.0,257.5 282.2,257.5 282.5,257.5 282.8,257.5 283.0,257.5 283.2,257.5 283.5,257.5 283.8,257.5 284.0,257.5 284.2,257.5 284.5,257.5 284.8,257.5 285.0,257.5 285.2,257.5 285.5,257.5 285.8,257.5 286.0,257.5 286.2,257.5 286.5,257.5 286.8,257.5 287.0,257.5 287.2,257.5 287.5,257.5 287.8,257.5 288.0,257.5 288.2,257.5 288.5,257.5 288.8,257.5 289.0,257.5 289.2,257.5 289.5,257.5 289.8,257.5 290.0,257.5 290.2,257.5 290.5,257.5 290.8,257.5 291.0,257.5 291.2,257.5 291.5,257.5 291.8,257.5 292.0,257.5 292.2,257.5 292.5,257.5 292.8,257.5 293.0,257.5 293.2,257.5 293.5,257.5 293.8,257.5 294.0,257.5 294.2,257.5 294.5,257.5 294.8,257.5 295.0,257.5 295.2,257.5 295.5,257.5 295.8,257.5 296.0,257.5 296.2,257.5 296.5,257.5 296.8,257.5 297.0,257.5 297.2,257.5 297.5,257.5 297.8,257.5 298.0,257.5 298.2,257.5 298.5,257.5 298.8,257.5 299.0,257.5 299.2,257.5 299.5,257.5 299.8,257.5 300.0,257.5 300.2,257.5 300.5,257.5 300.8,257.5 301.0,257.0 301.2,256.5 301.5,256.0 301.8,255.6 302.0,255.1 302.2,254.6 302.5,254.1 302.8,252.7 303.0,251.1 303.2,249.5 303.5,247.9 303.8,245.3 304.0,242.4 304.2,239.5 304.5,236.6 304.8,234.5 305.0,232.5 305.2,230.6 305.5,228.7 305.8,226.8 306.0,225.8 306.2,225.5 306.5,225.1 306.8,224.8 307.0,224.4 307.2,224.1 307.5,223.8 307.8,223.5 308.0,223.3 308.2,223.0 308.5,222.8 308.8,222.6 309.0,222.3 309.2,222.1 309.5,221.9 309.8,221.8 310.0,221.6 310.2,221.4 310.5,221.2 310.8,221.0 311.0,220.9 311.2,220.7 311.5,220.5 311.8,220.3 312.0,220.2 312.2,220.0 312.5,219.8 312.8,219.6 313.0,219.5 313.2,219.3 313.5,219.1 313.8,218.9 314.0,218.8 314.2,218.6 314.5,218.4 314.8,218.2 315.0,218.1 315.2,217.9 315.5,217.7 315.8,217.5 316.0,217.4 316.2,217.2 316.5,217.0 316.8,216.8 317.0,216.7 317.2,216.5 317.5,216.3 317.8,216.2 318.0,216.0 318.2,215.8 318.5,215.7 318.8,215.5 319.0,215.3 319.2,215.2 319.5,215.0 319.8,214.9 320.0,214.7 320.2,214.6 320.5,214.4 320.8,214.3 321.0,214.1 321.2,214.0 321.5,213.8 321.8,213.7 322.0,213.5 322.2,213.4 322.5,213.3 322.8,213.1 323.0,213.0 323.2,212.9 323.5,212.8 323.8,212.6 324.0,212.5 324.2,212.4 324.5,212.3 324.8,212.2 325.0,212.1 325.2,212.0 325.5,211.8 325.8,211.7 326.0,211.6 326.2,211.6 326.5,211.5 326.8,211.4 327.0,211.3 327.2,211.2 327.5,211.1 327.8,211.0 328.0,210.9 328.2,210.9 328.5,210.8 328.8,210.7 329.0,210.7 329.2,210.6 329.5,210.5 329.8,210.5 330.0,210.4 330.2,210.3 330.5,210.3 330.8,210.2 331.0,210.2 331.2,210.1 331.5,210.1 331.8,210.0 332.0,209.9 332.2,209.9 332.5,209.8 332.8,209.8 333.0,209.8 333.2,209.7 333.5,209.7 333.8,209.6 334.0,209.6 334.2,209.6 334.5,209.5 334.8,209.5 335.0,209.5 335.2,209.4 335.5,209.4 335.8,209.4 336.0,209.4 336.2,209.3 336.5,209.3 336.8,209.3 337.0,209.3 337.2,209.2 337.5,209.2 337.8,209.2 338.0,209.2 338.2,209.2 338.5,209.2 338.8,209.2 339.0,209.2 339.2,209.2 339.5,209.2 339.8,209.2 340.0,209.2 340.2,209.2 340.5,209.3 340.8,209.3 341.0,209.3 341.2,209.3 341.5,209.3 341.8,209.3 342.0,209.4 342.2,209.4 342.5,209.4 342.8,209.5 343.0,209.5 343.2,209.5 343.5,209.6 343.8,209.6 344.0,209.6 344.2,209.7 344.5,209.7 344.8,209.8 345.0,209.8 345.2,209.9 345.5,209.9 345.8,210.0 346.0,210.0 346.2,210.1 346.5,210.1 346.8,210.2 347.0,210.3 347.2,210.3 347.5,210.4 347.8,210.5 348.0,210.6 348.2,210.6 348.5,210.7 348.8,210.8 349.0,210.9 349.2,210.9 349.5,211.0 349.8,211.1 350.0,211.2 350.2,211.3 350.5,211.4 350.8,211.5 351.0,211.6 351.2,211.7 351.5,211.8 351.8,211.8 352.0,211.9 352.2,212.0 352.5,212.2 352.8,212.3 353.0,212.4 353.2,212.5 353.5,212.6 353.8,212.7 354.0,212.8 354.2,212.9 354.5,213.0 354.8,213.1 355.0,213.2 355.2,213.3 355.5,213.5 355.8,213.6 356.0,213.7 356.2,213.8 356.5,214.0 356.8,214.1 357.0,214.2 357.2,214.3 357.5,214.4 357.8,214.6 358.0,214.7 358.2,214.8 358.5,215.0 358.8,215.1 359.0,215.3 359.2,215.4 359.5,215.5 359.8,215.7 360.0,215.8 360.2,215.9 360.5,216.1 360.8,216.3 361.0,216.4 361.2,216.6 361.5,216.8 361.8,216.9 362.0,217.1 362.2,217.3 362.5,217.4 362.8,217.6 363.0,217.8 363.2,218.0 363.5,218.2 363.8,218.4 364.0,218.6 364.2,218.8 364.5,219.0 364.8,219.2 365.0,219.4 365.2,219.6 365.5,219.8 365.8,220.1 366.0,220.3 366.2,220.5 366.5,220.7 366.8,220.9 367.0,221.2 367.2,221.4 367.5,221.6 367.8,221.8 368.0,222.1 368.2,222.3 368.5,222.6 368.8,222.8 369.0,223.1 369.2,223.3 369.5,223.6 369.8,223.8 370.0,224.1 370.2,224.4 370.5,224.7 370.8,225.0 371.0,225.3 371.2,225.6 371.5,225.9 371.8,226.2 372.0,226.5 372.2,226.9 372.5,227.2 372.8,227.5 373.0,229.0 373.2,231.3 373.5,233.7 373.8,236.0 374.0,238.6 374.2,241.2 374.5,243.9 374.8,246.5 375.0,247.8 375.2,249.0 375.5,250.2 375.8,251.5 376.0,252.8 376.2,254.0 376.5,254.7 376.8,255.0 377.0,255.3 377.2,255.6 377.5,255.9 377.8,256.2 378.0,256.6 378.2,256.9 378.5,257.2 378.8,257.5 379.0,257.5 379.2,257.5 379.5,257.5 379.8,257.5 380.0,257.5 380.2,257.5 380.5,257.5 380.8,257.5 381.0,257.5 381.2,257.5 381.5,257.5 381.8,257.5 382.0,257.5 382.2,257.5 382.5,257.5 382.8,257.5 383.0,257.5 383.2,257.5 383.5,257.5 383.8,257.5 384.0,257.5 384.2,257.5 384.5,257.5 384.8,257.5 385.0,257.5 385.2,257.5 385.5,257.5 385.8,257.5 386.0,257.5 386.2,257.5 386.5,257.5 386.8,257.5 387.0,257.5 387.2,257.5 387.5,257.5 387.8,257.5 388.0,257.5 388.2,257.5 388.5,257.5 388.8,257.5 389.0,257.5 389.2,257.5 389.5,257.5 389.8,257.5 390.0,257.5 390.2,257.5 390.5,257.5 390.8,257.5 391.0,257.5 391.2,257.5 391.5,257.5 391.8,257.5 392.0,257.5 392.2,257.5 392.5,257.5 392.8,257.5 393.0,257.5 393.2,257.5 393.5,257.5 393.8,257.5 394.0,257.5 394.2,257.5 394.5,257.5 394.8,257.5 395.0,257.5 395.2,257.5 395.5,257.5 395.8,257.5 396.0,257.5 396.2,257.5 396.5,257.5 396.8,257.5 397.0,257.5 397.2,257.5 397.5,257.5 397.8,257.5 398.0,257.5 398.2,257.5 398.5,257.5 398.8,257.5 399.0,257.5 399.2,257.5 399.5,257.5 399.8,257.5 400.0,257.5 400.2,257.5 400.5,257.5 400.8,257.5 401.0,257.5 401.2,257.5 401.5,257.5 401.8,257.5 402.0,257.5 402.2,257.5 402.5,257.5 402.8,257.5 403.0,257.5 403.2,257.5 403.5,257.5 403.8,257.5 404.0,257.5 404.2,257.5 404.5,257.5 404.8,257.5 405.0,257.5 405.2,257.5 405.5,257.5 405.8,257.5 406.0,257.5 406.2,257.5 406.5,257.5 406.8,257.5 407.0,257.5 407.2,257.5 407.5,257.5 407.8,257.5 408.0,257.5 408.2,257.5 408.5,257.5 408.8,257.5 409.0,257.5 409.2,257.5 409.5,257.5 409.8,257.5 410.0,257.5 410.2,257.5 410.5,257.5 410.8,257.5 411.0,257.5 411.2,257.5 411.5,257.5 411.8,257.5 412.0,257.5 412.2,257.5 412.5,257.5 412.8,257.5 413.0,257.5 413.2,257.5 413.5,257.5 413.8,257.5 414.0,257.5 414.2,257.5 414.5,257.5 414.8,257.5 415.0,257.5 415.2,257.5 415.5,257.5 415.8,257.5 416.0,257.5 416.2,257.5 416.5,257.5 416.8,257.5 417.0,257.5 417.2,257.5 417.5,257.5 417.8,257.5 418.0,257.5 418.2,257.5 418.5,257.5 418.8,257.5 419.0,257.5 419.2,257.5 419.5,257.5 419.8,257.5 420.0,257.5 420.2,257.5 420.5,257.5 420.8,257.5 421.0,257.5 421.2,257.5 421.5,257.5 421.8,257.5 422.0,257.5 422.2,257.5 422.5,257.5 422.8,257.5 423.0,257.5 423.2,257.5 423.5,257.5 423.8,257.5 424.0,257.5 424.2,257.5 424.5,257.5 424.8,257.5 425.0,257.5 425.2,257.5 425.5,257.5 425.8,257.5 426.0,257.5 426.2,257.5 426.5,257.5 426.8,257.5 427.0,257.5 427.2,257.5 427.5,257.5 427.8,257.5 428.0,257.5 428.2,257.5 428.5,257.5 428.8,257.5 429.0,257.5 429.2,257.5 429.5,257.5 429.8,257.5 430.0,257.5 430.2,257.5 430.5,257.5 430.8,257.5 431.0,257.5 431.2,257.5 431.5,257.5 431.8,257.5 432.0,257.5 432.2,257.5 432.5,257.5 432.8,257.5 433.0,257.5 433.2,257.5 433.5,257.5 433.8,257.5 434.0,257.5 434.2,257.5 434.5,257.5 434.8,257.5 435.0,257.5 435.2,257.5 435.5,257.5 435.8,257.5 436.0,257.5 436.2,257.5 436.5,257.5 436.8,257.5 437.0,257.5 437.2,257.5 437.5,257.5 437.8,257.5 438.0,257.5 438.2,257.5 438.5,257.5 438.8,257.5 439.0,257.5 439.2,257.5 439.5,257.5 439.8,257.5 440.0,257.5 440.2,257.5 440.5,257.5 440.8,257.5 441.0,257.5 441.2,257.5 441.5,257.5 441.8,257.5 442.0,257.5 442.2,257.5 442.5,257.5 442.8,257.5 443.0,257.5 443.2,257.5 443.5,257.5 443.8,257.5 444.0,257.5 444.2,257.5 444.5,257.5 444.8,257.5 445.0,257.5 445.2,257.5 445.5,257.5 445.8,257.5 446.0,257.5 446.2,257.5 446.5,257.5 446.8,257.5 447.0,257.5 447.2,257.5 447.5,257.5 447.8,257.5 448.0,257.5 448.2,257.5 448.5,257.5 448.8,257.5 449.0,257.5 449.2,257.5 449.5,257.5 449.8,257.5 450.0,257.5 450.2,257.5 450.5,257.5 450.8,257.5 451.0,257.5 451.2,257.5 451.5,257.5 451.8,257.5 452.0,257.5 452.2,257.5 452.5,257.5 452.8,257.5 453.0,257.5 453.2,257.5 453.5,257.5 453.8,257.5 454.0,257.5 454.2,257.5 454.5,257.5 454.8,257.5 455.0,257.5 455.2,257.5 455.5,257.5 455.8,257.5 456.0,257.5 456.2,257.5 456.5,257.5 456.8,257.5 457.0,257.5 457.2,257.5 457.5,257.5 457.8,257.5 458.0,257.5 458.2,257.5 458.5,257.5 458.8,257.5 459.0,257.5 459.2,257.5 459.5,257.5 459.8,257.5 460.0,257.5 460.2,257.5 460.5,257.5 460.8,257.5 461.0,257.5 461.2,257.5 461.5,257.5 461.8,257.5 462.0,257.5 462.2,257.5 462.5,257.5 462.8,257.5 463.0,257.5 463.2,257.5 463.5,257.5 463.8,257.5 464.0,257.5 464.2,257.5 464.5,257.5 464.8,257.5 465.0,257.5 465.2,257.5 465.5,257.5 465.8,257.5 466.0,257.5 466.2,257.5 466.5,257.5 466.8,257.5 467.0,257.5 467.2,257.5 467.5,257.5 467.8,257.5 468.0,257.5 468.2,257.5 468.5,257.5 468.8,257.5 469.0,257.5 469.2,257.5 469.5,257.5 469.8,257.5 470.0,257.5 470.2,257.5 470.5,257.5 470.8,257.5 471.0,257.5 471.2,257.0 471.5,256.5 471.8,256.0 472.0,255.6 472.2,255.1 472.5,254.6 472.8,254.1 473.0,252.7 473.2,251.1 473.5,249.5 473.8,247.9 474.0,245.3 474.2,242.4 474.5,239.5 474.8,236.6 475.0,234.5 475.2,232.5 475.5,230.6 475.8,228.7 476.0,226.8 476.2,225.8 476.5,225.5 476.8,225.1 477.0,224.8 477.2,224.4 477.5,224.1 477.8,223.8 478.0,223.5 478.2,223.3 478.5,223.0 478.8,222.8 479.0,222.6 479.2,222.3 479.5,222.1 479.8,221.9 480.0,221.8 480.2,221.6 480.5,221.4 480.8,221.2 481.0,221.0 481.2,220.9 481.5,220.7 481.8,220.5 482.0,220.3 482.2,220.2 482.5,220.0 482.8,219.8 483.0,219.6 483.2,219.5 483.5,219.3 483.8,219.1 484.0,218.9 484.2,218.8 484.5,218.6 484.8,218.4 485.0,218.2 485.2,218.1 485.5,217.9 485.8,217.7 486.0,217.5 486.2,217.4 486.5,217.2 486.8,217.0 487.0,216.8 487.2,216.7 487.5,216.5 487.8,216.3 488.0,216.2 488.2,216.0 488.5,215.8 488.8,215.7 489.0,215.5 489.2,215.3 489.5,215.2 489.8,215.0 490.0,214.9 490.2,214.7 490.5,214.6 490.8,214.4 491.0,214.3 491.2,214.1 491.5,214.0 491.8,213.8 492.0,213.7 492.2,213.5 492.5,213.4 492.8,213.3 493.0,213.1 493.2,213.0 493.5,212.9 493.8,212.8 494.0,212.6 494.2,212.5 494.5,212.4 494.8,212.3 495.0,212.2 495.2,212.1 495.5,212.0 495.8,211.8 496.0,211.7 496.2,211.6 496.5,211.6 496.8,211.5 497.0,211.4 497.2,211.3 497.5,211.2 497.8,211.1 498.0,211.0 498.2,210.9 498.5,210.9 498.8,210.8 499.0,210.7 499.2,210.7 499.5,210.6 499.8,210.5 500.0,210.5 500.2,210.4 500.5,210.3 500.8,210.3 501.0,210.2 501.2,210.2 501.5,210.1 501.8,210.1 502.0,210.0 502.2,209.9 502.5,209.9 502.8,209.8 503.0,209.8 503.2,209.8 503.5,209.7 503.8,209.7 504.0,209.6 504.2,209.6 504.5,209.6 504.8,209.5 505.0,209.5 505.2,209.5 505.5,209.4 505.8,209.4 506.0,209.4 506.2,209.4 506.5,209.3 506.8,209.3 507.0,209.3 507.2,209.3 507.5,209.2 507.8,209.2 508.0,209.2 508.2,209.2 508.5,209.2 508.8,209.2 509.0,209.2 509.2,209.2 509.5,209.2 509.8,209.2 510.0,209.2 510.2,209.2 510.5,209.2 510.8,209.3 511.0,209.3 511.2,209.3 511.5,209.3 511.8,209.3 512.0,209.3 512.2,209.4 512.5,209.4 512.8,209.4 513.0,209.5 513.2,209.5 513.5,209.5 513.8,209.6 514.0,209.6 514.2,209.6 514.5,209.7 514.8,209.7 515.0,209.8 515.2,209.8 515.5,209.9 515.8,209.9 516.0,210.0 516.2,210.0 516.5,210.1 516.8,210.1 517.0,210.2 517.2,210.3 517.5,210.3 517.8,210.4 518.0,210.5 518.2,210.6 518.5,210.6 518.8,210.7 519.0,210.8 519.2,210.9 519.5,210.9 519.8,211.0 520.0,211.1 520.2,211.2 520.5,211.3 520.8,211.4 521.0,211.5 521.2,211.6 521.5,211.7 521.8,211.8 522.0,211.8 522.2,211.9 522.5,212.0 522.8,212.2 523.0,212.3 523.2,212.4 523.5,212.5 523.8,212.6 524.0,212.7 524.2,212.8 524.5,212.9 524.8,213.0 525.0,213.1 525.2,213.2 525.5,213.3 525.8,213.5 526.0,213.6 526.2,213.7 526.5,213.8 526.8,214.0 527.0,214.1 527.2,214.2 527.5,214.3 527.8,214.4 528.0,214.6 528.2,214.7 528.5,214.8 528.8,215.0 529.0,215.1 529.2,215.3 529.5,215.4 529.8,215.5 530.0,215.7 530.2,215.8 530.5,215.9 530.8,216.1 531.0,216.3 531.2,216.4 531.5,216.6 531.8,216.8 532.0,216.9 532.2,217.1 532.5,217.3 532.8,217.4 533.0,217.6 533.2,217.8 533.5,218.0 533.8,218.2 534.0,218.4 534.2,218.6 534.5,218.8 534.8,219.0 535.0,219.2 535.2,219.4 535.5,219.6 535.8,219.8 536.0,220.1 536.2,220.3 536.5,220.5 536.8,220.7 537.0,220.9 537.2,221.2 537.5,221.4 537.8,221.6 538.0,221.8 538.2,222.1 538.5,222.3 538.8,222.6 539.0,222.8 539.2,223.1 539.5,223.3 539.8,223.6 540.0,223.8 540.2,224.1 540.5,224.4 540.8,224.7 541.0,225.0 541.2,225.3 541.5,225.6 541.8,225.9 542.0,226.2 542.2,226.5 542.5,226.9 542.8,227.2 543.0,227.5 543.2,229.0 543.5,231.3 543.8,233.7 544.0,236.0 544.2,238.6 544.5,241.2 544.8,243.9 545.0,246.5 545.2,247.8 545.5,249.0 545.8,250.2 546.0,251.5 546.2,252.8 546.5,254.0 546.8,254.7 547.0,255.0 547.2,255.3 547.5,255.6 547.8,255.9 548.0,256.2 548.2,256.6 548.5,256.9 548.8,257.2 549.0,257.5 549.2,257.5 549.5,257.5 549.8,257.5 550.0,257.5 550.2,257.5 550.5,257.5 550.8,257.5 551.0,257.5 551.2,257.5 551.5,257.5 551.8,257.5 552.0,257.5 552.2,257.5 552.5,257.5 552.8,257.5 553.0,257.5 553.2,257.5 553.5,257.5 553.8,257.5 554.0,257.5 554.2,257.5 554.5,257.5 554.8,257.5 555.0,257.5 555.2,257.5 555.5,257.5 555.8,257.5 556.0,257.5 556.2,257.5 556.5,257.5 556.8,257.5 557.0,257.5 557.2,257.5 557.5,257.5 557.8,257.5 558.0,257.5 558.2,257.5 558.5,257.5 558.8,257.5 559.0,257.5 559.2,257.5 559.5,257.5 559.8,257.5 560.0,257.5 560.2,257.5 560.5,257.5 560.8,257.5 561.0,257.5 561.2,257.5 561.5,257.5 561.8,257.5 562.0,257.5 562.2,257.5 562.5,257.5 562.8,257.5 563.0,257.5 563.2,257.5 563.5,257.5 563.8,257.5 564.0,257.5 564.2,257.5 564.5,257.5 564.8,257.5 565.0,257.5 565.2,257.5 565.5,257.5 565.8,257.5 566.0,257.5 566.2,257.5 566.5,257.5 566.8,257.5 567.0,257.5 567.2,257.5 567.5,257.5 567.8,257.5 568.0,257.5 568.2,257.5 568.5,257.5 568.8,257.5 569.0,257.5 569.2,257.5 569.5,257.5 569.8,257.5 570.0,257.5 570.2,257.5 570.5,257.5 570.8,257.5 571.0,257.5 571.2,257.5 571.5,257.5 571.8,257.5 572.0,257.5 572.2,257.5 572.5,257.5 572.8,257.5 573.0,257.5 573.2,257.5 573.5,257.5 573.8,257.5 574.0,257.5 574.2,257.5 574.5,257.5 574.8,257.5 575.0,257.5 575.2,257.5 575.5,257.5 575.8,257.5 576.0,257.5 576.2,257.5 576.5,257.5 576.8,257.5 577.0,257.5 577.2,257.5 577.5,257.5 577.8,257.5 578.0,257.5 578.2,257.5 578.5,257.5 578.8,257.5 579.0,257.5 579.2,257.5 579.5,257.5 579.8,257.5 580.0,257.5 580.2,257.5 580.5,257.5 580.8,257.5 581.0,257.5 581.2,257.5 581.5,257.5 581.8,257.5 582.0,257.5 582.2,257.5 582.5,257.5 582.8,257.5 583.0,257.5 583.2,257.5 583.5,257.5 583.8,257.5 584.0,257.5 584.2,257.5 584.5,257.5 584.8,257.5 585.0,257.5 585.2,257.5 585.5,257.5 585.8,257.5 586.0,257.5 586.2,257.5 586.5,257.5 586.8,257.5 587.0,257.5 587.2,257.5 587.5,257.5 587.8,257.5 588.0,257.5 588.2,257.5 588.5,257.5 588.8,257.5 589.0,257.5 589.2,257.5 589.5,257.5 589.8,257.5 590.0,257.5 590.2,257.5 590.5,257.5 590.8,257.5 591.0,257.5 591.2,257.5 591.5,257.5 591.8,257.5 592.0,257.5 592.2,257.5 592.5,257.5 592.8,257.5 593.0,257.5 593.2,257.5 593.5,257.5 593.8,257.5 594.0,257.5 594.2,257.5 594.5,257.5 594.8,257.5 595.0,257.5 595.2,257.5 595.5,257.5 595.8,257.5 596.0,257.5 596.2,257.5 596.5,257.5 596.8,257.5 597.0,257.5 597.2,257.5 597.5,257.5 597.8,257.5 598.0,257.5 598.2,257.5 598.5,257.5 598.8,257.5 599.0,257.5 599.2,257.5 599.5,257.5 599.8,257.5 600.0,257.5 600.2,257.5 600.5,257.5 600.8,257.5 601.0,257.5 601.2,257.5 601.5,257.5 601.8,257.5 602.0,257.5 602.2,257.5 602.5,257.5 602.8,257.5 603.0,257.5 603.2,257.5 603.5,257.5 603.8,257.5 604.0,257.5 604.2,257.5 604.5,257.5 604.8,257.5 605.0,257.5 605.2,257.5 605.5,257.5 605.8,257.5 606.0,257.5 606.2,257.5 606.5,257.5 606.8,257.5 607.0,257.5 607.2,257.5 607.5,257.5 607.8,257.5 608.0,257.5 608.2,257.5 608.5,257.5 608.8,257.5 609.0,257.5 609.2,257.5 609.5,257.5 609.8,257.5 610.0,257.5 610.2,257.5 610.5,257.5 610.8,257.5 611.0,257.5 611.2,257.5 611.5,257.5 611.8,257.5 612.0,257.5 612.2,257.5 612.5,257.5 612.8,257.5 613.0,257.5 613.2,257.5 613.5,257.5 613.8,257.5 614.0,257.5 614.2,257.5 614.5,257.5 614.8,257.5 615.0,257.5 615.2,257.5 615.5,257.5 615.8,257.5 616.0,257.5 616.2,257.5 616.5,257.5 616.8,257.5 617.0,257.5 617.2,257.5 617.5,257.5 617.8,257.5 618.0,257.5 618.2,257.5 618.5,257.5 618.8,257.5 619.0,257.5 619.2,257.5 619.5,257.5 619.8,257.5 620.0,257.5 620.2,257.5 620.5,257.5 620.8,257.5 621.0,257.5 621.2,257.5 621.5,257.5 621.8,257.5 622.0,257.5 622.2,257.5 622.5,257.5 622.8,257.5 623.0,257.5 623.2,257.5 623.5,257.5 623.8,257.5 624.0,257.5 624.2,257.5 624.5,257.5 624.8,257.5 625.0,257.5 625.2,257.5 625.5,257.5 625.8,257.5 626.0,257.5 626.2,257.5 626.5,257.5 626.8,257.5 627.0,257.5 627.2,257.5 627.5,257.5 627.8,257.5 628.0,257.5 628.2,257.5 628.5,257.5 628.8,257.5 629.0,257.5 629.2,257.5 629.5,257.5 629.8,257.5 630.0,257.5 630.2,257.5 630.5,257.5 630.8,257.5 631.0,257.5 631.2,257.5 631.5,257.5 631.8,257.5 632.0,257.5 632.2,257.5 632.5,257.5 632.8,257.5 633.0,257.5 633.2,257.5 633.5,257.5 633.8,257.5 634.0,257.5 634.2,257.5 634.5,257.5 634.8,257.5 635.0,257.5 635.2,257.5 635.5,257.5 635.8,257.5 636.0,257.5 636.2,257.5 636.5,257.5 636.8,257.5 637.0,257.5 637.2,257.5 637.5,257.5 637.8,257.5 638.0,257.5 638.2,257.5 638.5,257.5 638.8,257.5 639.0,257.5 639.2,257.5 639.5,257.5 639.8,257.5 640.0,257.5 640.2,257.5 640.5,257.5 640.8,257.5 641.0,257.5 641.2,257.5 641.5,257.0 641.8,256.5 642.0,256.0 642.2,255.6 642.5,255.1 642.8,254.6 643.0,254.1 643.2,252.7 643.5,251.1 643.8,249.5 644.0,247.9 644.2,245.3 644.5,242.4 644.8,239.5 645.0,236.6 645.2,234.5 645.5,232.5 645.8,230.6 646.0,228.7 646.2,226.8 646.5,225.8 646.8,225.5 647.0,225.1 647.2,224.8 647.5,224.4 647.8,224.1 648.0,223.8 648.2,223.5 648.5,223.3 648.8,223.0 649.0,222.8 649.2,222.6 649.5,222.3 649.8,222.1 650.0,221.9 650.2,221.8 650.5,221.6 650.8,221.4 651.0,221.2 651.2,221.0 651.5,220.9 651.8,220.7 652.0,220.5 652.2,220.3 652.5,220.2 652.8,220.0 653.0,219.8 653.2,219.6 653.5,219.5 653.8,219.3 654.0,219.1 654.2,218.9 654.5,218.8 654.8,218.6 655.0,218.4 655.2,218.2 655.5,218.1 655.8,217.9 656.0,217.7 656.2,217.5 656.5,217.4 656.8,217.2 657.0,217.0 657.2,216.8 657.5,216.7 657.8,216.5 658.0,216.3 658.2,216.2 658.5,216.0 658.8,215.8 659.0,215.7 659.2,215.5 659.5,215.3 659.8,215.2 660.0,215.0 660.2,214.9 660.5,214.7 660.8,214.6 661.0,214.4 661.2,214.3 661.5,214.1 661.8,214.0 662.0,213.8 662.2,213.7 662.5,213.5 662.8,213.4 663.0,213.3 663.2,213.1 663.5,213.0 663.8,212.9 664.0,212.8 664.2,212.6 664.5,212.5 664.8,212.4 665.0,212.3 665.2,212.2 665.5,212.1 665.8,212.0 666.0,211.8 666.2,211.7 666.5,211.6 666.8,211.6 667.0,211.5 667.2,211.4 667.5,211.3 667.8,211.2 668.0,211.1 668.2,211.0 668.5,210.9 668.8,210.9 669.0,210.8 669.2,210.7 669.5,210.7 669.8,210.6 670.0,210.5 670.2,210.5 670.5,210.4 670.8,210.3 671.0,210.3 671.2,210.2 671.5,210.2 671.8,210.1 672.0,210.1 672.2,210.0 672.5,209.9 672.8,209.9 673.0,209.8 673.2,209.8 673.5,209.8 673.8,209.7 674.0,209.7 674.2,209.6 674.5,209.6 674.8,209.6 675.0,209.5 675.2,209.5 675.5,209.5 675.8,209.4 676.0,209.4 676.2,209.4 676.5,209.4 676.8,209.3 677.0,209.3 677.2,209.3 677.5,209.3 677.8,209.2 678.0,209.2 678.2,209.2 678.5,209.2 678.8,209.2 679.0,209.2 679.2,209.2 679.5,209.2 679.8,209.2 680.0,209.2 680.2,209.2 680.5,209.2 680.8,209.2 681.0,209.3 681.2,209.3 681.5,209.3 681.8,209.3 682.0,209.3 682.2,209.3 682.5,209.4 682.8,209.4 683.0,209.4 683.2,209.5 683.5,209.5 683.8,209.5 684.0,209.6 684.2,209.6 684.5,209.6 684.8,209.7 685.0,209.7 685.2,209.8 685.5,209.8 685.8,209.9 686.0,209.9 686.2,210.0 686.5,210.0 686.8,210.1 687.0,210.1 687.2,210.2 687.5,210.3 687.8,210.3 688.0,210.4 688.2,210.5 688.5,210.6 688.8,210.6 689.0,210.7 689.2,210.8 689.5,210.9 689.8,210.9 690.0,211.0 690.2,211.1 690.5,211.2 690.8,211.3 691.0,211.4 691.2,211.5 691.5,211.6 691.8,211.7 692.0,211.8 692.2,211.8 692.5,211.9 692.8,212.0 693.0,212.2 693.2,212.3 693.5,212.4 693.8,212.5 694.0,212.6 694.2,212.7 694.5,212.8 694.8,212.9 695.0,213.0 695.2,213.1 695.5,213.2 695.8,213.3 696.0,213.5 696.2,213.6 696.5,213.7 696.8,213.8 697.0,214.0 697.2,214.1 697.5,214.2 697.8,214.3 698.0,214.4 698.2,214.6 698.5,214.7 698.8,214.8 699.0,215.0 699.2,215.1 699.5,215.3 699.8,215.4 700.0,215.5 700.2,215.7 700.5,215.8 700.8,215.9 701.0,216.1 701.2,216.3 701.5,216.4 701.8,216.6 702.0,216.8 702.2,216.9 702.5,217.1 702.8,217.3 703.0,217.4 703.2,217.6 703.5,217.8 703.8,218.0 704.0,218.2 704.2,218.4 704.5,218.6 704.8,218.8 705.0,219.0 705.2,219.2 705.5,219.4 705.8,219.6 706.0,219.8 706.2,220.1 706.5,220.3 706.8,220.5 707.0,220.7 707.2,220.9 707.5,221.2 707.8,221.4 708.0,221.6 708.2,221.8 708.5,222.1 708.8,222.3 709.0,222.6 709.2,222.8 709.5,223.1 709.8,223.3 710.0,223.6 710.2,223.8 710.5,224.1 710.8,224.4 711.0,224.7 711.2,225.0 711.5,225.3 711.8,225.6 712.0,225.9 712.2,226.2 712.5,226.5 712.8,226.9 713.0,227.2 713.2,227.5 713.5,229.0 713.8,231.3 714.0,233.7 714.2,236.0 714.5,238.6 714.8,241.2 715.0,243.9 715.2,246.5 715.5,247.8 715.8,249.0 716.0,250.2 716.2,251.5 716.5,252.8 716.8,254.0 717.0,254.7 717.2,255.0 717.5,255.3 717.8,255.6 718.0,255.9 718.2,256.2 718.5,256.6 718.8,256.9 719.0,257.2 719.2,257.5 719.5,257.5 719.8,257.5 720.0,257.5 720.2,257.5 720.5,257.5 720.8,257.5 721.0,257.5" fill="none" stroke="#ffff00" stroke-width="1" />
<line x1="40.5" y1="258.5" x2="721" y2="258.5" stroke="#ff8000" stroke-width="1" />
<polyline points="40.5,269.5 132.5,269.5 132.5,281.5 203.5,281.5 203.5,269.5 302.8,269.5 302.8,281.5 373.8,281.5 373.8,269.5 473.0,269.5 473.0,281.5 544.0,281.5 544.0,269.5 643.2,269.5 643.2,281.5 714.2,281.5 714.2,269.5 721.0,269.5" fill="none" stroke="#8000ff" stroke-width="1" />
</g>
<g font-family="'Liberation Sans', sans-serif">
<text x="5" y="23.1" fill="#c0c0c0" stroke="#c0c0c0" stroke-width="0.25" font-size="14.3" textLength="26.6" lengthAdjust="spacingAndGlyphs" text-anchor="start">3.0V</text>
<text x="5" y="60.1" fill="#c0c0c0" stroke="#c0c0c0" stroke-width="0.25" font-size="14.3" textLength="26.6" lengthAdjust="spacingAndGlyphs" text-anchor="start">1.5V</text>
<text x="5" y="97.1" fill="#c0c0c0" stroke="#c0c0c0" stroke-width="0.25" font-size="14.3" textLength="26.6" lengthAdjust="spacingAndGlyphs" text-anchor="start">0.0V</text>
<text x="5" y="118.1" fill="#c0c0c0" stroke="#c0c0c0" stroke-width="0.25" font-size="14.3" textLength="26.6" lengthAdjust="spacingAndGlyphs" text-anchor="start">2.0V</text>
<text x="5" y="136.6" fill="#c0c0c0" stroke="#c0c0c0" stroke-width="0.25" font-size="14.3" textLength="26.6" lengthAdjust="spacingAndGlyphs" text-anchor="start">1.7V</text>
<text x="5" y="155.1" fill="#c0c0c0" stroke="#c0c0c0" stroke-width="0.25" font-size="14.3" textLength="26.6" lengthAdjust="spacingAndGlyphs" text-anchor="start">1.4V</text>
<text x="5" y="173.6" fill="#c0c0c0" stroke="#c0c0c0" stroke-width="0.25" font-size="14.3" textLength="26.6" lengthAdjust="spacingAndGlyphs" text-anchor="start">1.1V</text>
<text x="5" y="192.1" fill="#c0c0c0" stroke="#c0c0c0" stroke-width="0.25" font-size="14.3" textLength="26.6" lengthAdjust="spacingAndGlyphs" text-anchor="start">0.8V</text>
<text x="5" y="213.1" fill="#c0c0c0" stroke="#c0c0c0" stroke-width="0.25" font-size="14.3" textLength="26.6" lengthAdjust="spacingAndGlyphs" text-anchor="start">4.2V</text>
<text x="5" y="252.1" fill="#c0c0c0" stroke="#c0c0c0" stroke-width="0.25" font-size="14.3" textLength="26.6" lengthAdjust="spacingAndGlyphs" text-anchor="start">0.9V</text>
<text x="0.5" y="291.1" fill="#c0c0c0" stroke="#c0c0c0" stroke-width="0.25" font-size="14.3" textLength="31" lengthAdjust="spacingAndGlyphs" text-anchor="start">-2.4V</text>
<text x="736" y="23.1" fill="#c0c0c0" stroke="#c0c0c0" stroke-width="0.25" font-size="14.3" textLength="38.5" lengthAdjust="spacingAndGlyphs" text-anchor="start">1.4mA</text>
<text x="736" y="58.1" fill="#c0c0c0" stroke="#c0c0c0" stroke-width="0.25" font-size="14.3" textLength="38.5" lengthAdjust="spacingAndGlyphs" text-anchor="start">0.7mA</text>
<text x="731.7" y="97.1" fill="#c0c0c0" stroke="#c0c0c0" stroke-width="0.25" font-size="14.3" textLength="43" lengthAdjust="spacingAndGlyphs" text-anchor="start">-0.1mA</text>
<text x="732" y="118.1" fill="#c0c0c0" stroke="#c0c0c0" stroke-width="0.25" font-size="14.3" textLength="38.7" lengthAdjust="spacingAndGlyphs" text-anchor="start">990µA</text>
<text x="732" y="136.6" fill="#c0c0c0" stroke="#c0c0c0" stroke-width="0.25" font-size="14.3" textLength="38.7" lengthAdjust="spacingAndGlyphs" text-anchor="start">720µA</text>
<text x="732" y="155.1" fill="#c0c0c0" stroke="#c0c0c0" stroke-width="0.25" font-size="14.3" textLength="38.7" lengthAdjust="spacingAndGlyphs" text-anchor="start">450µA</text>
<text x="732" y="173.6" fill="#c0c0c0" stroke="#c0c0c0" stroke-width="0.25" font-size="14.3" textLength="38.7" lengthAdjust="spacingAndGlyphs" text-anchor="start">180µA</text>
<text x="735.5" y="192.1" fill="#c0c0c0" stroke="#c0c0c0" stroke-width="0.25" font-size="14.3" textLength="35.2" lengthAdjust="spacingAndGlyphs" text-anchor="start">-90µA</text>
<text x="40.0" y="307" fill="#c0c0c0" stroke="#c0c0c0" stroke-width="0.25" font-size="14.3" textLength="38.6" lengthAdjust="spacingAndGlyphs" text-anchor="middle">0.0ms</text>
<text x="108.0" y="307" fill="#c0c0c0" stroke="#c0c0c0" stroke-width="0.25" font-size="14.3" textLength="38.6" lengthAdjust="spacingAndGlyphs" text-anchor="middle">0.4ms</text>
<text x="176.0" y="307" fill="#c0c0c0" stroke="#c0c0c0" stroke-width="0.25" font-size="14.3" textLength="38.6" lengthAdjust="spacingAndGlyphs" text-anchor="middle">0.8ms</text>
<text x="244.0" y="307" fill="#c0c0c0" stroke="#c0c0c0" stroke-width="0.25" font-size="14.3" textLength="38.6" lengthAdjust="spacingAndGlyphs" text-anchor="middle">1.2ms</text>
<text x="312.0" y="307" fill="#c0c0c0" stroke="#c0c0c0" stroke-width="0.25" font-size="14.3" textLength="38.6" lengthAdjust="spacingAndGlyphs" text-anchor="middle">1.6ms</text>
<text x="381.0" y="307" fill="#c0c0c0" stroke="#c0c0c0" stroke-width="0.25" font-size="14.3" textLength="38.6" lengthAdjust="spacingAndGlyphs" text-anchor="middle">2.0ms</text>
<text x="449.0" y="307" fill="#c0c0c0" stroke="#c0c0c0" stroke-width="0.25" font-size="14.3" textLength="38.6" lengthAdjust="spacingAndGlyphs" text-anchor="middle">2.4ms</text>
<text x="517.0" y="307" fill="#c0c0c0" stroke="#c0c0c0" stroke-width="0.25" font-size="14.3" textLength="38.6" lengthAdjust="spacingAndGlyphs" text-anchor="middle">2.8ms</text>
<text x="585.0" y="307" fill="#c0c0c0" stroke="#c0c0c0" stroke-width="0.25" font-size="14.3" textLength="38.6" lengthAdjust="spacingAndGlyphs" text-anchor="middle">3.2ms</text>
<text x="653.0" y="307" fill="#c0c0c0" stroke="#c0c0c0" stroke-width="0.25" font-size="14.3" textLength="38.6" lengthAdjust="spacingAndGlyphs" text-anchor="middle">3.6ms</text>
<text x="721.0" y="307" fill="#c0c0c0" stroke="#c0c0c0" stroke-width="0.25" font-size="14.3" textLength="38.6" lengthAdjust="spacingAndGlyphs" text-anchor="middle">4.0ms</text>
<text x="153" y="13" fill="#ff0000" stroke="#ff0000" stroke-width="0.25" font-size="13.6" font-weight="bold" textLength="31.4" lengthAdjust="spacingAndGlyphs" text-anchor="middle">V(sb)</text>
<text x="380" y="13" fill="#00ff80" stroke="#00ff80" stroke-width="0.25" font-size="13.6" font-weight="bold" textLength="31.3" lengthAdjust="spacingAndGlyphs" text-anchor="middle">V(aa)</text>
<text x="607" y="13" fill="#ff00ff" stroke="#ff00ff" stroke-width="0.25" font-size="13.6" font-weight="bold" textLength="27" lengthAdjust="spacingAndGlyphs" text-anchor="middle">I(V4)</text>
<text x="210" y="108" fill="#00ff00" stroke="#00ff00" stroke-width="0.25" font-size="13.6" font-weight="bold" textLength="31.4" lengthAdjust="spacingAndGlyphs" text-anchor="middle">V(sa)</text>
<text x="550" y="108" fill="#00ffff" stroke="#00ffff" stroke-width="0.25" font-size="13.6" font-weight="bold" textLength="29" lengthAdjust="spacingAndGlyphs" text-anchor="middle">I(V2)</text>
<text x="125" y="203.4" fill="#0000ff" stroke="#0000ff" stroke-width="0.25" font-size="13.6" font-weight="bold" textLength="32" lengthAdjust="spacingAndGlyphs" text-anchor="middle">V(qa)</text>
<text x="295" y="203.4" fill="#ffff00" stroke="#ffff00" stroke-width="0.25" font-size="13.6" font-weight="bold" textLength="32" lengthAdjust="spacingAndGlyphs" text-anchor="middle">V(qb)</text>
<text x="465" y="203.4" fill="#8000ff" stroke="#8000ff" stroke-width="0.25" font-size="13.6" font-weight="bold" textLength="124" lengthAdjust="spacingAndGlyphs" text-anchor="middle">(u(V(sb)-V(aa))-2)*1V</text>
<text x="635" y="203.4" fill="#ff8000" stroke="#ff8000" stroke-width="0.25" font-size="13.6" font-weight="bold" textLength="14" lengthAdjust="spacingAndGlyphs" text-anchor="middle">0V</text>
</g>
<g fill="none" stroke-width="1" stroke-linecap="square" shape-rendering="crispEdges">
<circle cx="97" cy="403.0" r="20.4" stroke="#000080"/>
<path d="M97 377.4V382.6M97 423.5V428.6M91.9 390.2H102.1M97 385.1V395.4M91.9 415.8H102.1" stroke="#000080"/>
<path d="M85.4 428.6H108.6L97.0 440.1Z" stroke="#0000ff"/>
<circle cx="270.8" cy="403.0" r="20.4" stroke="#000080"/>
<path d="M270.8 377.4V382.6M270.8 423.5V428.6M265.7 390.2H275.90000000000003M270.8 385.1V395.4M265.7 415.8H275.90000000000003" stroke="#000080"/>
<path d="M259.2 428.6H282.4L270.8 440.1Z" stroke="#0000ff"/>
<circle cx="97" cy="505.5" r="20.4" stroke="#000080"/>
<path d="M97 479.9V485.1M97 526.0V531.1M91.9 492.7H102.1M97 487.6V497.9M91.9 518.3H102.1" stroke="#000080"/>
<path d="M85.4 531.1H108.6L97.0 542.6Z" stroke="#0000ff"/>
<circle cx="270.8" cy="506.0" r="20.4" stroke="#000080"/>
<path d="M270.8 480.4V485.6M270.8 526.5V531.6M265.7 493.2H275.90000000000003M270.8 488.1V498.4M265.7 518.8H275.90000000000003" stroke="#000080"/>
<path d="M259.2 531.6H282.4L270.8 543.1Z" stroke="#0000ff"/>
<path d="M557.5 346.2H568M619 346.2H643M658 346.2H690.5V408.7M690.5 449.7V459.5M557.5 346.2V367M557.5 419V510.5H568.7M557.5 346.2L609 398.5H610M660 398.5H690.5M547.5 459.5H568M619 459.5H690.5M608.7 520.7H690.5V459.5M568.7 531H557.5V582M497 582H500M547 582H567M618 582H620" stroke="#0000ff"/>
<polyline points="567.9,346.2 573.0,346.2 578.1,336.0 588.4,356.4 598.6,336.0 608.9,356.4 614.0,346.2 619.1,346.2" stroke="#000080"/>
<polyline points="609.5,398.5 614.6,398.5 619.7,388.3 630.0,408.7 640.2,388.3 650.5,408.7 655.6,398.5 660.7,398.5" stroke="#000080"/>
<polyline points="567.9,459.5 573.0,459.5 578.1,449.3 588.4,469.7 598.6,449.3 608.9,469.7 614.0,459.5 619.1,459.5" stroke="#000080"/>
<polyline points="495.8,582.0 500.9,582.0 506.0,571.8 516.3,592.2 526.5,571.8 536.8,592.2 541.9,582.0 547.0,582.0" stroke="#000080"/>
<polyline points="566.9,582.0 572.0,582.0 577.1,571.8 587.4,592.2 597.6,571.8 607.9,592.2 613.0,582.0 618.1,582.0" stroke="#000080"/>
<polyline points="557.5,367.0 557.5,372.1 567.7,377.2 547.3,387.5 567.7,397.7 547.3,408.0 557.5,413.1 557.5,418.2" stroke="#000080"/>
<path d="M643 336.0V356.4M643 346.2L657.6 336.0V356.4Z" stroke="#000080"/>
<path d="M690.5 408.7V421.5M690.5 436.2V449.7M680 421.5H702M690.5 421.5L680.5 436.2H701.5Z" stroke="#000080"/>
<path d="M654.4 418l3.4 -4.6M654.4 418l5 1.2M654.4 418C659.0 416.4 662.0 416 664.5 420S668.0 427 670.5 426.3S674.0 425.5 674.8 423" stroke="#000080" stroke-linecap="butt"/>
<path d="M654.4 428.4l3.4 -4.6M654.4 428.4l5 1.2M654.4 428.4C659.0 426.79999999999995 662.0 426.4 664.5 430.4S668.0 437.4 670.5 436.7S674.0 435.9 674.8 433.4" stroke="#000080" stroke-linecap="butt"/>
<path d="M619.8 570.5H619.8V593.5L630.8 582Z" stroke="#0000ff"/>
<path d="M496.4 490H537.8M516.6 490V501.8M528 490L547.5 459.5M505.5 490L496.5 475M486 459L493.2 477.6L498.8 472.4Z" stroke="#000080"/>
<path d="M568.7 500.7V540.9L608.7 520.7ZM588.7 510.5V499.7M588.7 530.8V541.3M570.5 510.5H575.5M570.5 531H575.5M573 528.5V533.5M591 508H596M593.5 505.5V510.5M591 533.7H596" stroke="#000080"/>
<path d="M576.6 541.3H599.8L588.2 552.8Z" stroke="#0000ff"/>
<rect x="554.0" y="342.7" width="7" height="7" fill="#0000ff" stroke="none"/>
<rect x="687.0" y="395.0" width="7" height="7" fill="#0000ff" stroke="none"/>
<rect x="554.0" y="456.0" width="7" height="7" fill="#0000ff" stroke="none"/>
<rect x="687.0" y="456.0" width="7" height="7" fill="#0000ff" stroke="none"/>
<rect x="554.0" y="578.5" width="7" height="7" fill="#0000ff" stroke="none"/>
<path d="M394.2 346V360M394.2 374V387.2M383.3 367.4H386M406 367.4H414" stroke="#0000ff"/>
<path d="M386 359.2V375.6L401.4 367.4Z" stroke="#000080"/><circle cx="403.6" cy="367.4" r="2.1" stroke="#000080"/>
<path d="M389.5 366.5H396.5M389.5 368.5H396.5M394.5 361.5H399M396.7 359.3V363.7M394.5 373.3H399" stroke="#000080" stroke-linecap="butt"/>
<path d="M382.6 387.2H405.8L394.2 398.7Z" stroke="#0000ff"/>
<path d="M363.2 479.6V508.4M363.2 513V541" stroke="#0000ff"/><path d="M353 508.4H374M353 513H374" stroke="#000080"/>
<path d="M351.6 541.0H374.8L363.2 552.5Z" stroke="#0000ff"/>
</g>
<g font-family="'DejaVu Sans', 'Liberation Sans', sans-serif" font-weight="bold" font-size="13.3">
<text x="111.2" y="383.0" fill="#000" textLength="18.9" lengthAdjust="spacingAndGlyphs" text-anchor="start" xml:space="preserve">V2</text>
<text x="111.2" y="401.3" fill="#000" textLength="126.5" lengthAdjust="spacingAndGlyphs" text-anchor="start" xml:space="preserve">SINE(1.27 .64 1k)</text>
<text x="111.2" y="419.3" fill="#000" textLength="37.6" lengthAdjust="spacingAndGlyphs" text-anchor="start" xml:space="preserve">AC .1</text>
<text x="111.2" y="437.2" fill="#000" textLength="70.0" lengthAdjust="spacingAndGlyphs" text-anchor="start" xml:space="preserve">Rser=250</text>
<text x="111.2" y="485.7" fill="#000" textLength="18.9" lengthAdjust="spacingAndGlyphs" text-anchor="start" xml:space="preserve">V4</text>
<text x="111.2" y="502.9" fill="#000" textLength="126.5" lengthAdjust="spacingAndGlyphs" text-anchor="start" xml:space="preserve">SINE(1.27 .64 1k)</text>
<text x="111.2" y="520.9" fill="#000" textLength="37.6" lengthAdjust="spacingAndGlyphs" text-anchor="start" xml:space="preserve">AC .1</text>
<text x="111.2" y="538.9" fill="#000" textLength="70.0" lengthAdjust="spacingAndGlyphs" text-anchor="start" xml:space="preserve">Rser=250</text>
<text x="285.3" y="383.0" fill="#000" textLength="18.9" lengthAdjust="spacingAndGlyphs" text-anchor="start" xml:space="preserve">V3</text>
<text x="285.3" y="400.7" fill="#000" textLength="31.7" lengthAdjust="spacingAndGlyphs" text-anchor="start" xml:space="preserve">1.75</text>
<text x="285.3" y="418.8" fill="#000" textLength="50.3" lengthAdjust="spacingAndGlyphs" text-anchor="start" xml:space="preserve">Rser=1</text>
<text x="285.3" y="486.1" fill="#000" textLength="18.9" lengthAdjust="spacingAndGlyphs" text-anchor="start" xml:space="preserve">V1</text>
<text x="285.3" y="503.1" fill="#000" textLength="8.9" lengthAdjust="spacingAndGlyphs" text-anchor="start" xml:space="preserve">5</text>
<text x="285.3" y="520.8" fill="#000" textLength="50.3" lengthAdjust="spacingAndGlyphs" text-anchor="start" xml:space="preserve">Rser=1</text>
<text transform="translate(101.5 377) rotate(-90)" fill="#000" textLength="18.0" lengthAdjust="spacingAndGlyphs" text-anchor="start" xml:space="preserve">SA</text>
<text transform="translate(101.5 479.5) rotate(-90)" fill="#000" textLength="18.0" lengthAdjust="spacingAndGlyphs" text-anchor="start" xml:space="preserve">SB</text>
<text transform="translate(275.3 377) rotate(-90)" fill="#000" textLength="9.8" lengthAdjust="spacingAndGlyphs" text-anchor="start" xml:space="preserve">B</text>
<text transform="translate(275.3 481.2) rotate(-90)" fill="#000" textLength="9.4" lengthAdjust="spacingAndGlyphs" text-anchor="start" xml:space="preserve">P</text>
<text transform="translate(367.7 481.2) rotate(-90)" fill="#000" textLength="9.4" lengthAdjust="spacingAndGlyphs" text-anchor="start" xml:space="preserve">P</text>
<text transform="translate(398.7 347.2) rotate(-90)" fill="#000" textLength="9.4" lengthAdjust="spacingAndGlyphs" text-anchor="start" xml:space="preserve">P</text>
<text x="368.1" y="500.5" fill="#000" textLength="18.4" lengthAdjust="spacingAndGlyphs" text-anchor="start" xml:space="preserve">C3</text>
<text x="368.1" y="531.8" fill="#000" textLength="27.3" lengthAdjust="spacingAndGlyphs" text-anchor="start" xml:space="preserve">10µ</text>
<text x="121.3" y="577.4" fill="#000" textLength="178.5" lengthAdjust="spacingAndGlyphs" text-anchor="start" xml:space="preserve">.tran 0 .1k 0 480u startup</text>
<text x="364" y="373" fill="#000" textLength="18.0" lengthAdjust="spacingAndGlyphs" text-anchor="start" xml:space="preserve">SA</text>
<text x="414.9" y="373" fill="#000" textLength="19.8" lengthAdjust="spacingAndGlyphs" text-anchor="start" xml:space="preserve">QA</text>
<text x="414.9" y="358" fill="#0000e8" textLength="41.8" lengthAdjust="spacingAndGlyphs" text-anchor="start" xml:space="preserve">Digital</text>
<text x="414.9" y="393.3" fill="#0000e8" textLength="43.2" lengthAdjust="spacingAndGlyphs" text-anchor="start" xml:space="preserve">1/6 of</text>
<text x="414.5" y="410.2" fill="#0000e8" textLength="55.3" lengthAdjust="spacingAndGlyphs" text-anchor="start" xml:space="preserve">SN7404</text>
<text x="583.4" y="332.6" fill="#000" textLength="18.8" lengthAdjust="spacingAndGlyphs" text-anchor="start" xml:space="preserve">R5</text>
<text x="580.0" y="371.2" fill="#000" textLength="26.8" lengthAdjust="spacingAndGlyphs" text-anchor="start" xml:space="preserve">640</text>
<text x="639.2" y="332.6" fill="#000" textLength="19.6" lengthAdjust="spacingAndGlyphs" text-anchor="start" xml:space="preserve">D2</text>
<text x="622.2" y="371.2" fill="#000" textLength="54.7" lengthAdjust="spacingAndGlyphs" text-anchor="start" xml:space="preserve">1N4148</text>
<text x="624.5" y="383.8" fill="#000" textLength="18.8" lengthAdjust="spacingAndGlyphs" text-anchor="start" xml:space="preserve">R4</text>
<text x="622.2" y="422.2" fill="#000" textLength="23.8" lengthAdjust="spacingAndGlyphs" text-anchor="start" xml:space="preserve">1k1</text>
<text x="526.2" y="385.8" fill="#000" textLength="18.3" lengthAdjust="spacingAndGlyphs" text-anchor="start" xml:space="preserve">R6</text>
<text x="517.8" y="409.4" fill="#000" textLength="26.3" lengthAdjust="spacingAndGlyphs" text-anchor="start" xml:space="preserve">300</text>
<text x="666.1" y="413.2" fill="#000" textLength="19.6" lengthAdjust="spacingAndGlyphs" text-anchor="start" xml:space="preserve">D1</text>
<text x="583.4" y="445.2" fill="#000" textLength="18.8" lengthAdjust="spacingAndGlyphs" text-anchor="start" xml:space="preserve">R1</text>
<text x="611.2" y="454.6" fill="#000" textLength="74.0" lengthAdjust="spacingAndGlyphs" text-anchor="start" xml:space="preserve">QTLP690C</text>
<text x="576.0" y="483.2" fill="#000" textLength="35.3" lengthAdjust="spacingAndGlyphs" text-anchor="start" xml:space="preserve">100k</text>
<text x="597.4" y="505.5" fill="#000" textLength="19.4" lengthAdjust="spacingAndGlyphs" text-anchor="start" xml:space="preserve">U1</text>
<text x="624.4" y="501.0" fill="#0000e8" textLength="47.0" lengthAdjust="spacingAndGlyphs" text-anchor="start" xml:space="preserve">Analog</text>
<text x="637.7" y="517" fill="#000" textLength="21.3" lengthAdjust="spacingAndGlyphs" text-anchor="start" xml:space="preserve">QB</text>
<text x="598.5" y="547.4" fill="#000" textLength="53.2" lengthAdjust="spacingAndGlyphs" text-anchor="start" xml:space="preserve">TLV314</text>
<text x="511" y="568.6" fill="#000" textLength="18.8" lengthAdjust="spacingAndGlyphs" text-anchor="start" xml:space="preserve">R2</text>
<text x="583.7" y="568.6" fill="#000" textLength="18.8" lengthAdjust="spacingAndGlyphs" text-anchor="start" xml:space="preserve">R3</text>
<text x="500.0" y="606.0" fill="#000" textLength="43.2" lengthAdjust="spacingAndGlyphs" text-anchor="start" xml:space="preserve">1k894</text>
<text x="580.3" y="606.0" fill="#000" textLength="26.4" lengthAdjust="spacingAndGlyphs" text-anchor="start" xml:space="preserve">3k3</text>
<text x="467.2" y="464.6" fill="#000" textLength="18.0" lengthAdjust="spacingAndGlyphs" text-anchor="start" xml:space="preserve">SB</text>
<text x="486" y="587" fill="#000" textLength="9.8" lengthAdjust="spacingAndGlyphs" text-anchor="start" xml:space="preserve">B</text>
<text transform="translate(521.3 511) rotate(-90)" fill="#000" textLength="9.8" lengthAdjust="spacingAndGlyphs" text-anchor="start" xml:space="preserve">B</text>
<text transform="translate(592.8 500.8) rotate(-90)" fill="#000" textLength="9.4" lengthAdjust="spacingAndGlyphs" text-anchor="start" xml:space="preserve">P</text>
<text transform="translate(553.2 560) rotate(-90)" fill="#000" textLength="14.8" lengthAdjust="spacingAndGlyphs" text-anchor="start" xml:space="preserve">aa</text>
</g>
</svg>
</body></html>
